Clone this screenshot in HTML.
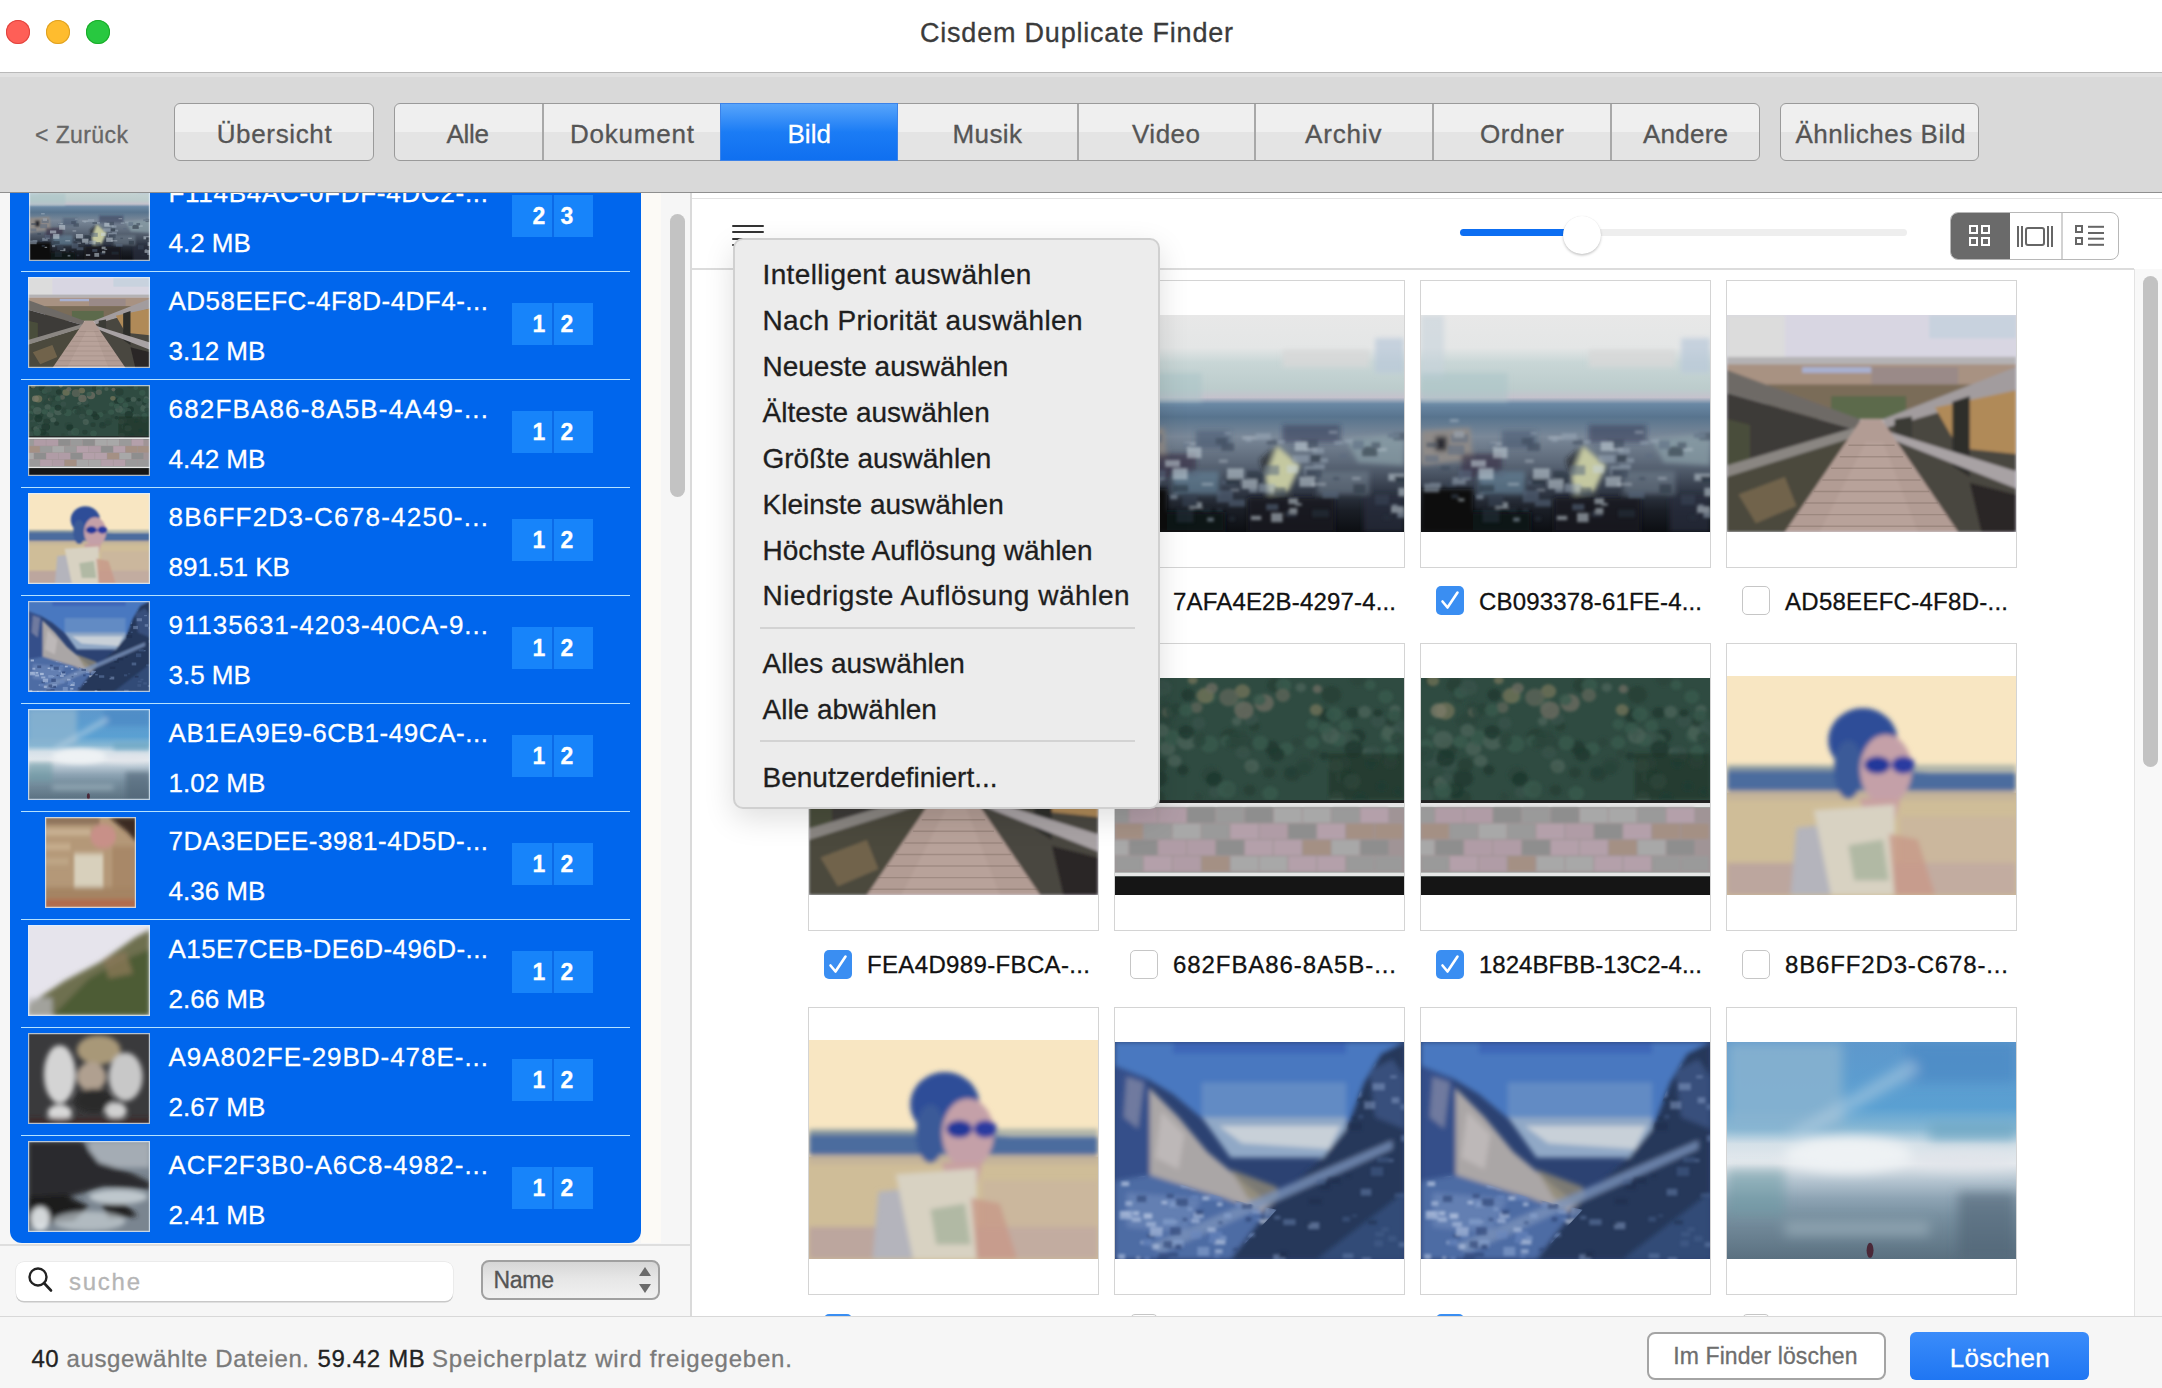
<!DOCTYPE html>
<html><head><meta charset="utf-8"><style>
html,body{margin:0;padding:0;width:2162px;height:1388px;overflow:hidden;background:#fff;position:relative}
body *{box-sizing:border-box}
.t{position:absolute;white-space:pre;line-height:1;font-family:"Liberation Sans",sans-serif}
.a{position:absolute}
</style></head><body>
<svg width="0" height="0" style="position:absolute"><defs>
<clipPath id="cMR"><polygon points="100,0 92,4 86,14 80,30 72,40 56,54 40,75 100,75"/></clipPath>
<clipPath id="cML"><polygon points="0,48 12,46 38,54 56,58 40,75 0,75"/></clipPath>
<filter id="b1" x="-20%" y="-20%" width="140%" height="140%"><feGaussianBlur stdDeviation="1"/></filter>
<filter id="b2" x="-20%" y="-20%" width="140%" height="140%"><feGaussianBlur stdDeviation="2"/></filter>
<filter id="b05" x="-20%" y="-20%" width="140%" height="140%"><feGaussianBlur stdDeviation="0.5"/></filter>
<linearGradient id="gCity" x1="0" y1="0" x2="0" y2="1">
 <stop offset="0" stop-color="#e8e8e8"/><stop offset="0.15" stop-color="#e4e6e6"/><stop offset="0.22" stop-color="#c8d6d6"/>
 <stop offset="0.34" stop-color="#bccccc"/><stop offset="0.38" stop-color="#c4c2cc"/><stop offset="0.41" stop-color="#6a88a4"/>
 <stop offset="0.47" stop-color="#58748e"/><stop offset="0.56" stop-color="#7a8898"/><stop offset="0.68" stop-color="#5c6878"/>
 <stop offset="0.8" stop-color="#343c4a"/><stop offset="0.9" stop-color="#1a1e26"/><stop offset="1" stop-color="#0c0e12"/></linearGradient>
<linearGradient id="gSky" x1="0" y1="0" x2="0" y2="1">
 <stop offset="0" stop-color="#5e98cc"/><stop offset="0.3" stop-color="#5aa0d2"/><stop offset="0.4" stop-color="#88b8d4"/>
 <stop offset="0.47" stop-color="#d4e0e8"/><stop offset="0.56" stop-color="#e6eaee"/><stop offset="0.64" stop-color="#b4c4d0"/>
 <stop offset="0.72" stop-color="#8ea4b4"/><stop offset="0.8" stop-color="#7890a0"/><stop offset="1" stop-color="#5a7080"/></linearGradient>
</defs></svg>
<div class="a" style="left:0;top:0;width:2162px;height:72px;background:#ffffff"></div>
<div class="a" style="left:6px;top:20px;width:24px;height:24px;border-radius:50%;background:#fe5f57;box-shadow:inset 0 0 0 1px #e0443e"></div>
<div class="a" style="left:46px;top:20px;width:24px;height:24px;border-radius:50%;background:#febc2e;box-shadow:inset 0 0 0 1px #dea123"></div>
<div class="a" style="left:86px;top:20px;width:24px;height:24px;border-radius:50%;background:#28c840;box-shadow:inset 0 0 0 1px #1aab29"></div>
<div class="t" style="left:920.0px;top:19.5px;font-size:27px;color:#3b3b3b;-webkit-text-stroke:0.3px #3b3b3b;letter-spacing:0.79px;font-weight:400;">Cisdem Duplicate Finder</div>
<div class="a" style="left:0;top:72px;width:2162px;height:1px;background:#b9b9b9"></div>
<div class="a" style="left:0;top:73px;width:2162px;height:119px;background:#d9d9d9"></div>
<div class="a" style="left:0;top:73px;width:2162px;height:4px;background:#e1e1e1"></div>
<div class="a" style="left:0;top:192px;width:2162px;height:1px;background:#8f8f8f"></div>
<div class="t" style="left:35.0px;top:123.8px;font-size:23px;color:#666666;-webkit-text-stroke:0.3px #666666;letter-spacing:0.41px;font-weight:400;">< Zurück</div>
<div class="a" style="border:1.5px solid #9a9a9a;border-radius:6px;background:linear-gradient(#efefef 0,#efefef 50%,#e4e4e4 50%,#e4e4e4 100%);left:174px;top:103px;width:200px;height:58px"></div>
<div class="t" style="left:216.7px;top:120.8px;font-size:26px;color:#555555;-webkit-text-stroke:0.3px #555555;letter-spacing:0.65px;font-weight:400;">Übersicht</div>
<div class="a" style="border:1.5px solid #9a9a9a;border-radius:6px;background:linear-gradient(#efefef 0,#efefef 50%,#e4e4e4 50%,#e4e4e4 100%);left:394px;top:103px;width:1366px;height:58px"></div>
<div class="a" style="left:542px;top:104px;width:1.5px;height:56px;background:#a8a8a8"></div>
<div class="a" style="left:1077px;top:104px;width:1.5px;height:56px;background:#a8a8a8"></div>
<div class="a" style="left:1254px;top:104px;width:1.5px;height:56px;background:#a8a8a8"></div>
<div class="a" style="left:1432px;top:104px;width:1.5px;height:56px;background:#a8a8a8"></div>
<div class="a" style="left:1610px;top:104px;width:1.5px;height:56px;background:#a8a8a8"></div>
<div class="a" style="left:720px;top:103px;width:178px;height:58px;background:linear-gradient(#5aa6fb,#1b7cf5 50%,#0f6ff0);box-shadow:inset 0 0 0 1px #3b82e8"></div>
<div class="t" style="left:446.6px;top:120.8px;font-size:26px;color:#555555;-webkit-text-stroke:0.3px #555555;letter-spacing:-0.32px;font-weight:400;">Alle</div>
<div class="t" style="left:570.0px;top:120.8px;font-size:26px;color:#555555;-webkit-text-stroke:0.3px #555555;letter-spacing:0.79px;font-weight:400;">Dokument</div>
<div class="t" style="left:787.4px;top:120.8px;font-size:26px;color:#ffffff;-webkit-text-stroke:0.3px #ffffff;letter-spacing:0.08px;font-weight:400;">Bild</div>
<div class="t" style="left:952.5px;top:120.8px;font-size:26px;color:#555555;-webkit-text-stroke:0.3px #555555;letter-spacing:0.40px;font-weight:400;">Musik</div>
<div class="t" style="left:1132.0px;top:120.8px;font-size:26px;color:#555555;-webkit-text-stroke:0.3px #555555;letter-spacing:0.49px;font-weight:400;">Video</div>
<div class="t" style="left:1305.0px;top:120.8px;font-size:26px;color:#555555;-webkit-text-stroke:0.3px #555555;letter-spacing:0.85px;font-weight:400;">Archiv</div>
<div class="t" style="left:1480.0px;top:120.8px;font-size:26px;color:#555555;-webkit-text-stroke:0.3px #555555;letter-spacing:0.62px;font-weight:400;">Ordner</div>
<div class="t" style="left:1643.0px;top:120.8px;font-size:26px;color:#555555;-webkit-text-stroke:0.3px #555555;letter-spacing:0.23px;font-weight:400;">Andere</div>
<div class="a" style="border:1.5px solid #9a9a9a;border-radius:6px;background:linear-gradient(#efefef 0,#efefef 50%,#e4e4e4 50%,#e4e4e4 100%);left:1780px;top:103px;width:199px;height:58px"></div>
<div class="t" style="left:1795.5px;top:120.8px;font-size:26px;color:#555555;-webkit-text-stroke:0.3px #555555;letter-spacing:0.51px;font-weight:400;">Ähnliches Bild</div>
<div class="a" style="left:0;top:193px;width:690px;height:1123px;background:#f6f6f6"></div>
<div class="a" style="left:641px;top:193px;width:20px;height:1050px;background:#fcfaf6"></div>
<div class="a" style="left:670px;top:214px;width:15px;height:283px;border-radius:8px;background:#c3c3c3"></div>
<div class="a" style="left:690px;top:193px;width:2px;height:1123px;background:#dadada"></div>
<div class="a" style="left:10px;top:193px;width:631px;height:1050px;overflow:hidden;border-radius:0 0 12px 12px;background:#0066ed">
<div class="a" style="left:19px;top:-24px;width:121px;height:92px;overflow:hidden"><svg width="100%" height="100%" viewBox="0 0 100 75" preserveAspectRatio="none" style="display:block"><rect width="100" height="75" fill="url(#gCity)"/>
<g filter="url(#b1)">
<rect x="0" y="0" width="8" height="22" fill="#c8d4dc" opacity="0.6"/>
<rect x="90" y="8" width="10" height="12" fill="#b8c8d8" opacity="0.7"/>
<rect x="58" y="12" width="30" height="6" fill="#d8d8d8" opacity="0.8"/>
<rect x="0" y="20" width="30" height="10" fill="#a8c4c8" opacity="0.5"/>
<polygon points="0,40 17,39 18,50 0,52" fill="#8e8a88"/>
<rect x="5" y="42" width="4" height="5" fill="#2a2a30"/>
<rect x="14" y="48" width="14" height="8" fill="#3a3448" opacity="0.7"/>
<polygon points="52,56 56,45 64,52 60,61 53,62" fill="#c4c8a0"/>
<polygon points="56,45 50,50 52,56" fill="#222" opacity="0.6"/>
<polygon points="80,43 100,41 100,52 84,51" fill="#8aa0a8" opacity="0.7"/>
<rect x="0" y="60" width="18" height="15" fill="#0c0c10"/>
<rect x="18" y="68" width="20" height="7" fill="#101418"/>
<rect x="28" y="40" width="12" height="6" fill="#3e5068" opacity="0.5"/>
<rect x="58" y="38" width="20" height="6" fill="#2a3050" opacity="0.5"/>
<rect x="46" y="63" width="30" height="12" fill="#16161c" opacity="0.85"/>
<rect x="20" y="54" width="16" height="8" fill="#6a8aa0" opacity="0.6"/>
<rect x="70" y="54" width="18" height="8" fill="#7a8a98" opacity="0.5"/>
<rect x="86" y="62" width="14" height="13" fill="#2a3040" opacity="0.7"/>
</g>
<g fill="#d8e0e8" opacity="0.35" filter="url(#b05)">
<rect x="10" y="36" width="3" height="1"/><rect x="24" y="44" width="4" height="1"/><rect x="36" y="50" width="3" height="1"/><rect x="44" y="42" width="5" height="1"/>
<rect x="66" y="46" width="4" height="1"/><rect x="74" y="40" width="3" height="1"/><rect x="90" y="46" width="4" height="1"/><rect x="30" y="58" width="4" height="1"/>
<rect x="68" y="58" width="5" height="1"/><rect x="82" y="56" width="3" height="1"/><rect x="40" y="60" width="3" height="1"/><rect x="14" y="56" width="3" height="1"/>
</g><g filter="url(#b05)" opacity="0.55">
<rect x="45.2" y="56.8" width="5.7" height="3.3" fill="#28303c"/>
<rect x="85.5" y="45.7" width="5.2" height="3.1" fill="#28303c"/>
<rect x="79.3" y="42.8" width="3.2" height="1.4" fill="#9aa8b8"/>
<rect x="59.5" y="51.9" width="3.8" height="2.7" fill="#c8d4dc"/>
<rect x="62.3" y="65.0" width="2.3" height="0.9" fill="#c8d4dc"/>
<rect x="60.0" y="63.3" width="3.3" height="2.1" fill="#c8d4dc"/>
<rect x="51.9" y="59.2" width="4.0" height="2.7" fill="#5a6a80"/>
<rect x="65.5" y="52.2" width="4.2" height="3.2" fill="#9aa8b8"/>
<rect x="70.8" y="49.5" width="2.9" height="1.5" fill="#9aa8b8"/>
<rect x="56.3" y="43.2" width="2.4" height="1.3" fill="#9aa8b8"/>
<rect x="95.8" y="65.4" width="2.0" height="1.0" fill="#9aa8b8"/>
<rect x="47.0" y="69.4" width="3.6" height="1.5" fill="#c8d4dc"/>
<rect x="77.9" y="48.1" width="2.3" height="1.3" fill="#5a6a80"/>
<rect x="75.8" y="43.5" width="3.0" height="1.3" fill="#9aa8b8"/>
<rect x="46.5" y="54.6" width="4.7" height="2.2" fill="#28303c"/>
<rect x="19.1" y="62.0" width="2.5" height="1.7" fill="#9aa8b8"/>
<rect x="39.5" y="69.7" width="2.0" height="1.5" fill="#28303c"/>
<rect x="30.4" y="66.5" width="2.8" height="1.6" fill="#28303c"/>
<rect x="64.2" y="43.0" width="6.0" height="2.9" fill="#3a4658"/>
<rect x="1.0" y="58.3" width="5.3" height="3.0" fill="#9aa8b8"/>
<rect x="9.0" y="57.5" width="3.0" height="1.9" fill="#3a4658"/>
<rect x="62.2" y="43.8" width="4.3" height="3.2" fill="#c8d4dc"/>
<rect x="86.7" y="45.5" width="2.6" height="2.0" fill="#28303c"/>
<rect x="24.9" y="45.7" width="5.0" height="3.8" fill="#c8d4dc"/>
<rect x="68.7" y="51.6" width="3.9" height="1.7" fill="#9aa8b8"/>
<rect x="10.4" y="41.2" width="5.9" height="2.9" fill="#5a6a80"/>
<rect x="25.7" y="64.7" width="4.4" height="2.3" fill="#c8d4dc"/>
<rect x="92.9" y="69.3" width="2.5" height="1.5" fill="#28303c"/>
<rect x="61.4" y="48.4" width="5.7" height="2.7" fill="#9aa8b8"/>
<rect x="6.9" y="52.3" width="3.0" height="1.3" fill="#3a4658"/>
<rect x="36.9" y="57.2" width="2.5" height="1.4" fill="#5a6a80"/>
<rect x="98.0" y="59.7" width="4.8" height="3.0" fill="#c8d4dc"/>
<rect x="59.0" y="67.7" width="3.9" height="2.1" fill="#3a4658"/>
<rect x="96.3" y="40.6" width="4.5" height="2.7" fill="#3a4658"/>
<rect x="31.9" y="70.0" width="2.3" height="1.4" fill="#9aa8b8"/>
<rect x="90.0" y="62.1" width="4.8" height="3.5" fill="#3a4658"/>
<rect x="35.2" y="60.6" width="5.6" height="4.2" fill="#5a6a80"/>
<rect x="94.4" y="40.9" width="4.0" height="1.6" fill="#5a6a80"/>
<rect x="37.9" y="40.4" width="2.3" height="1.0" fill="#9aa8b8"/>
<rect x="99.3" y="66.4" width="4.9" height="2.7" fill="#28303c"/>
<rect x="45.8" y="53.9" width="4.2" height="2.5" fill="#28303c"/>
<rect x="3.0" y="58.0" width="3.9" height="1.9" fill="#9aa8b8"/>
<rect x="49.7" y="58.4" width="5.7" height="2.9" fill="#9aa8b8"/>
<rect x="36.8" y="44.3" width="4.4" height="2.7" fill="#3a4658"/>
<rect x="66.0" y="53.3" width="5.6" height="3.0" fill="#3a4658"/>
<rect x="19.9" y="52.9" width="5.2" height="4.0" fill="#c8d4dc"/>
<rect x="38.4" y="57.5" width="3.3" height="1.5" fill="#5a6a80"/>
<rect x="35.1" y="66.9" width="2.2" height="0.9" fill="#3a4658"/>
<rect x="82.2" y="43.4" width="3.9" height="3.0" fill="#5a6a80"/>
<rect x="38.3" y="55.6" width="4.7" height="3.2" fill="#28303c"/>
<rect x="45.2" y="42.2" width="2.1" height="1.6" fill="#9aa8b8"/>
<rect x="67.8" y="48.4" width="3.4" height="2.3" fill="#28303c"/>
<rect x="1.9" y="44.1" width="3.8" height="1.6" fill="#3a4658"/>
<rect x="23.7" y="44.2" width="2.2" height="1.4" fill="#5a6a80"/>
<rect x="10.9" y="56.1" width="4.6" height="2.5" fill="#9aa8b8"/>
<rect x="68.4" y="46.0" width="3.9" height="1.8" fill="#9aa8b8"/>
<rect x="75.5" y="56.0" width="2.1" height="1.1" fill="#3a4658"/>
<rect x="54.0" y="68.4" width="4.0" height="3.2" fill="#c8d4dc"/>
<rect x="39.4" y="63.8" width="5.6" height="2.4" fill="#5a6a80"/>
<rect x="13.0" y="53.6" width="4.5" height="3.4" fill="#5a6a80"/>
<rect x="55.0" y="59.6" width="4.0" height="2.9" fill="#3a4658"/>
<rect x="46.4" y="59.5" width="2.8" height="1.9" fill="#9aa8b8"/>
<rect x="21.3" y="67.0" width="5.9" height="4.7" fill="#28303c"/>
<rect x="97.7" y="68.0" width="3.0" height="2.1" fill="#9aa8b8"/>
<rect x="34.9" y="42.5" width="3.8" height="2.3" fill="#3a4658"/>
<rect x="48.7" y="40.9" width="5.2" height="2.2" fill="#9aa8b8"/>
<rect x="17.3" y="50.1" width="5.2" height="2.4" fill="#c8d4dc"/>
<rect x="100.0" y="67.0" width="4.1" height="2.7" fill="#5a6a80"/>
<rect x="94.6" y="54.8" width="5.8" height="2.5" fill="#c8d4dc"/>
<rect x="43.9" y="56.8" width="5.3" height="3.3" fill="#c8d4dc"/>
<rect x="52.3" y="65.3" width="4.2" height="2.2" fill="#5a6a80"/>
<rect x="95.5" y="66.1" width="4.4" height="2.3" fill="#c8d4dc"/>
<rect x="96.8" y="55.7" width="4.3" height="2.1" fill="#28303c"/>
<rect x="11.4" y="40.1" width="3.5" height="2.2" fill="#9aa8b8"/>
<rect x="51.6" y="52.0" width="5.2" height="3.3" fill="#5a6a80"/>
<rect x="9.3" y="45.0" width="5.7" height="3.3" fill="#5a6a80"/>
<rect x="26.9" y="54.2" width="2.5" height="1.4" fill="#5a6a80"/>
<rect x="52.5" y="43.3" width="3.7" height="1.5" fill="#3a4658"/>
<rect x="12.9" y="63.4" width="2.1" height="1.0" fill="#c8d4dc"/>
<rect x="1.2" y="48.5" width="4.9" height="2.4" fill="#5a6a80"/>
<rect x="10.5" y="61.9" width="2.5" height="1.5" fill="#3a4658"/>
<rect x="71.8" y="61.0" width="5.5" height="2.3" fill="#5a6a80"/>
<rect x="82.5" y="58.5" width="4.2" height="3.1" fill="#28303c"/>
<rect x="63.8" y="55.9" width="5.4" height="3.5" fill="#c8d4dc"/>
<rect x="23.3" y="62.2" width="5.2" height="4.0" fill="#3a4658"/>
<rect x="60.3" y="66.7" width="2.8" height="2.0" fill="#c8d4dc"/>
<rect x="88.8" y="44.0" width="3.0" height="2.0" fill="#3a4658"/>
<rect x="38.8" y="53.0" width="5.8" height="3.6" fill="#c8d4dc"/>
<rect x="20.1" y="58.8" width="5.2" height="2.3" fill="#28303c"/>
<rect x="68.2" y="67.3" width="5.9" height="2.6" fill="#28303c"/>
</g></svg><div class="a" style="left:0;top:0;width:100%;height:100%;box-shadow:inset 0 0 0 1.2px rgba(225,240,255,0.75)"></div></div>
<div class="a" style="left:11px;top:77.75px;width:609px;height:1.3px;background:#b4e2ff"></div>
<div class="a" style="left:502px;top:2px;width:81px;height:42px;background:#1784fa"></div>
<div class="a" style="left:542px;top:2px;width:1.5px;height:42px;background:#0b6ae8"></div>
<div class="t" style="left:158.5px;top:-13.0px;font-size:26px;color:#ffffff;-webkit-text-stroke:0.3px #ffffff;letter-spacing:0.72px;font-weight:400;">F114B4AC-0FDF-4DC2-...</div>
<div class="t" style="left:158.5px;top:36.8px;font-size:26px;color:#ffffff;-webkit-text-stroke:0.3px #ffffff;letter-spacing:0.00px;font-weight:400;">4.2 MB</div>
<div class="t" style="left:522.5px;top:11.5px;font-size:23px;color:#ffffff;-webkit-text-stroke:0.3px #ffffff;letter-spacing:0.00px;font-weight:700;">2</div>
<div class="t" style="left:550.5px;top:11.5px;font-size:23px;color:#ffffff;-webkit-text-stroke:0.3px #ffffff;letter-spacing:0.00px;font-weight:700;">3</div>
<div class="a" style="left:18px;top:84px;width:122px;height:91px;overflow:hidden"><svg width="100%" height="100%" viewBox="0 0 100 75" preserveAspectRatio="none" style="display:block"><rect width="100" height="75" fill="#d8d6e2"/>
<g filter="url(#b05)">
<rect x="0" y="0" width="20" height="15" fill="#dcdcdc"/>
<rect x="70" y="0" width="30" height="8" fill="#c8d2de"/>
<rect x="0" y="14.5" width="100" height="2.5" fill="#b4b2b4"/>
<rect x="0" y="17" width="100" height="8" fill="#a89282"/>
<rect x="26" y="18" width="24" height="2" fill="#a8b0d0"/>
<rect x="50" y="18" width="30" height="6" fill="#9a8a88"/>
<rect x="14" y="24" width="72" height="12" fill="#7a6c58"/>
<rect x="36" y="28" width="26" height="8" fill="#5c6a4c"/>
<polygon points="0,19 46,36 46,40 0,27" fill="#6e6a66"/>
<polygon points="0,27 46,40 46,75 0,75" fill="#3c3a38"/>
<polygon points="0,36 8,38 8,75 0,75" fill="#4a4e3a"/>
<polygon points="0,52 44,39 45,42 0,56" fill="#8a8682"/>
<polygon points="0,56 45,42 38,75 0,75" fill="#4c4a3c"/>
<polygon points="4,62 20,56 24,66 10,72" fill="#7a6a50" opacity="0.8"/>
<polygon points="54,36 100,18 100,26 55,39" fill="#a29c9e"/>
<polygon points="55,39 100,26 100,75 62,75" fill="#4a4640"/>
<polygon points="72,32 100,26 100,48 80,46" fill="#b08a58"/>
<polygon points="58,36 64,35 64,46 58,44" fill="#3a3a36"/>
<polygon points="78,30 84,28 84,56 78,52" fill="#2e2e2c"/>
<polygon points="55,40 100,54 100,60 57,43" fill="#a8a2a4"/>
<polygon points="84,58 100,62 100,75 88,75" fill="#2a2826"/>
<polygon points="46.5,36 53.5,36 80,75 20,75" fill="#b29c94"/>
<polygon points="48,44 54,44 66,75 32,75" fill="#bca69e" opacity="0.6"/>
</g>
<g opacity="0.25" stroke="#5a4a40" stroke-width="0.5">
<line x1="20" y1="73" x2="80" y2="73"/><line x1="24" y1="69" x2="76" y2="69"/><line x1="27" y1="65" x2="73" y2="65"/><line x1="30" y1="61" x2="70" y2="61"/><line x1="33" y1="57" x2="67" y2="57"/><line x1="36" y1="53" x2="64" y2="53"/><line x1="39" y1="49" x2="61" y2="49"/><line x1="42" y1="45" x2="58" y2="45"/>
</g></svg><div class="a" style="left:0;top:0;width:100%;height:100%;box-shadow:inset 0 0 0 1.2px rgba(225,240,255,0.75)"></div></div>
<div class="a" style="left:11px;top:185.75px;width:609px;height:1.3px;background:#b4e2ff"></div>
<div class="a" style="left:502px;top:110px;width:81px;height:42px;background:#1784fa"></div>
<div class="a" style="left:542px;top:110px;width:1.5px;height:42px;background:#0b6ae8"></div>
<div class="t" style="left:158.5px;top:95.0px;font-size:26px;color:#ffffff;-webkit-text-stroke:0.3px #ffffff;letter-spacing:0.49px;font-weight:400;">AD58EEFC-4F8D-4DF4-...</div>
<div class="t" style="left:158.5px;top:144.8px;font-size:26px;color:#ffffff;-webkit-text-stroke:0.3px #ffffff;letter-spacing:0.00px;font-weight:400;">3.12 MB</div>
<div class="t" style="left:522.5px;top:119.5px;font-size:23px;color:#ffffff;-webkit-text-stroke:0.3px #ffffff;letter-spacing:0.00px;font-weight:700;">1</div>
<div class="t" style="left:550.5px;top:119.5px;font-size:23px;color:#ffffff;-webkit-text-stroke:0.3px #ffffff;letter-spacing:0.00px;font-weight:700;">2</div>
<div class="a" style="left:18px;top:192px;width:122px;height:91px;overflow:hidden"><svg width="100%" height="100%" viewBox="0 0 100 75" preserveAspectRatio="none" style="display:block"><rect width="100" height="75" fill="#2f4b41"/>
<g filter="url(#b05)">
<ellipse cx="32.4" cy="6.3" rx="2.8" ry="2.5" fill="#3a5a4e" opacity="0.8"/>
<ellipse cx="9.4" cy="24.5" rx="3.3" ry="3.0" fill="#243e36" opacity="0.8"/>
<ellipse cx="3.7" cy="18.2" rx="1.6" ry="1.5" fill="#3a5a4e" opacity="0.8"/>
<ellipse cx="55.1" cy="2.5" rx="2.6" ry="2.4" fill="#243e36" opacity="0.8"/>
<ellipse cx="58.3" cy="2.6" rx="2.7" ry="2.4" fill="#3a5a4e" opacity="0.8"/>
<ellipse cx="4.7" cy="36.1" rx="2.1" ry="1.9" fill="#243e36" opacity="0.8"/>
<ellipse cx="54.1" cy="24.0" rx="2.6" ry="2.4" fill="#1e382e" opacity="0.8"/>
<ellipse cx="18.1" cy="24.4" rx="2.8" ry="2.5" fill="#4a6258" opacity="0.8"/>
<ellipse cx="9.7" cy="29.9" rx="2.6" ry="2.4" fill="#38524a" opacity="0.8"/>
<ellipse cx="20.6" cy="28.6" rx="2.4" ry="2.1" fill="#4a6258" opacity="0.8"/>
<ellipse cx="46.6" cy="38.8" rx="2.2" ry="2.0" fill="#243e36" opacity="0.8"/>
<ellipse cx="79.4" cy="29.4" rx="2.0" ry="1.8" fill="#38524a" opacity="0.8"/>
<ellipse cx="30.0" cy="20.8" rx="2.2" ry="2.0" fill="#2a463c" opacity="0.8"/>
<ellipse cx="28.8" cy="41.2" rx="1.7" ry="1.6" fill="#2a463c" opacity="0.8"/>
<ellipse cx="16.5" cy="14.4" rx="3.4" ry="3.0" fill="#2a463c" opacity="0.8"/>
<ellipse cx="3.9" cy="28.1" rx="3.0" ry="2.7" fill="#38524a" opacity="0.8"/>
<ellipse cx="78.9" cy="34.4" rx="2.2" ry="2.0" fill="#4a6258" opacity="0.8"/>
<ellipse cx="59.4" cy="24.4" rx="2.4" ry="2.2" fill="#3a5a4e" opacity="0.8"/>
<ellipse cx="94.5" cy="19.9" rx="2.8" ry="2.5" fill="#3a5a4e" opacity="0.8"/>
<ellipse cx="73.1" cy="13.0" rx="2.7" ry="2.4" fill="#1e382e" opacity="0.8"/>
<ellipse cx="82.2" cy="12.0" rx="2.3" ry="2.0" fill="#1e382e" opacity="0.8"/>
<ellipse cx="34.7" cy="39.5" rx="2.2" ry="2.0" fill="#38524a" opacity="0.8"/>
<ellipse cx="11.7" cy="2.5" rx="3.0" ry="2.7" fill="#243e36" opacity="0.8"/>
<ellipse cx="39.8" cy="38.5" rx="2.5" ry="2.2" fill="#243e36" opacity="0.8"/>
<ellipse cx="44.9" cy="23.1" rx="3.3" ry="2.9" fill="#2a463c" opacity="0.8"/>
<ellipse cx="86.4" cy="11.7" rx="2.3" ry="2.1" fill="#4a6258" opacity="0.8"/>
<ellipse cx="68.3" cy="16.0" rx="2.0" ry="1.8" fill="#3a5a4e" opacity="0.8"/>
<ellipse cx="17.6" cy="9.7" rx="2.0" ry="1.8" fill="#2a463c" opacity="0.8"/>
<ellipse cx="18.2" cy="11.8" rx="1.8" ry="1.6" fill="#5c6458" opacity="0.8"/>
<ellipse cx="95.3" cy="29.0" rx="2.5" ry="2.3" fill="#38524a" opacity="0.8"/>
<ellipse cx="65.5" cy="31.1" rx="2.4" ry="2.2" fill="#1e382e" opacity="0.8"/>
<ellipse cx="79.8" cy="16.5" rx="2.3" ry="2.1" fill="#3a5a4e" opacity="0.8"/>
<ellipse cx="48.2" cy="16.8" rx="1.9" ry="1.7" fill="#243e36" opacity="0.8"/>
<ellipse cx="44.1" cy="4.6" rx="2.7" ry="2.4" fill="#707258" opacity="0.8"/>
<ellipse cx="53.7" cy="39.9" rx="2.7" ry="2.5" fill="#3a5a4e" opacity="0.8"/>
<ellipse cx="87.4" cy="25.8" rx="1.8" ry="1.6" fill="#4a6258" opacity="0.8"/>
<ellipse cx="95.5" cy="25.3" rx="2.4" ry="2.2" fill="#3a5a4e" opacity="0.8"/>
<ellipse cx="84.9" cy="41.7" rx="2.4" ry="2.2" fill="#2a463c" opacity="0.8"/>
<ellipse cx="31.2" cy="6.1" rx="3.0" ry="2.7" fill="#707258" opacity="0.8"/>
<ellipse cx="51.6" cy="8.6" rx="3.4" ry="3.1" fill="#6a6c60" opacity="0.8"/>
<ellipse cx="75.8" cy="12.5" rx="2.8" ry="2.5" fill="#3a5a4e" opacity="0.8"/>
<ellipse cx="69.6" cy="11.0" rx="2.2" ry="2.0" fill="#707258" opacity="0.8"/>
<ellipse cx="53.3" cy="32.7" rx="2.2" ry="1.9" fill="#243e36" opacity="0.8"/>
<ellipse cx="61.3" cy="33.1" rx="3.0" ry="2.7" fill="#243e36" opacity="0.8"/>
<ellipse cx="80.6" cy="34.4" rx="3.0" ry="2.7" fill="#243e36" opacity="0.8"/>
<ellipse cx="20.0" cy="20.7" rx="3.0" ry="2.7" fill="#3a5a4e" opacity="0.8"/>
<ellipse cx="79.0" cy="19.8" rx="1.9" ry="1.7" fill="#38524a" opacity="0.8"/>
<ellipse cx="95.7" cy="18.8" rx="3.4" ry="3.0" fill="#4a6258" opacity="0.8"/>
<ellipse cx="95.5" cy="15.3" rx="1.9" ry="1.7" fill="#243e36" opacity="0.8"/>
<ellipse cx="47.0" cy="14.2" rx="2.5" ry="2.2" fill="#38524a" opacity="0.8"/>
<ellipse cx="84.0" cy="20.1" rx="2.8" ry="2.5" fill="#1e382e" opacity="0.8"/>
<ellipse cx="8.5" cy="27.7" rx="3.3" ry="3.0" fill="#1e382e" opacity="0.8"/>
<ellipse cx="75.0" cy="20.1" rx="1.9" ry="1.7" fill="#1e382e" opacity="0.8"/>
<ellipse cx="33.3" cy="33.6" rx="3.4" ry="3.1" fill="#2a463c" opacity="0.8"/>
<ellipse cx="46.3" cy="31.2" rx="1.7" ry="1.5" fill="#243e36" opacity="0.8"/>
<ellipse cx="17.0" cy="5.3" rx="1.8" ry="1.6" fill="#2a463c" opacity="0.8"/>
<ellipse cx="14.6" cy="34.7" rx="3.5" ry="3.1" fill="#1e382e" opacity="0.8"/>
<ellipse cx="93.7" cy="6.5" rx="2.6" ry="2.3" fill="#3a5a4e" opacity="0.8"/>
<ellipse cx="1.4" cy="40.8" rx="2.8" ry="2.5" fill="#38524a" opacity="0.8"/>
<ellipse cx="74.9" cy="5.8" rx="3.5" ry="3.1" fill="#243e36" opacity="0.8"/>
<ellipse cx="21.1" cy="10.6" rx="2.1" ry="1.9" fill="#243e36" opacity="0.8"/>
<ellipse cx="32.6" cy="22.9" rx="3.2" ry="2.9" fill="#3a5a4e" opacity="0.8"/>
<ellipse cx="91.0" cy="14.9" rx="2.4" ry="2.2" fill="#38524a" opacity="0.8"/>
<ellipse cx="81.5" cy="21.7" rx="3.2" ry="2.8" fill="#38524a" opacity="0.8"/>
<ellipse cx="13.1" cy="6.4" rx="2.5" ry="2.3" fill="#2a463c" opacity="0.8"/>
<ellipse cx="60.9" cy="32.6" rx="1.8" ry="1.6" fill="#243e36" opacity="0.8"/>
<ellipse cx="47.3" cy="30.5" rx="2.6" ry="2.4" fill="#4a6258" opacity="0.8"/>
<ellipse cx="68.2" cy="22.3" rx="2.5" ry="2.2" fill="#3a5a4e" opacity="0.8"/>
<ellipse cx="88.3" cy="2.4" rx="1.9" ry="1.7" fill="#3a5a4e" opacity="0.8"/>
<ellipse cx="77.2" cy="21.3" rx="2.6" ry="2.4" fill="#3a5a4e" opacity="0.8"/>
<ellipse cx="44.3" cy="25.7" rx="2.5" ry="2.3" fill="#38524a" opacity="0.8"/>
<ellipse cx="19.9" cy="11.6" rx="2.5" ry="2.3" fill="#2a463c" opacity="0.8"/>
<ellipse cx="24.8" cy="22.0" rx="3.3" ry="2.9" fill="#4a6258" opacity="0.8"/>
<ellipse cx="92.3" cy="37.5" rx="1.9" ry="1.7" fill="#2a463c" opacity="0.8"/>
<ellipse cx="13.7" cy="5.1" rx="2.4" ry="2.1" fill="#3a5a4e" opacity="0.8"/>
<ellipse cx="42.8" cy="8.9" rx="2.1" ry="1.9" fill="#3a5a4e" opacity="0.8"/>
<ellipse cx="15.4" cy="30.1" rx="2.8" ry="2.5" fill="#243e36" opacity="0.8"/>
<ellipse cx="25.3" cy="5.8" rx="2.4" ry="2.2" fill="#1e382e" opacity="0.8"/>
<ellipse cx="39.8" cy="20.5" rx="3.5" ry="3.1" fill="#243e36" opacity="0.8"/>
<ellipse cx="16.1" cy="18.1" rx="2.5" ry="2.3" fill="#4a6258" opacity="0.8"/>
<ellipse cx="42.1" cy="15.0" rx="1.7" ry="1.5" fill="#4a6258" opacity="0.8"/>
<ellipse cx="1.9" cy="23.3" rx="2.4" ry="2.1" fill="#3a5a4e" opacity="0.8"/>
<ellipse cx="38.4" cy="21.7" rx="2.1" ry="1.9" fill="#3a5a4e" opacity="0.8"/>
<ellipse cx="11.3" cy="38.6" rx="2.0" ry="1.8" fill="#3a5a4e" opacity="0.8"/>
<ellipse cx="8.4" cy="11.4" rx="3.3" ry="3.0" fill="#707258" opacity="0.8"/>
<ellipse cx="82.0" cy="35.7" rx="2.9" ry="2.6" fill="#4a6258" opacity="0.8"/>
<ellipse cx="40.6" cy="22.5" rx="2.5" ry="2.3" fill="#2a463c" opacity="0.8"/>
<ellipse cx="70.0" cy="3.8" rx="1.6" ry="1.5" fill="#6a6c60" opacity="0.8"/>
<ellipse cx="26.9" cy="0.7" rx="1.7" ry="1.5" fill="#707258" opacity="0.8"/>
<ellipse cx="6.7" cy="36.2" rx="2.4" ry="2.2" fill="#4a6258" opacity="0.8"/>
<ellipse cx="99.4" cy="17.5" rx="3.3" ry="3.0" fill="#38524a" opacity="0.8"/>
<ellipse cx="12.9" cy="22.1" rx="2.0" ry="1.8" fill="#3a5a4e" opacity="0.8"/>
<ellipse cx="96.9" cy="11.0" rx="1.9" ry="1.7" fill="#4a6258" opacity="0.8"/>
<ellipse cx="62.9" cy="22.3" rx="1.9" ry="1.7" fill="#2a463c" opacity="0.8"/>
<ellipse cx="50.0" cy="7.5" rx="2.2" ry="2.0" fill="#3a5a4e" opacity="0.8"/>
<ellipse cx="3.7" cy="0.8" rx="2.5" ry="2.3" fill="#243e36" opacity="0.8"/>
<ellipse cx="24.6" cy="18.8" rx="2.8" ry="2.5" fill="#1e382e" opacity="0.8"/>
<ellipse cx="43.2" cy="20.8" rx="3.2" ry="2.9" fill="#2a463c" opacity="0.8"/>
<ellipse cx="97.0" cy="12.9" rx="1.9" ry="1.7" fill="#243e36" opacity="0.8"/>
<ellipse cx="34.3" cy="35.0" rx="2.9" ry="2.6" fill="#1e382e" opacity="0.8"/>
<ellipse cx="14.0" cy="41.6" rx="3.5" ry="3.1" fill="#243e36" opacity="0.8"/>
<ellipse cx="1.4" cy="26.3" rx="3.3" ry="2.9" fill="#2a463c" opacity="0.8"/>
<ellipse cx="16.3" cy="3.5" rx="3.2" ry="2.9" fill="#38524a" opacity="0.8"/>
<ellipse cx="28.2" cy="10.2" rx="2.1" ry="1.9" fill="#5c6458" opacity="0.8"/>
<ellipse cx="44.6" cy="11.1" rx="3.4" ry="3.1" fill="#6a6c60" opacity="0.8"/>
<ellipse cx="96.6" cy="13.0" rx="2.2" ry="2.0" fill="#3a5a4e" opacity="0.8"/>
<ellipse cx="33.5" cy="3.5" rx="2.1" ry="1.9" fill="#6a6c60" opacity="0.8"/>
<ellipse cx="9.1" cy="34.3" rx="1.8" ry="1.6" fill="#38524a" opacity="0.8"/>
<ellipse cx="4.2" cy="0.9" rx="2.1" ry="1.9" fill="#707258" opacity="0.8"/>
<ellipse cx="65.8" cy="30.1" rx="3.3" ry="2.9" fill="#2a463c" opacity="0.8"/>
<ellipse cx="76.4" cy="30.3" rx="2.5" ry="2.2" fill="#4a6258" opacity="0.8"/>
<ellipse cx="72.4" cy="27.0" rx="1.6" ry="1.4" fill="#1e382e" opacity="0.8"/>
<ellipse cx="89.2" cy="26.3" rx="3.0" ry="2.7" fill="#38524a" opacity="0.8"/>
<ellipse cx="13.9" cy="22.0" rx="2.5" ry="2.3" fill="#3a5a4e" opacity="0.8"/>
<ellipse cx="82.6" cy="24.5" rx="3.3" ry="3.0" fill="#1e382e" opacity="0.8"/>
<ellipse cx="95.6" cy="27.0" rx="1.7" ry="1.5" fill="#3a5a4e" opacity="0.8"/>
<ellipse cx="13.3" cy="15.1" rx="1.7" ry="1.5" fill="#2a463c" opacity="0.8"/>
<ellipse cx="55.9" cy="26.4" rx="2.8" ry="2.5" fill="#1e382e" opacity="0.8"/>
<ellipse cx="24.5" cy="11.1" rx="2.4" ry="2.2" fill="#3a5a4e" opacity="0.8"/>
<ellipse cx="50.3" cy="22.5" rx="2.8" ry="2.5" fill="#3a5a4e" opacity="0.8"/>
<ellipse cx="74.6" cy="19.9" rx="3.1" ry="2.8" fill="#4a6258" opacity="0.8"/>
<ellipse cx="23.5" cy="31.8" rx="2.0" ry="1.8" fill="#1e382e" opacity="0.8"/>
<ellipse cx="97.6" cy="20.7" rx="2.3" ry="2.0" fill="#2a463c" opacity="0.8"/>
<ellipse cx="91.0" cy="12.1" rx="1.6" ry="1.4" fill="#1e382e" opacity="0.8"/>
<ellipse cx="64.3" cy="3.3" rx="1.8" ry="1.6" fill="#4a6258" opacity="0.8"/>
<ellipse cx="69.3" cy="26.1" rx="1.8" ry="1.6" fill="#2a463c" opacity="0.8"/>
<ellipse cx="6.1" cy="11.3" rx="2.8" ry="2.6" fill="#7a7a68" opacity="0.8"/>
<ellipse cx="29.1" cy="21.7" rx="2.4" ry="2.2" fill="#2a463c" opacity="0.8"/>
<ellipse cx="76.7" cy="41.7" rx="2.6" ry="2.3" fill="#4a6258" opacity="0.8"/>
<ellipse cx="97.8" cy="39.3" rx="1.5" ry="1.4" fill="#2a463c" opacity="0.8"/>
<ellipse cx="7.6" cy="21.3" rx="3.5" ry="3.1" fill="#4a6258" opacity="0.8"/>
<ellipse cx="38.7" cy="38.5" rx="3.4" ry="3.0" fill="#3a5a4e" opacity="0.8"/>
<ellipse cx="58.1" cy="6.0" rx="2.5" ry="2.3" fill="#5c6458" opacity="0.8"/>
<ellipse cx="88.7" cy="29.5" rx="2.0" ry="1.8" fill="#2a463c" opacity="0.8"/>
<ellipse cx="39.4" cy="6.7" rx="3.4" ry="3.1" fill="#5c6458" opacity="0.8"/>
<ellipse cx="72.7" cy="17.5" rx="2.3" ry="2.0" fill="#3a5a4e" opacity="0.8"/>
<ellipse cx="84.0" cy="0.1" rx="3.0" ry="2.7" fill="#2a463c" opacity="0.8"/>
<ellipse cx="12.0" cy="38.9" rx="2.9" ry="2.6" fill="#1e382e" opacity="0.8"/>
<ellipse cx="29.0" cy="15.6" rx="2.3" ry="2.1" fill="#38524a" opacity="0.8"/>
<ellipse cx="7.6" cy="38.9" rx="3.0" ry="2.7" fill="#3a5a4e" opacity="0.8"/>
<rect x="74" y="26" width="26" height="16" fill="#1c3428" opacity="0.6"/>
</g>
<rect x="0" y="42.2" width="100" height="1" fill="#222"/>
<rect x="0" y="43.2" width="100" height="1.6" fill="#e6e6e6"/>
<rect x="0" y="44.8" width="100" height="22.4" fill="#a09496"/>
<g filter="url(#b05)">
<rect x="-5.0" y="44.8" width="9.6" height="5.2" fill="#9a9a9a"/>
<rect x="5.0" y="44.8" width="9.6" height="5.2" fill="#b09ca6"/>
<rect x="15.0" y="44.8" width="9.6" height="5.2" fill="#b09ca6"/>
<rect x="25.0" y="44.8" width="9.6" height="5.2" fill="#8e8e8e"/>
<rect x="35.0" y="44.8" width="9.6" height="5.2" fill="#9a9a9a"/>
<rect x="45.0" y="44.8" width="9.6" height="5.2" fill="#8e8e8e"/>
<rect x="55.0" y="44.8" width="9.6" height="5.2" fill="#a8a8a8"/>
<rect x="65.0" y="44.8" width="9.6" height="5.2" fill="#a8a8a8"/>
<rect x="75.0" y="44.8" width="9.6" height="5.2" fill="#9a9a9a"/>
<rect x="85.0" y="44.8" width="9.6" height="5.2" fill="#b4a0aa"/>
<rect x="0.0" y="50.4" width="9.6" height="5.2" fill="#a49084"/>
<rect x="10.0" y="50.4" width="9.6" height="5.2" fill="#9a9a9a"/>
<rect x="20.0" y="50.4" width="9.6" height="5.2" fill="#a8a8a8"/>
<rect x="30.0" y="50.4" width="9.6" height="5.2" fill="#9a9a9a"/>
<rect x="40.0" y="50.4" width="9.6" height="5.2" fill="#b4a0aa"/>
<rect x="50.0" y="50.4" width="9.6" height="5.2" fill="#b09ca6"/>
<rect x="60.0" y="50.4" width="9.6" height="5.2" fill="#8e8e8e"/>
<rect x="70.0" y="50.4" width="9.6" height="5.2" fill="#b4a0aa"/>
<rect x="80.0" y="50.4" width="9.6" height="5.2" fill="#a49084"/>
<rect x="90.0" y="50.4" width="9.6" height="5.2" fill="#a49084"/>
<rect x="-5.0" y="56.0" width="9.6" height="5.2" fill="#a8a8a8"/>
<rect x="5.0" y="56.0" width="9.6" height="5.2" fill="#8e8e8e"/>
<rect x="15.0" y="56.0" width="9.6" height="5.2" fill="#b09ca6"/>
<rect x="25.0" y="56.0" width="9.6" height="5.2" fill="#b09ca6"/>
<rect x="35.0" y="56.0" width="9.6" height="5.2" fill="#8e8e8e"/>
<rect x="45.0" y="56.0" width="9.6" height="5.2" fill="#b4a0aa"/>
<rect x="55.0" y="56.0" width="9.6" height="5.2" fill="#b4a0aa"/>
<rect x="65.0" y="56.0" width="9.6" height="5.2" fill="#a49084"/>
<rect x="75.0" y="56.0" width="9.6" height="5.2" fill="#a8a8a8"/>
<rect x="85.0" y="56.0" width="9.6" height="5.2" fill="#8e8e8e"/>
<rect x="0.0" y="61.6" width="9.6" height="5.2" fill="#9a9a9a"/>
<rect x="10.0" y="61.6" width="9.6" height="5.2" fill="#b4a0aa"/>
<rect x="20.0" y="61.6" width="9.6" height="5.2" fill="#b09ca6"/>
<rect x="30.0" y="61.6" width="9.6" height="5.2" fill="#a49084"/>
<rect x="40.0" y="61.6" width="9.6" height="5.2" fill="#a8a8a8"/>
<rect x="50.0" y="61.6" width="9.6" height="5.2" fill="#a8a8a8"/>
<rect x="60.0" y="61.6" width="9.6" height="5.2" fill="#b4a0aa"/>
<rect x="70.0" y="61.6" width="9.6" height="5.2" fill="#b4a0aa"/>
<rect x="80.0" y="61.6" width="9.6" height="5.2" fill="#9a9a9a"/>
<rect x="90.0" y="61.6" width="9.6" height="5.2" fill="#9a9a9a"/>
</g>
<rect x="0" y="67.2" width="100" height="1.4" fill="#e6e6e6"/>
<rect x="0" y="68.6" width="100" height="6.4" fill="#151515"/></svg><div class="a" style="left:0;top:0;width:100%;height:100%;box-shadow:inset 0 0 0 1.2px rgba(225,240,255,0.75)"></div></div>
<div class="a" style="left:11px;top:293.75px;width:609px;height:1.3px;background:#b4e2ff"></div>
<div class="a" style="left:502px;top:218px;width:81px;height:42px;background:#1784fa"></div>
<div class="a" style="left:542px;top:218px;width:1.5px;height:42px;background:#0b6ae8"></div>
<div class="t" style="left:158.5px;top:203.0px;font-size:26px;color:#ffffff;-webkit-text-stroke:0.3px #ffffff;letter-spacing:1.17px;font-weight:400;">682FBA86-8A5B-4A49-...</div>
<div class="t" style="left:158.5px;top:252.8px;font-size:26px;color:#ffffff;-webkit-text-stroke:0.3px #ffffff;letter-spacing:0.00px;font-weight:400;">4.42 MB</div>
<div class="t" style="left:522.5px;top:227.5px;font-size:23px;color:#ffffff;-webkit-text-stroke:0.3px #ffffff;letter-spacing:0.00px;font-weight:700;">1</div>
<div class="t" style="left:550.5px;top:227.5px;font-size:23px;color:#ffffff;-webkit-text-stroke:0.3px #ffffff;letter-spacing:0.00px;font-weight:700;">2</div>
<div class="a" style="left:18px;top:300px;width:122px;height:91px;overflow:hidden"><svg width="100%" height="100%" viewBox="0 0 100 75" preserveAspectRatio="none" style="display:block"><rect width="100" height="75" fill="#f8e6c2"/>
<rect x="0" y="40" width="100" height="35" fill="#cfbd98"/>
<g filter="url(#b1)">
<polygon points="0,31 30,31 70,33 100,33 100,39.5 0,39.5" fill="#4c6c9e"/>
<rect x="0" y="30.5" width="100" height="2" fill="#96a4a0" opacity="0.8"/>
<rect x="0" y="39.5" width="100" height="3" fill="#c4b49a"/>
<rect x="0" y="64" width="100" height="11" fill="#bca69e"/>
<rect x="60" y="48" width="40" height="27" fill="#c8b2a2" opacity="0.5"/>
<polygon points="24,52 42,50 42,75 22,75" fill="#b4b4bc"/>
<ellipse cx="47" cy="22" rx="12" ry="11" fill="#2e4e98"/>
<ellipse cx="42" cy="32" rx="5" ry="10" fill="#3a5a98"/>
<ellipse cx="55" cy="32" rx="9" ry="12" fill="#c4a0a8"/>
<ellipse cx="52" cy="30.5" rx="4.5" ry="3" fill="#24389a"/>
<ellipse cx="61" cy="30.5" rx="4" ry="3" fill="#2a3aa0"/>
<polygon points="46,42 60,42 58,50 48,50" fill="#c8a0a0"/>
<polygon points="30,46 58,44 58,75 36,75" fill="#d8d2c2"/>
<polygon points="56,54 66,56 72,75 58,75" fill="#c89888" opacity="0.8"/>
<polygon points="42,58 54,56 56,70 44,70" fill="#98a890" opacity="0.6"/>
</g></svg><div class="a" style="left:0;top:0;width:100%;height:100%;box-shadow:inset 0 0 0 1.2px rgba(225,240,255,0.75)"></div></div>
<div class="a" style="left:11px;top:401.75px;width:609px;height:1.3px;background:#b4e2ff"></div>
<div class="a" style="left:502px;top:326px;width:81px;height:42px;background:#1784fa"></div>
<div class="a" style="left:542px;top:326px;width:1.5px;height:42px;background:#0b6ae8"></div>
<div class="t" style="left:158.5px;top:311.0px;font-size:26px;color:#ffffff;-webkit-text-stroke:0.3px #ffffff;letter-spacing:1.24px;font-weight:400;">8B6FF2D3-C678-4250-...</div>
<div class="t" style="left:158.5px;top:360.8px;font-size:26px;color:#ffffff;-webkit-text-stroke:0.3px #ffffff;letter-spacing:0.00px;font-weight:400;">891.51 KB</div>
<div class="t" style="left:522.5px;top:335.5px;font-size:23px;color:#ffffff;-webkit-text-stroke:0.3px #ffffff;letter-spacing:0.00px;font-weight:700;">1</div>
<div class="t" style="left:550.5px;top:335.5px;font-size:23px;color:#ffffff;-webkit-text-stroke:0.3px #ffffff;letter-spacing:0.00px;font-weight:700;">2</div>
<div class="a" style="left:18px;top:408px;width:122px;height:91px;overflow:hidden"><svg width="100%" height="100%" viewBox="0 0 100 75" preserveAspectRatio="none" style="display:block"><rect width="100" height="75" fill="#2c4272"/>
<g filter="url(#b1)">
<polygon points="0,0 100,0 100,2 90,10 82,26 75,34 45,34 32,28 20,18 10,12 0,10" fill="#4a78c0"/>
<rect x="20" y="0" width="60" height="4" fill="#3e66b8"/>
<rect x="30" y="14" width="50" height="12" fill="#6890c4" opacity="0.8"/>
<polygon points="30,26 80,26 80,34 74,40 40,40" fill="#90a8c6"/>
<polygon points="36,29 78,29 74,37 44,35" fill="#c8d0d8"/>
<polygon points="0,8 10,12 14,20 12,50 0,60" fill="#34508a"/>
<polygon points="4,12 10,14 8,30 3,26" fill="#8a8ca8" opacity="0.7"/>
<polygon points="12,16 22,26 32,38 44,48 54,56 50,60 38,54 24,50 12,46" fill="#aaa6a6"/>
<polygon points="16,24 24,32 22,44 14,40" fill="#c4c0c0" opacity="0.7"/>
<polygon points="40,44 56,50 58,58 46,54" fill="#8e8874" opacity="0.8"/>
<polygon points="0,48 12,46 38,54 54,60 40,75 0,75" fill="#4e6ca4"/>
<polygon points="4,52 30,54 24,66 4,64" fill="#6c88b8" opacity="0.7"/>
<polygon points="100,0 92,4 86,14 80,30 72,40 56,54 40,75 100,75" fill="#25375a"/>
<polygon points="88,10 96,6 100,12 100,30 90,26" fill="#3e5684" opacity="0.8"/>
<polygon points="70,75 100,52 100,75" fill="#34507e" opacity="0.8"/>
<polygon points="12,70 96,34 96,37 16,73" fill="#7a92ba" opacity="0.8"/>
</g><g clip-path="url(#cML)"><g filter="url(#b05)" opacity="0.6">
<rect x="34.3" y="67.0" width="3.9" height="3.0" fill="#d0dcf0"/>
<rect x="1.6" y="58.4" width="4.3" height="2.9" fill="#b8c8e4"/>
<rect x="6.2" y="58.5" width="2.2" height="1.4" fill="#d0dcf0"/>
<rect x="13.7" y="66.7" width="2.7" height="1.3" fill="#6a88c0"/>
<rect x="8.8" y="68.7" width="1.9" height="1.2" fill="#b8c8e4"/>
<rect x="7.3" y="74.1" width="1.5" height="1.1" fill="#b8c8e4"/>
<rect x="48.0" y="53.0" width="4.4" height="2.7" fill="#b8c8e4"/>
<rect x="10.0" y="74.0" width="2.1" height="1.6" fill="#6a88c0"/>
<rect x="16.4" y="55.2" width="2.0" height="0.9" fill="#8aa4d0"/>
<rect x="18.3" y="69.3" width="3.3" height="2.1" fill="#2a4070"/>
<rect x="3.6" y="55.0" width="2.4" height="1.6" fill="#b8c8e4"/>
<rect x="26.5" y="65.8" width="1.7" height="1.3" fill="#8aa4d0"/>
<rect x="52.2" y="55.1" width="2.7" height="1.7" fill="#6a88c0"/>
<rect x="20.1" y="61.9" width="1.5" height="0.6" fill="#b8c8e4"/>
<rect x="34.3" y="73.6" width="1.9" height="0.9" fill="#6a88c0"/>
<rect x="18.9" y="55.0" width="3.1" height="2.2" fill="#8aa4d0"/>
<rect x="32.4" y="68.2" width="2.6" height="1.3" fill="#6a88c0"/>
<rect x="52.0" y="46.8" width="2.5" height="1.6" fill="#b8c8e4"/>
<rect x="18.7" y="72.7" width="3.1" height="1.6" fill="#2a4070"/>
<rect x="16.8" y="68.8" width="3.4" height="2.3" fill="#2a4070"/>
<rect x="54.8" y="49.0" width="1.6" height="1.3" fill="#d0dcf0"/>
<rect x="50.8" y="45.0" width="3.7" height="2.0" fill="#2a4070"/>
<rect x="25.1" y="57.1" width="1.7" height="1.3" fill="#8aa4d0"/>
<rect x="44.1" y="54.4" width="2.1" height="1.7" fill="#d0dcf0"/>
<rect x="52.2" y="63.5" width="3.9" height="1.7" fill="#6a88c0"/>
<rect x="20.5" y="45.8" width="2.8" height="1.3" fill="#d0dcf0"/>
<rect x="46.9" y="74.3" width="2.9" height="1.7" fill="#2a4070"/>
<rect x="26.3" y="53.0" width="2.7" height="1.2" fill="#6a88c0"/>
<rect x="45.2" y="60.5" width="2.0" height="1.6" fill="#2a4070"/>
<rect x="9.9" y="59.2" width="3.0" height="1.9" fill="#d0dcf0"/>
<rect x="19.9" y="68.4" width="3.8" height="2.6" fill="#8aa4d0"/>
<rect x="41.8" y="55.3" width="3.6" height="1.9" fill="#6a88c0"/>
<rect x="14.6" y="74.4" width="3.6" height="2.9" fill="#2a4070"/>
<rect x="35.7" y="62.0" width="1.5" height="0.9" fill="#2a4070"/>
<rect x="17.9" y="52.5" width="2.4" height="1.4" fill="#2a4070"/>
<rect x="19.1" y="64.0" width="3.7" height="2.7" fill="#2a4070"/>
<rect x="50.7" y="49.3" width="4.1" height="2.4" fill="#2a4070"/>
<rect x="52.6" y="60.1" width="3.1" height="1.4" fill="#2a4070"/>
<rect x="51.6" y="58.8" width="3.6" height="2.5" fill="#6a88c0"/>
<rect x="9.5" y="68.2" width="3.2" height="2.2" fill="#6a88c0"/>
<rect x="16.6" y="61.1" width="4.1" height="2.1" fill="#8aa4d0"/>
<rect x="10.8" y="62.2" width="3.4" height="1.6" fill="#b8c8e4"/>
<rect x="34.7" y="45.3" width="2.9" height="1.4" fill="#8aa4d0"/>
<rect x="49.0" y="47.4" width="4.4" height="2.6" fill="#d0dcf0"/>
<rect x="2.0" y="58.4" width="2.6" height="1.7" fill="#d0dcf0"/>
<rect x="11.2" y="66.3" width="2.6" height="1.4" fill="#2a4070"/>
<rect x="47.1" y="70.9" width="3.6" height="2.2" fill="#8aa4d0"/>
<rect x="30.2" y="53.3" width="2.4" height="1.4" fill="#d0dcf0"/>
<rect x="16.1" y="54.9" width="1.9" height="1.1" fill="#d0dcf0"/>
<rect x="35.3" y="55.5" width="1.9" height="1.2" fill="#d0dcf0"/>
<rect x="26.2" y="50.2" width="1.9" height="0.8" fill="#8aa4d0"/>
<rect x="21.0" y="54.1" width="4.2" height="2.6" fill="#2a4070"/>
<rect x="34.6" y="71.6" width="2.6" height="1.5" fill="#b8c8e4"/>
<rect x="27.1" y="58.9" width="3.6" height="2.0" fill="#b8c8e4"/>
<rect x="32.8" y="52.1" width="4.4" height="2.7" fill="#6a88c0"/>
<rect x="1.1" y="73.3" width="2.4" height="1.9" fill="#b8c8e4"/>
<rect x="26.2" y="47.8" width="3.4" height="1.9" fill="#2a4070"/>
<rect x="2.2" y="48.2" width="2.7" height="1.6" fill="#d0dcf0"/>
<rect x="15.1" y="73.0" width="3.8" height="1.9" fill="#2a4070"/>
<rect x="46.4" y="66.4" width="2.4" height="1.4" fill="#6a88c0"/>
<rect x="28.5" y="70.8" width="4.1" height="3.1" fill="#8aa4d0"/>
<rect x="41.8" y="53.3" width="3.1" height="1.7" fill="#2a4070"/>
<rect x="40.2" y="44.8" width="2.5" height="1.7" fill="#d0dcf0"/>
<rect x="7.3" y="44.1" width="3.2" height="2.1" fill="#8aa4d0"/>
<rect x="48.8" y="60.9" width="1.5" height="1.1" fill="#6a88c0"/>
<rect x="32.7" y="65.4" width="4.4" height="2.9" fill="#6a88c0"/>
<rect x="26.2" y="65.2" width="3.7" height="2.8" fill="#6a88c0"/>
<rect x="45.7" y="46.0" width="4.0" height="2.7" fill="#6a88c0"/>
<rect x="32.0" y="64.1" width="2.9" height="1.5" fill="#b8c8e4"/>
<rect x="26.3" y="61.0" width="3.0" height="1.6" fill="#b8c8e4"/>
<rect x="23.4" y="60.8" width="1.6" height="1.1" fill="#2a4070"/>
<rect x="45.1" y="68.5" width="3.5" height="1.4" fill="#6a88c0"/>
<rect x="53.8" y="74.9" width="3.6" height="1.5" fill="#8aa4d0"/>
<rect x="12.1" y="64.0" width="4.4" height="3.0" fill="#b8c8e4"/>
<rect x="54.7" y="65.9" width="2.8" height="1.3" fill="#b8c8e4"/>
<rect x="22.8" y="49.0" width="3.4" height="1.4" fill="#8aa4d0"/>
<rect x="36.3" y="67.1" width="2.3" height="1.5" fill="#8aa4d0"/>
<rect x="40.8" y="71.2" width="1.9" height="1.1" fill="#2a4070"/>
<rect x="37.7" y="59.2" width="2.6" height="1.7" fill="#8aa4d0"/>
<rect x="7.6" y="53.1" width="3.2" height="2.2" fill="#2a4070"/>
<rect x="50.1" y="61.2" width="3.4" height="1.7" fill="#d0dcf0"/>
<rect x="13.0" y="69.8" width="2.4" height="1.9" fill="#b8c8e4"/>
<rect x="47.5" y="58.1" width="2.7" height="1.2" fill="#8aa4d0"/>
<rect x="36.0" y="46.6" width="3.5" height="1.5" fill="#8aa4d0"/>
<rect x="27.9" y="58.1" width="2.7" height="1.6" fill="#2a4070"/>
<rect x="5.9" y="60.5" width="3.1" height="1.7" fill="#b8c8e4"/>
<rect x="52.0" y="57.3" width="3.9" height="2.7" fill="#8aa4d0"/>
<rect x="53.5" y="64.6" width="4.0" height="1.8" fill="#d0dcf0"/>
<rect x="20.7" y="69.9" width="2.4" height="1.8" fill="#2a4070"/>
<rect x="43.8" y="55.7" width="3.7" height="2.0" fill="#2a4070"/>
</g></g><g clip-path="url(#cMR)"><g filter="url(#b05)" opacity="0.5">
<rect x="87.6" y="61.6" width="3.0" height="1.5" fill="#1c2c48"/>
<rect x="48.7" y="44.0" width="4.4" height="3.1" fill="#6a84b0"/>
<rect x="86.2" y="20.5" width="3.9" height="2.7" fill="#8aa0c8"/>
<rect x="94.6" y="40.4" width="1.8" height="1.1" fill="#6a84b0"/>
<rect x="79.8" y="45.8" width="1.8" height="1.0" fill="#1c2c48"/>
<rect x="61.7" y="30.7" width="2.3" height="1.5" fill="#4a6490"/>
<rect x="82.0" y="59.7" width="1.8" height="0.7" fill="#4a6490"/>
<rect x="89.7" y="68.5" width="3.0" height="2.2" fill="#4a6490"/>
<rect x="70.9" y="48.3" width="3.6" height="2.6" fill="#1c2c48"/>
<rect x="78.0" y="18.4" width="2.8" height="1.5" fill="#1c2c48"/>
<rect x="45.4" y="66.0" width="3.1" height="1.4" fill="#6a84b0"/>
<rect x="58.7" y="14.7" width="3.0" height="1.3" fill="#4a6490"/>
<rect x="90.0" y="65.7" width="3.1" height="1.5" fill="#4a6490"/>
<rect x="41.0" y="25.0" width="4.2" height="2.7" fill="#6a84b0"/>
<rect x="62.5" y="39.6" width="2.4" height="1.6" fill="#8aa0c8"/>
<rect x="43.2" y="31.7" width="3.7" height="2.1" fill="#8aa0c8"/>
<rect x="54.7" y="73.4" width="4.2" height="2.8" fill="#8aa0c8"/>
<rect x="66.8" y="62.3" width="3.9" height="2.4" fill="#8aa0c8"/>
<rect x="58.2" y="61.2" width="4.3" height="2.1" fill="#6a84b0"/>
<rect x="67.1" y="54.2" width="4.4" height="1.8" fill="#1c2c48"/>
<rect x="55.1" y="60.1" width="2.1" height="1.2" fill="#6a84b0"/>
<rect x="95.7" y="19.1" width="2.7" height="2.1" fill="#8aa0c8"/>
<rect x="56.1" y="35.6" width="2.9" height="1.3" fill="#8aa0c8"/>
<rect x="69.8" y="47.6" width="2.9" height="1.6" fill="#4a6490"/>
<rect x="98.2" y="69.2" width="2.6" height="1.7" fill="#6a84b0"/>
<rect x="78.8" y="73.1" width="3.7" height="1.7" fill="#6a84b0"/>
<rect x="73.6" y="46.8" width="4.4" height="2.1" fill="#1c2c48"/>
<rect x="80.9" y="27.8" width="4.4" height="2.7" fill="#1c2c48"/>
<rect x="95.2" y="11.6" width="2.3" height="0.9" fill="#8aa0c8"/>
<rect x="44.5" y="17.4" width="2.6" height="2.1" fill="#4a6490"/>
<rect x="76.4" y="10.8" width="3.4" height="1.5" fill="#1c2c48"/>
<rect x="42.7" y="35.8" width="3.7" height="1.6" fill="#1c2c48"/>
<rect x="82.1" y="9.5" width="4.0" height="1.7" fill="#6a84b0"/>
<rect x="94.5" y="67.0" width="2.9" height="1.9" fill="#4a6490"/>
<rect x="89.1" y="14.2" width="4.3" height="2.5" fill="#8aa0c8"/>
<rect x="66.8" y="20.7" width="3.6" height="1.5" fill="#6a84b0"/>
<rect x="98.7" y="21.5" width="4.3" height="1.9" fill="#6a84b0"/>
<rect x="56.8" y="72.5" width="2.8" height="2.1" fill="#1c2c48"/>
<rect x="82.8" y="18.7" width="3.3" height="1.6" fill="#1c2c48"/>
<rect x="84.3" y="25.2" width="1.6" height="1.2" fill="#4a6490"/>
<rect x="82.0" y="25.8" width="1.7" height="1.2" fill="#1c2c48"/>
<rect x="64.0" y="10.2" width="3.7" height="2.4" fill="#4a6490"/>
<rect x="44.4" y="39.0" width="1.6" height="1.0" fill="#4a6490"/>
<rect x="51.0" y="55.4" width="3.0" height="2.2" fill="#4a6490"/>
<rect x="96.7" y="52.2" width="3.6" height="1.6" fill="#4a6490"/>
<rect x="85.4" y="74.5" width="3.2" height="1.3" fill="#8aa0c8"/>
<rect x="51.3" y="24.4" width="2.6" height="1.5" fill="#8aa0c8"/>
<rect x="90.7" y="39.8" width="4.1" height="1.8" fill="#4a6490"/>
<rect x="78.7" y="60.4" width="2.6" height="1.7" fill="#4a6490"/>
<rect x="49.8" y="46.9" width="2.7" height="1.1" fill="#1c2c48"/>
<rect x="68.3" y="4.4" width="3.5" height="2.1" fill="#6a84b0"/>
<rect x="75.7" y="4.5" width="2.2" height="1.2" fill="#6a84b0"/>
<rect x="45.6" y="5.8" width="3.2" height="1.4" fill="#8aa0c8"/>
<rect x="47.2" y="8.4" width="4.4" height="1.9" fill="#1c2c48"/>
<rect x="85.0" y="50.7" width="3.7" height="2.4" fill="#6a84b0"/>
<rect x="55.3" y="17.4" width="3.9" height="2.6" fill="#4a6490"/>
<rect x="56.7" y="1.0" width="3.1" height="2.1" fill="#6a84b0"/>
<rect x="86.6" y="7.0" width="3.3" height="1.4" fill="#6a84b0"/>
<rect x="81.5" y="17.0" width="3.8" height="2.1" fill="#6a84b0"/>
<rect x="66.1" y="62.4" width="1.7" height="0.8" fill="#1c2c48"/>
<rect x="60.2" y="36.4" width="2.9" height="1.5" fill="#6a84b0"/>
<rect x="53.8" y="9.4" width="3.1" height="1.6" fill="#8aa0c8"/>
<rect x="98.9" y="32.2" width="3.1" height="2.2" fill="#6a84b0"/>
<rect x="55.2" y="22.4" width="1.6" height="1.1" fill="#1c2c48"/>
<rect x="88.5" y="43.2" width="4.3" height="3.1" fill="#4a6490"/>
<rect x="47.2" y="44.5" width="2.9" height="2.2" fill="#8aa0c8"/>
<rect x="52.9" y="48.3" width="2.7" height="1.9" fill="#8aa0c8"/>
<rect x="92.2" y="64.1" width="2.5" height="1.3" fill="#4a6490"/>
<rect x="57.1" y="44.1" width="3.5" height="1.7" fill="#6a84b0"/>
<rect x="50.6" y="30.6" width="3.4" height="1.7" fill="#1c2c48"/>
</g></g></svg><div class="a" style="left:0;top:0;width:100%;height:100%;box-shadow:inset 0 0 0 1.2px rgba(225,240,255,0.75)"></div></div>
<div class="a" style="left:11px;top:509.75px;width:609px;height:1.3px;background:#b4e2ff"></div>
<div class="a" style="left:502px;top:434px;width:81px;height:42px;background:#1784fa"></div>
<div class="a" style="left:542px;top:434px;width:1.5px;height:42px;background:#0b6ae8"></div>
<div class="t" style="left:158.5px;top:419.0px;font-size:26px;color:#ffffff;-webkit-text-stroke:0.3px #ffffff;letter-spacing:0.94px;font-weight:400;">91135631-4203-40CA-9...</div>
<div class="t" style="left:158.5px;top:468.8px;font-size:26px;color:#ffffff;-webkit-text-stroke:0.3px #ffffff;letter-spacing:0.00px;font-weight:400;">3.5 MB</div>
<div class="t" style="left:522.5px;top:443.5px;font-size:23px;color:#ffffff;-webkit-text-stroke:0.3px #ffffff;letter-spacing:0.00px;font-weight:700;">1</div>
<div class="t" style="left:550.5px;top:443.5px;font-size:23px;color:#ffffff;-webkit-text-stroke:0.3px #ffffff;letter-spacing:0.00px;font-weight:700;">2</div>
<div class="a" style="left:18px;top:516px;width:122px;height:91px;overflow:hidden"><svg width="100%" height="100%" viewBox="0 0 100 75" preserveAspectRatio="none" style="display:block"><rect width="100" height="75" fill="url(#gSky)"/>
<g filter="url(#b2)">
<rect x="0" y="0" width="40" height="30" fill="#8cb4d0" opacity="0.8"/>
<rect x="62" y="0" width="38" height="14" fill="#4a88c4" opacity="0.7"/>
<polygon points="20,32 64,6 67,10 24,35" fill="#b8d2e4" opacity="0.5"/>
<ellipse cx="42" cy="39" rx="22" ry="6" fill="#eef2f4"/>
<rect x="70" y="28" width="30" height="6" fill="#6aa4c0" opacity="0.7"/>
<ellipse cx="82" cy="41" rx="18" ry="3" fill="#e0e4ea" opacity="0.8"/>
<rect x="0" y="44" width="20" height="16" fill="#6a9aa2" opacity="0.5"/>
<rect x="80" y="52" width="20" height="23" fill="#506474" opacity="0.6"/>
<rect x="20" y="62" width="50" height="5" fill="#a0b4c0" opacity="0.6"/>
</g>
<ellipse cx="49.5" cy="72" rx="1.2" ry="2.6" fill="#4a2838"/></svg><div class="a" style="left:0;top:0;width:100%;height:100%;box-shadow:inset 0 0 0 1.2px rgba(225,240,255,0.75)"></div></div>
<div class="a" style="left:11px;top:617.75px;width:609px;height:1.3px;background:#b4e2ff"></div>
<div class="a" style="left:502px;top:542px;width:81px;height:42px;background:#1784fa"></div>
<div class="a" style="left:542px;top:542px;width:1.5px;height:42px;background:#0b6ae8"></div>
<div class="t" style="left:158.5px;top:527.0px;font-size:26px;color:#ffffff;-webkit-text-stroke:0.3px #ffffff;letter-spacing:0.56px;font-weight:400;">AB1EA9E9-6CB1-49CA-...</div>
<div class="t" style="left:158.5px;top:576.8px;font-size:26px;color:#ffffff;-webkit-text-stroke:0.3px #ffffff;letter-spacing:0.00px;font-weight:400;">1.02 MB</div>
<div class="t" style="left:522.5px;top:551.5px;font-size:23px;color:#ffffff;-webkit-text-stroke:0.3px #ffffff;letter-spacing:0.00px;font-weight:700;">1</div>
<div class="t" style="left:550.5px;top:551.5px;font-size:23px;color:#ffffff;-webkit-text-stroke:0.3px #ffffff;letter-spacing:0.00px;font-weight:700;">2</div>
<div class="a" style="left:35px;top:624px;width:91px;height:91px;overflow:hidden"><svg width="100%" height="100%" viewBox="0 0 100 75" preserveAspectRatio="none" style="display:block"><rect width="100" height="75" fill="#b49878"/>
<g filter="url(#b2)">
<rect x="0" y="0" width="60" height="6" fill="#8a7058"/>
<polygon points="70,0 100,0 100,20 90,12" fill="#3a2a20"/>
<rect x="0" y="10" width="50" height="5" fill="#cab496"/>
<rect x="0" y="22" width="28" height="5" fill="#c8b090"/>
<rect x="0" y="34" width="26" height="5" fill="#c0a888"/>
<rect x="74" y="24" width="26" height="36" fill="#a88868"/>
<ellipse cx="64" cy="16" rx="14" ry="10" fill="#c89088"/>
<rect x="32" y="30" width="32" height="28" fill="#d8d0bc"/>
<rect x="0" y="58" width="100" height="10" fill="#a48464"/>
<rect x="0" y="68" width="100" height="7" fill="#b06848"/>
</g></svg><div class="a" style="left:0;top:0;width:100%;height:100%;box-shadow:inset 0 0 0 1.2px rgba(225,240,255,0.75)"></div></div>
<div class="a" style="left:11px;top:725.75px;width:609px;height:1.3px;background:#b4e2ff"></div>
<div class="a" style="left:502px;top:650px;width:81px;height:42px;background:#1784fa"></div>
<div class="a" style="left:542px;top:650px;width:1.5px;height:42px;background:#0b6ae8"></div>
<div class="t" style="left:158.5px;top:635.0px;font-size:26px;color:#ffffff;-webkit-text-stroke:0.3px #ffffff;letter-spacing:0.56px;font-weight:400;">7DA3EDEE-3981-4D5D-...</div>
<div class="t" style="left:158.5px;top:684.8px;font-size:26px;color:#ffffff;-webkit-text-stroke:0.3px #ffffff;letter-spacing:0.00px;font-weight:400;">4.36 MB</div>
<div class="t" style="left:522.5px;top:659.5px;font-size:23px;color:#ffffff;-webkit-text-stroke:0.3px #ffffff;letter-spacing:0.00px;font-weight:700;">1</div>
<div class="t" style="left:550.5px;top:659.5px;font-size:23px;color:#ffffff;-webkit-text-stroke:0.3px #ffffff;letter-spacing:0.00px;font-weight:700;">2</div>
<div class="a" style="left:18px;top:732px;width:122px;height:91px;overflow:hidden"><svg width="100%" height="100%" viewBox="0 0 100 75" preserveAspectRatio="none" style="display:block"><rect width="100" height="75" fill="#e6e4ec"/>
<g filter="url(#b2)">
<polygon points="100,4 100,75 0,75 0,66 30,46 60,30 88,10" fill="#6e7050"/>
<polygon points="100,20 100,75 20,75 50,44 75,30" fill="#4e5c36"/>
<polygon points="62,28 80,22 86,40 66,44" fill="#8a7858" opacity="0.8"/>
<rect x="0" y="60" width="20" height="15" fill="#b8b8bc" opacity="0.7"/>
</g></svg><div class="a" style="left:0;top:0;width:100%;height:100%;box-shadow:inset 0 0 0 1.2px rgba(225,240,255,0.75)"></div></div>
<div class="a" style="left:11px;top:833.75px;width:609px;height:1.3px;background:#b4e2ff"></div>
<div class="a" style="left:502px;top:758px;width:81px;height:42px;background:#1784fa"></div>
<div class="a" style="left:542px;top:758px;width:1.5px;height:42px;background:#0b6ae8"></div>
<div class="t" style="left:158.5px;top:743.0px;font-size:26px;color:#ffffff;-webkit-text-stroke:0.3px #ffffff;letter-spacing:0.42px;font-weight:400;">A15E7CEB-DE6D-496D-...</div>
<div class="t" style="left:158.5px;top:792.8px;font-size:26px;color:#ffffff;-webkit-text-stroke:0.3px #ffffff;letter-spacing:0.00px;font-weight:400;">2.66 MB</div>
<div class="t" style="left:522.5px;top:767.5px;font-size:23px;color:#ffffff;-webkit-text-stroke:0.3px #ffffff;letter-spacing:0.00px;font-weight:700;">1</div>
<div class="t" style="left:550.5px;top:767.5px;font-size:23px;color:#ffffff;-webkit-text-stroke:0.3px #ffffff;letter-spacing:0.00px;font-weight:700;">2</div>
<div class="a" style="left:18px;top:840px;width:122px;height:91px;overflow:hidden"><svg width="100%" height="100%" viewBox="0 0 100 75" preserveAspectRatio="none" style="display:block"><rect width="100" height="75" fill="#3a3a3c"/>
<g filter="url(#b2)">
<ellipse cx="58" cy="14" rx="18" ry="12" fill="#a89878"/>
<ellipse cx="26" cy="34" rx="13" ry="24" fill="#d4d4d4"/>
<ellipse cx="80" cy="36" rx="14" ry="20" fill="#c8c8c8"/>
<ellipse cx="52" cy="36" rx="12" ry="12" fill="#b0a090"/>
<ellipse cx="54" cy="56" rx="16" ry="10" fill="#2a2a2c"/>
<ellipse cx="26" cy="66" rx="10" ry="7" fill="#d8d8d8"/>
<ellipse cx="72" cy="64" rx="9" ry="7" fill="#d0d0d0"/>
<rect x="0" y="70" width="100" height="5" fill="#402020" opacity="0.6"/>
</g></svg><div class="a" style="left:0;top:0;width:100%;height:100%;box-shadow:inset 0 0 0 1.2px rgba(225,240,255,0.75)"></div></div>
<div class="a" style="left:11px;top:941.75px;width:609px;height:1.3px;background:#b4e2ff"></div>
<div class="a" style="left:502px;top:866px;width:81px;height:42px;background:#1784fa"></div>
<div class="a" style="left:542px;top:866px;width:1.5px;height:42px;background:#0b6ae8"></div>
<div class="t" style="left:158.5px;top:851.0px;font-size:26px;color:#ffffff;-webkit-text-stroke:0.3px #ffffff;letter-spacing:0.97px;font-weight:400;">A9A802FE-29BD-478E-...</div>
<div class="t" style="left:158.5px;top:900.8px;font-size:26px;color:#ffffff;-webkit-text-stroke:0.3px #ffffff;letter-spacing:0.00px;font-weight:400;">2.67 MB</div>
<div class="t" style="left:522.5px;top:875.5px;font-size:23px;color:#ffffff;-webkit-text-stroke:0.3px #ffffff;letter-spacing:0.00px;font-weight:700;">1</div>
<div class="t" style="left:550.5px;top:875.5px;font-size:23px;color:#ffffff;-webkit-text-stroke:0.3px #ffffff;letter-spacing:0.00px;font-weight:700;">2</div>
<div class="a" style="left:18px;top:948px;width:122px;height:91px;overflow:hidden"><svg width="100%" height="100%" viewBox="0 0 100 75" preserveAspectRatio="none" style="display:block"><rect width="100" height="75" fill="#7a8590"/>
<g filter="url(#b2)">
<rect x="50" y="0" width="50" height="22" fill="#a4acb4"/>
<polygon points="0,0 44,0 58,18 84,26 100,34 100,40 62,38 34,46 0,56" fill="#2c2c2e"/>
<polygon points="0,46 30,44 50,54 38,66 0,70" fill="#1a1a1c"/>
<polygon points="60,52 80,52 90,62 66,64" fill="#202022"/>
<ellipse cx="74" cy="46" rx="24" ry="6" fill="#d0d8dc" opacity="0.8"/>
<ellipse cx="50" cy="66" rx="30" ry="8" fill="#c8d0d4" opacity="0.7"/>
<ellipse cx="10" cy="64" rx="8" ry="10" fill="#e8ecee" opacity="0.9"/>
</g></svg><div class="a" style="left:0;top:0;width:100%;height:100%;box-shadow:inset 0 0 0 1.2px rgba(225,240,255,0.75)"></div></div>
<div class="a" style="left:502px;top:974px;width:81px;height:42px;background:#1784fa"></div>
<div class="a" style="left:542px;top:974px;width:1.5px;height:42px;background:#0b6ae8"></div>
<div class="t" style="left:158.5px;top:959.0px;font-size:26px;color:#ffffff;-webkit-text-stroke:0.3px #ffffff;letter-spacing:0.97px;font-weight:400;">ACF2F3B0-A6C8-4982-...</div>
<div class="t" style="left:158.5px;top:1008.8px;font-size:26px;color:#ffffff;-webkit-text-stroke:0.3px #ffffff;letter-spacing:0.00px;font-weight:400;">2.41 MB</div>
<div class="t" style="left:522.5px;top:983.5px;font-size:23px;color:#ffffff;-webkit-text-stroke:0.3px #ffffff;letter-spacing:0.00px;font-weight:700;">1</div>
<div class="t" style="left:550.5px;top:983.5px;font-size:23px;color:#ffffff;-webkit-text-stroke:0.3px #ffffff;letter-spacing:0.00px;font-weight:700;">2</div>
</div>
<div class="a" style="left:0;top:1244px;width:690px;height:1.5px;background:#dedede"></div>
<div class="a" style="left:16px;top:1262px;width:437px;height:39px;background:#fff;border-radius:8px;box-shadow:0 1.5px 0 #c8c8c8, 0 0 0 0.5px #e0e0e0"></div>
<svg class="a" style="left:26px;top:1265px" width="30" height="30" viewBox="0 0 30 30"><circle cx="12" cy="12" r="8.5" fill="none" stroke="#222" stroke-width="2.4"/><line x1="18" y1="18" x2="25" y2="25.5" stroke="#222" stroke-width="2.6" stroke-linecap="round"/></svg>
<div class="t" style="left:69.0px;top:1269.7px;font-size:24px;color:#b5b5b5;-webkit-text-stroke:0.3px #b5b5b5;letter-spacing:1.74px;font-weight:400;">suche</div>
<div class="a" style="left:481px;top:1260px;width:179px;height:40px;border:2px solid #a0a0a0;border-radius:8px;background:linear-gradient(#d6d6d6,#e6e6e6 45%,#f0f0f0)"></div>
<div class="t" style="left:493.5px;top:1269.2px;font-size:23px;color:#555555;-webkit-text-stroke:0.3px #555555;letter-spacing:-0.29px;font-weight:400;">Name</div>
<svg class="a" style="left:636px;top:1264px" width="18" height="32" viewBox="0 0 18 32"><path d="M9 3 L15 12 L3 12 Z" fill="#6a6a6a"/><path d="M9 29 L15 20 L3 20 Z" fill="#6a6a6a"/></svg>
<div class="a" style="left:692px;top:193px;width:1470px;height:1123px;background:#ffffff"></div>
<div class="a" style="left:692px;top:268px;width:1442px;height:1.5px;background:#dcdcdc"></div>
<div class="a" style="left:692px;top:197.5px;width:1470px;height:1.2px;background:#e2e2e2"></div>
<div class="a" style="left:732px;top:224.6px;width:32px;height:2.2px;border-radius:1px;background:#333"></div>
<div class="a" style="left:732px;top:231.1px;width:32px;height:2.2px;border-radius:1px;background:#333"></div>
<div class="a" style="left:732px;top:237.6px;width:32px;height:2.2px;border-radius:1px;background:#333"></div>
<div class="a" style="left:732px;top:244.1px;width:32px;height:2.2px;border-radius:1px;background:#333"></div>
<div class="a" style="left:1460px;top:229px;width:447px;height:7px;border-radius:3.5px;background:#eeeeee"></div>
<div class="a" style="left:1460px;top:229px;width:110px;height:7px;border-radius:3.5px;background:#0d6ef2"></div>
<div class="a" style="left:1563px;top:216px;width:38px;height:38px;border-radius:50%;background:#fff;box-shadow:0 1.5px 2.5px rgba(0,0,0,0.22),0 0 0.5px rgba(0,0,0,0.1)"></div>
<div class="a" style="left:1950px;top:212px;width:169px;height:48px;border:1.5px solid #b8b8b8;border-radius:8px;background:#fff;overflow:hidden"><div class="a" style="left:0;top:0;width:59px;height:48px;background:#6a6a6a"></div><div class="a" style="left:110px;top:0;width:1.5px;height:48px;background:#d2d2d2"></div></div>
<svg class="a" style="left:1966px;top:222px" width="28" height="28" viewBox="0 0 28 28"><g fill="none" stroke="#fff" stroke-width="2"><rect x="4" y="4" width="7" height="7"/><rect x="16" y="4" width="7" height="7"/><rect x="4" y="16" width="7" height="7"/><rect x="16" y="16" width="7" height="7"/></g></svg>
<svg class="a" style="left:2015px;top:220px" width="42" height="32" viewBox="0 0 42 32"><g fill="none" stroke="#666" stroke-width="2"><line x1="3" y1="6" x2="3" y2="27"/><line x1="7" y1="6" x2="7" y2="27"/><rect x="11" y="8" width="18" height="17" rx="2"/><line x1="33" y1="6" x2="33" y2="27"/><line x1="37" y1="6" x2="37" y2="27"/></g></svg>
<svg class="a" style="left:2072px;top:222px" width="34" height="28" viewBox="0 0 34 28"><g fill="none" stroke="#666" stroke-width="2"><rect x="4" y="4" width="6" height="6"/><rect x="4" y="16" width="6" height="6"/></g><g stroke="#666" stroke-width="2"><line x1="16" y1="4.8" x2="32" y2="4.8"/><line x1="16" y1="11" x2="32" y2="11"/><line x1="16" y1="16.7" x2="32" y2="16.7"/><line x1="16" y1="22.8" x2="32" y2="22.8"/></g></svg>
<div class="a" style="left:2134px;top:269px;width:28px;height:1047px;background:#f8f8f8;border-left:1.5px solid #e3e3e3"></div>
<div class="a" style="left:2143px;top:276px;width:15px;height:491px;border-radius:8px;background:#c2c2c2"></div>
<div class="a" style="left:808px;top:279.5px;width:291px;height:288px;border:1.5px solid #d4d4d4;background:#fff"></div>
<div class="a" style="left:809px;top:314.5px;width:289px;height:217px;overflow:hidden"><svg width="100%" height="100%" viewBox="0 0 100 75" preserveAspectRatio="none" style="display:block"><rect width="100" height="75" fill="url(#gCity)"/>
<g filter="url(#b1)">
<rect x="0" y="0" width="8" height="22" fill="#c8d4dc" opacity="0.6"/>
<rect x="90" y="8" width="10" height="12" fill="#b8c8d8" opacity="0.7"/>
<rect x="58" y="12" width="30" height="6" fill="#d8d8d8" opacity="0.8"/>
<rect x="0" y="20" width="30" height="10" fill="#a8c4c8" opacity="0.5"/>
<polygon points="0,40 17,39 18,50 0,52" fill="#8e8a88"/>
<rect x="5" y="42" width="4" height="5" fill="#2a2a30"/>
<rect x="14" y="48" width="14" height="8" fill="#3a3448" opacity="0.7"/>
<polygon points="52,56 56,45 64,52 60,61 53,62" fill="#c4c8a0"/>
<polygon points="56,45 50,50 52,56" fill="#222" opacity="0.6"/>
<polygon points="80,43 100,41 100,52 84,51" fill="#8aa0a8" opacity="0.7"/>
<rect x="0" y="60" width="18" height="15" fill="#0c0c10"/>
<rect x="18" y="68" width="20" height="7" fill="#101418"/>
<rect x="28" y="40" width="12" height="6" fill="#3e5068" opacity="0.5"/>
<rect x="58" y="38" width="20" height="6" fill="#2a3050" opacity="0.5"/>
<rect x="46" y="63" width="30" height="12" fill="#16161c" opacity="0.85"/>
<rect x="20" y="54" width="16" height="8" fill="#6a8aa0" opacity="0.6"/>
<rect x="70" y="54" width="18" height="8" fill="#7a8a98" opacity="0.5"/>
<rect x="86" y="62" width="14" height="13" fill="#2a3040" opacity="0.7"/>
</g>
<g fill="#d8e0e8" opacity="0.35" filter="url(#b05)">
<rect x="10" y="36" width="3" height="1"/><rect x="24" y="44" width="4" height="1"/><rect x="36" y="50" width="3" height="1"/><rect x="44" y="42" width="5" height="1"/>
<rect x="66" y="46" width="4" height="1"/><rect x="74" y="40" width="3" height="1"/><rect x="90" y="46" width="4" height="1"/><rect x="30" y="58" width="4" height="1"/>
<rect x="68" y="58" width="5" height="1"/><rect x="82" y="56" width="3" height="1"/><rect x="40" y="60" width="3" height="1"/><rect x="14" y="56" width="3" height="1"/>
</g><g filter="url(#b05)" opacity="0.55">
<rect x="45.2" y="56.8" width="5.7" height="3.3" fill="#28303c"/>
<rect x="85.5" y="45.7" width="5.2" height="3.1" fill="#28303c"/>
<rect x="79.3" y="42.8" width="3.2" height="1.4" fill="#9aa8b8"/>
<rect x="59.5" y="51.9" width="3.8" height="2.7" fill="#c8d4dc"/>
<rect x="62.3" y="65.0" width="2.3" height="0.9" fill="#c8d4dc"/>
<rect x="60.0" y="63.3" width="3.3" height="2.1" fill="#c8d4dc"/>
<rect x="51.9" y="59.2" width="4.0" height="2.7" fill="#5a6a80"/>
<rect x="65.5" y="52.2" width="4.2" height="3.2" fill="#9aa8b8"/>
<rect x="70.8" y="49.5" width="2.9" height="1.5" fill="#9aa8b8"/>
<rect x="56.3" y="43.2" width="2.4" height="1.3" fill="#9aa8b8"/>
<rect x="95.8" y="65.4" width="2.0" height="1.0" fill="#9aa8b8"/>
<rect x="47.0" y="69.4" width="3.6" height="1.5" fill="#c8d4dc"/>
<rect x="77.9" y="48.1" width="2.3" height="1.3" fill="#5a6a80"/>
<rect x="75.8" y="43.5" width="3.0" height="1.3" fill="#9aa8b8"/>
<rect x="46.5" y="54.6" width="4.7" height="2.2" fill="#28303c"/>
<rect x="19.1" y="62.0" width="2.5" height="1.7" fill="#9aa8b8"/>
<rect x="39.5" y="69.7" width="2.0" height="1.5" fill="#28303c"/>
<rect x="30.4" y="66.5" width="2.8" height="1.6" fill="#28303c"/>
<rect x="64.2" y="43.0" width="6.0" height="2.9" fill="#3a4658"/>
<rect x="1.0" y="58.3" width="5.3" height="3.0" fill="#9aa8b8"/>
<rect x="9.0" y="57.5" width="3.0" height="1.9" fill="#3a4658"/>
<rect x="62.2" y="43.8" width="4.3" height="3.2" fill="#c8d4dc"/>
<rect x="86.7" y="45.5" width="2.6" height="2.0" fill="#28303c"/>
<rect x="24.9" y="45.7" width="5.0" height="3.8" fill="#c8d4dc"/>
<rect x="68.7" y="51.6" width="3.9" height="1.7" fill="#9aa8b8"/>
<rect x="10.4" y="41.2" width="5.9" height="2.9" fill="#5a6a80"/>
<rect x="25.7" y="64.7" width="4.4" height="2.3" fill="#c8d4dc"/>
<rect x="92.9" y="69.3" width="2.5" height="1.5" fill="#28303c"/>
<rect x="61.4" y="48.4" width="5.7" height="2.7" fill="#9aa8b8"/>
<rect x="6.9" y="52.3" width="3.0" height="1.3" fill="#3a4658"/>
<rect x="36.9" y="57.2" width="2.5" height="1.4" fill="#5a6a80"/>
<rect x="98.0" y="59.7" width="4.8" height="3.0" fill="#c8d4dc"/>
<rect x="59.0" y="67.7" width="3.9" height="2.1" fill="#3a4658"/>
<rect x="96.3" y="40.6" width="4.5" height="2.7" fill="#3a4658"/>
<rect x="31.9" y="70.0" width="2.3" height="1.4" fill="#9aa8b8"/>
<rect x="90.0" y="62.1" width="4.8" height="3.5" fill="#3a4658"/>
<rect x="35.2" y="60.6" width="5.6" height="4.2" fill="#5a6a80"/>
<rect x="94.4" y="40.9" width="4.0" height="1.6" fill="#5a6a80"/>
<rect x="37.9" y="40.4" width="2.3" height="1.0" fill="#9aa8b8"/>
<rect x="99.3" y="66.4" width="4.9" height="2.7" fill="#28303c"/>
<rect x="45.8" y="53.9" width="4.2" height="2.5" fill="#28303c"/>
<rect x="3.0" y="58.0" width="3.9" height="1.9" fill="#9aa8b8"/>
<rect x="49.7" y="58.4" width="5.7" height="2.9" fill="#9aa8b8"/>
<rect x="36.8" y="44.3" width="4.4" height="2.7" fill="#3a4658"/>
<rect x="66.0" y="53.3" width="5.6" height="3.0" fill="#3a4658"/>
<rect x="19.9" y="52.9" width="5.2" height="4.0" fill="#c8d4dc"/>
<rect x="38.4" y="57.5" width="3.3" height="1.5" fill="#5a6a80"/>
<rect x="35.1" y="66.9" width="2.2" height="0.9" fill="#3a4658"/>
<rect x="82.2" y="43.4" width="3.9" height="3.0" fill="#5a6a80"/>
<rect x="38.3" y="55.6" width="4.7" height="3.2" fill="#28303c"/>
<rect x="45.2" y="42.2" width="2.1" height="1.6" fill="#9aa8b8"/>
<rect x="67.8" y="48.4" width="3.4" height="2.3" fill="#28303c"/>
<rect x="1.9" y="44.1" width="3.8" height="1.6" fill="#3a4658"/>
<rect x="23.7" y="44.2" width="2.2" height="1.4" fill="#5a6a80"/>
<rect x="10.9" y="56.1" width="4.6" height="2.5" fill="#9aa8b8"/>
<rect x="68.4" y="46.0" width="3.9" height="1.8" fill="#9aa8b8"/>
<rect x="75.5" y="56.0" width="2.1" height="1.1" fill="#3a4658"/>
<rect x="54.0" y="68.4" width="4.0" height="3.2" fill="#c8d4dc"/>
<rect x="39.4" y="63.8" width="5.6" height="2.4" fill="#5a6a80"/>
<rect x="13.0" y="53.6" width="4.5" height="3.4" fill="#5a6a80"/>
<rect x="55.0" y="59.6" width="4.0" height="2.9" fill="#3a4658"/>
<rect x="46.4" y="59.5" width="2.8" height="1.9" fill="#9aa8b8"/>
<rect x="21.3" y="67.0" width="5.9" height="4.7" fill="#28303c"/>
<rect x="97.7" y="68.0" width="3.0" height="2.1" fill="#9aa8b8"/>
<rect x="34.9" y="42.5" width="3.8" height="2.3" fill="#3a4658"/>
<rect x="48.7" y="40.9" width="5.2" height="2.2" fill="#9aa8b8"/>
<rect x="17.3" y="50.1" width="5.2" height="2.4" fill="#c8d4dc"/>
<rect x="100.0" y="67.0" width="4.1" height="2.7" fill="#5a6a80"/>
<rect x="94.6" y="54.8" width="5.8" height="2.5" fill="#c8d4dc"/>
<rect x="43.9" y="56.8" width="5.3" height="3.3" fill="#c8d4dc"/>
<rect x="52.3" y="65.3" width="4.2" height="2.2" fill="#5a6a80"/>
<rect x="95.5" y="66.1" width="4.4" height="2.3" fill="#c8d4dc"/>
<rect x="96.8" y="55.7" width="4.3" height="2.1" fill="#28303c"/>
<rect x="11.4" y="40.1" width="3.5" height="2.2" fill="#9aa8b8"/>
<rect x="51.6" y="52.0" width="5.2" height="3.3" fill="#5a6a80"/>
<rect x="9.3" y="45.0" width="5.7" height="3.3" fill="#5a6a80"/>
<rect x="26.9" y="54.2" width="2.5" height="1.4" fill="#5a6a80"/>
<rect x="52.5" y="43.3" width="3.7" height="1.5" fill="#3a4658"/>
<rect x="12.9" y="63.4" width="2.1" height="1.0" fill="#c8d4dc"/>
<rect x="1.2" y="48.5" width="4.9" height="2.4" fill="#5a6a80"/>
<rect x="10.5" y="61.9" width="2.5" height="1.5" fill="#3a4658"/>
<rect x="71.8" y="61.0" width="5.5" height="2.3" fill="#5a6a80"/>
<rect x="82.5" y="58.5" width="4.2" height="3.1" fill="#28303c"/>
<rect x="63.8" y="55.9" width="5.4" height="3.5" fill="#c8d4dc"/>
<rect x="23.3" y="62.2" width="5.2" height="4.0" fill="#3a4658"/>
<rect x="60.3" y="66.7" width="2.8" height="2.0" fill="#c8d4dc"/>
<rect x="88.8" y="44.0" width="3.0" height="2.0" fill="#3a4658"/>
<rect x="38.8" y="53.0" width="5.8" height="3.6" fill="#c8d4dc"/>
<rect x="20.1" y="58.8" width="5.2" height="2.3" fill="#28303c"/>
<rect x="68.2" y="67.3" width="5.9" height="2.6" fill="#28303c"/>
</g></svg></div>
<div class="a" style="left:824px;top:586.0px;width:28px;height:29px;border-radius:5px;background:#3a8ef2"></div>
<svg class="a" style="left:824px;top:586.0px" width="28" height="29" viewBox="0 0 28 29"><path d="M6.5 15.5 L11.5 21.5 L21.5 6.5" fill="none" stroke="#fff" stroke-width="2.6" stroke-linecap="round" stroke-linejoin="round"/></svg>
<div class="t" style="left:867.0px;top:589.7px;font-size:24px;color:#111111;-webkit-text-stroke:0.3px #111111;letter-spacing:-0.11px;font-weight:400;">F114B4AC-0FDF-4...</div>
<div class="a" style="left:1114px;top:279.5px;width:291px;height:288px;border:1.5px solid #d4d4d4;background:#fff"></div>
<div class="a" style="left:1115px;top:314.5px;width:289px;height:217px;overflow:hidden"><svg width="100%" height="100%" viewBox="0 0 100 75" preserveAspectRatio="none" style="display:block"><rect width="100" height="75" fill="url(#gCity)"/>
<g filter="url(#b1)">
<rect x="0" y="0" width="8" height="22" fill="#c8d4dc" opacity="0.6"/>
<rect x="90" y="8" width="10" height="12" fill="#b8c8d8" opacity="0.7"/>
<rect x="58" y="12" width="30" height="6" fill="#d8d8d8" opacity="0.8"/>
<rect x="0" y="20" width="30" height="10" fill="#a8c4c8" opacity="0.5"/>
<polygon points="0,40 17,39 18,50 0,52" fill="#8e8a88"/>
<rect x="5" y="42" width="4" height="5" fill="#2a2a30"/>
<rect x="14" y="48" width="14" height="8" fill="#3a3448" opacity="0.7"/>
<polygon points="52,56 56,45 64,52 60,61 53,62" fill="#c4c8a0"/>
<polygon points="56,45 50,50 52,56" fill="#222" opacity="0.6"/>
<polygon points="80,43 100,41 100,52 84,51" fill="#8aa0a8" opacity="0.7"/>
<rect x="0" y="60" width="18" height="15" fill="#0c0c10"/>
<rect x="18" y="68" width="20" height="7" fill="#101418"/>
<rect x="28" y="40" width="12" height="6" fill="#3e5068" opacity="0.5"/>
<rect x="58" y="38" width="20" height="6" fill="#2a3050" opacity="0.5"/>
<rect x="46" y="63" width="30" height="12" fill="#16161c" opacity="0.85"/>
<rect x="20" y="54" width="16" height="8" fill="#6a8aa0" opacity="0.6"/>
<rect x="70" y="54" width="18" height="8" fill="#7a8a98" opacity="0.5"/>
<rect x="86" y="62" width="14" height="13" fill="#2a3040" opacity="0.7"/>
</g>
<g fill="#d8e0e8" opacity="0.35" filter="url(#b05)">
<rect x="10" y="36" width="3" height="1"/><rect x="24" y="44" width="4" height="1"/><rect x="36" y="50" width="3" height="1"/><rect x="44" y="42" width="5" height="1"/>
<rect x="66" y="46" width="4" height="1"/><rect x="74" y="40" width="3" height="1"/><rect x="90" y="46" width="4" height="1"/><rect x="30" y="58" width="4" height="1"/>
<rect x="68" y="58" width="5" height="1"/><rect x="82" y="56" width="3" height="1"/><rect x="40" y="60" width="3" height="1"/><rect x="14" y="56" width="3" height="1"/>
</g><g filter="url(#b05)" opacity="0.55">
<rect x="45.2" y="56.8" width="5.7" height="3.3" fill="#28303c"/>
<rect x="85.5" y="45.7" width="5.2" height="3.1" fill="#28303c"/>
<rect x="79.3" y="42.8" width="3.2" height="1.4" fill="#9aa8b8"/>
<rect x="59.5" y="51.9" width="3.8" height="2.7" fill="#c8d4dc"/>
<rect x="62.3" y="65.0" width="2.3" height="0.9" fill="#c8d4dc"/>
<rect x="60.0" y="63.3" width="3.3" height="2.1" fill="#c8d4dc"/>
<rect x="51.9" y="59.2" width="4.0" height="2.7" fill="#5a6a80"/>
<rect x="65.5" y="52.2" width="4.2" height="3.2" fill="#9aa8b8"/>
<rect x="70.8" y="49.5" width="2.9" height="1.5" fill="#9aa8b8"/>
<rect x="56.3" y="43.2" width="2.4" height="1.3" fill="#9aa8b8"/>
<rect x="95.8" y="65.4" width="2.0" height="1.0" fill="#9aa8b8"/>
<rect x="47.0" y="69.4" width="3.6" height="1.5" fill="#c8d4dc"/>
<rect x="77.9" y="48.1" width="2.3" height="1.3" fill="#5a6a80"/>
<rect x="75.8" y="43.5" width="3.0" height="1.3" fill="#9aa8b8"/>
<rect x="46.5" y="54.6" width="4.7" height="2.2" fill="#28303c"/>
<rect x="19.1" y="62.0" width="2.5" height="1.7" fill="#9aa8b8"/>
<rect x="39.5" y="69.7" width="2.0" height="1.5" fill="#28303c"/>
<rect x="30.4" y="66.5" width="2.8" height="1.6" fill="#28303c"/>
<rect x="64.2" y="43.0" width="6.0" height="2.9" fill="#3a4658"/>
<rect x="1.0" y="58.3" width="5.3" height="3.0" fill="#9aa8b8"/>
<rect x="9.0" y="57.5" width="3.0" height="1.9" fill="#3a4658"/>
<rect x="62.2" y="43.8" width="4.3" height="3.2" fill="#c8d4dc"/>
<rect x="86.7" y="45.5" width="2.6" height="2.0" fill="#28303c"/>
<rect x="24.9" y="45.7" width="5.0" height="3.8" fill="#c8d4dc"/>
<rect x="68.7" y="51.6" width="3.9" height="1.7" fill="#9aa8b8"/>
<rect x="10.4" y="41.2" width="5.9" height="2.9" fill="#5a6a80"/>
<rect x="25.7" y="64.7" width="4.4" height="2.3" fill="#c8d4dc"/>
<rect x="92.9" y="69.3" width="2.5" height="1.5" fill="#28303c"/>
<rect x="61.4" y="48.4" width="5.7" height="2.7" fill="#9aa8b8"/>
<rect x="6.9" y="52.3" width="3.0" height="1.3" fill="#3a4658"/>
<rect x="36.9" y="57.2" width="2.5" height="1.4" fill="#5a6a80"/>
<rect x="98.0" y="59.7" width="4.8" height="3.0" fill="#c8d4dc"/>
<rect x="59.0" y="67.7" width="3.9" height="2.1" fill="#3a4658"/>
<rect x="96.3" y="40.6" width="4.5" height="2.7" fill="#3a4658"/>
<rect x="31.9" y="70.0" width="2.3" height="1.4" fill="#9aa8b8"/>
<rect x="90.0" y="62.1" width="4.8" height="3.5" fill="#3a4658"/>
<rect x="35.2" y="60.6" width="5.6" height="4.2" fill="#5a6a80"/>
<rect x="94.4" y="40.9" width="4.0" height="1.6" fill="#5a6a80"/>
<rect x="37.9" y="40.4" width="2.3" height="1.0" fill="#9aa8b8"/>
<rect x="99.3" y="66.4" width="4.9" height="2.7" fill="#28303c"/>
<rect x="45.8" y="53.9" width="4.2" height="2.5" fill="#28303c"/>
<rect x="3.0" y="58.0" width="3.9" height="1.9" fill="#9aa8b8"/>
<rect x="49.7" y="58.4" width="5.7" height="2.9" fill="#9aa8b8"/>
<rect x="36.8" y="44.3" width="4.4" height="2.7" fill="#3a4658"/>
<rect x="66.0" y="53.3" width="5.6" height="3.0" fill="#3a4658"/>
<rect x="19.9" y="52.9" width="5.2" height="4.0" fill="#c8d4dc"/>
<rect x="38.4" y="57.5" width="3.3" height="1.5" fill="#5a6a80"/>
<rect x="35.1" y="66.9" width="2.2" height="0.9" fill="#3a4658"/>
<rect x="82.2" y="43.4" width="3.9" height="3.0" fill="#5a6a80"/>
<rect x="38.3" y="55.6" width="4.7" height="3.2" fill="#28303c"/>
<rect x="45.2" y="42.2" width="2.1" height="1.6" fill="#9aa8b8"/>
<rect x="67.8" y="48.4" width="3.4" height="2.3" fill="#28303c"/>
<rect x="1.9" y="44.1" width="3.8" height="1.6" fill="#3a4658"/>
<rect x="23.7" y="44.2" width="2.2" height="1.4" fill="#5a6a80"/>
<rect x="10.9" y="56.1" width="4.6" height="2.5" fill="#9aa8b8"/>
<rect x="68.4" y="46.0" width="3.9" height="1.8" fill="#9aa8b8"/>
<rect x="75.5" y="56.0" width="2.1" height="1.1" fill="#3a4658"/>
<rect x="54.0" y="68.4" width="4.0" height="3.2" fill="#c8d4dc"/>
<rect x="39.4" y="63.8" width="5.6" height="2.4" fill="#5a6a80"/>
<rect x="13.0" y="53.6" width="4.5" height="3.4" fill="#5a6a80"/>
<rect x="55.0" y="59.6" width="4.0" height="2.9" fill="#3a4658"/>
<rect x="46.4" y="59.5" width="2.8" height="1.9" fill="#9aa8b8"/>
<rect x="21.3" y="67.0" width="5.9" height="4.7" fill="#28303c"/>
<rect x="97.7" y="68.0" width="3.0" height="2.1" fill="#9aa8b8"/>
<rect x="34.9" y="42.5" width="3.8" height="2.3" fill="#3a4658"/>
<rect x="48.7" y="40.9" width="5.2" height="2.2" fill="#9aa8b8"/>
<rect x="17.3" y="50.1" width="5.2" height="2.4" fill="#c8d4dc"/>
<rect x="100.0" y="67.0" width="4.1" height="2.7" fill="#5a6a80"/>
<rect x="94.6" y="54.8" width="5.8" height="2.5" fill="#c8d4dc"/>
<rect x="43.9" y="56.8" width="5.3" height="3.3" fill="#c8d4dc"/>
<rect x="52.3" y="65.3" width="4.2" height="2.2" fill="#5a6a80"/>
<rect x="95.5" y="66.1" width="4.4" height="2.3" fill="#c8d4dc"/>
<rect x="96.8" y="55.7" width="4.3" height="2.1" fill="#28303c"/>
<rect x="11.4" y="40.1" width="3.5" height="2.2" fill="#9aa8b8"/>
<rect x="51.6" y="52.0" width="5.2" height="3.3" fill="#5a6a80"/>
<rect x="9.3" y="45.0" width="5.7" height="3.3" fill="#5a6a80"/>
<rect x="26.9" y="54.2" width="2.5" height="1.4" fill="#5a6a80"/>
<rect x="52.5" y="43.3" width="3.7" height="1.5" fill="#3a4658"/>
<rect x="12.9" y="63.4" width="2.1" height="1.0" fill="#c8d4dc"/>
<rect x="1.2" y="48.5" width="4.9" height="2.4" fill="#5a6a80"/>
<rect x="10.5" y="61.9" width="2.5" height="1.5" fill="#3a4658"/>
<rect x="71.8" y="61.0" width="5.5" height="2.3" fill="#5a6a80"/>
<rect x="82.5" y="58.5" width="4.2" height="3.1" fill="#28303c"/>
<rect x="63.8" y="55.9" width="5.4" height="3.5" fill="#c8d4dc"/>
<rect x="23.3" y="62.2" width="5.2" height="4.0" fill="#3a4658"/>
<rect x="60.3" y="66.7" width="2.8" height="2.0" fill="#c8d4dc"/>
<rect x="88.8" y="44.0" width="3.0" height="2.0" fill="#3a4658"/>
<rect x="38.8" y="53.0" width="5.8" height="3.6" fill="#c8d4dc"/>
<rect x="20.1" y="58.8" width="5.2" height="2.3" fill="#28303c"/>
<rect x="68.2" y="67.3" width="5.9" height="2.6" fill="#28303c"/>
</g></svg></div>
<div class="a" style="left:1130px;top:586.0px;width:28px;height:29px;border-radius:5px;background:#fff;border:1.5px solid #c6c6c6"></div>
<div class="t" style="left:1173.0px;top:589.7px;font-size:24px;color:#111111;-webkit-text-stroke:0.3px #111111;letter-spacing:0.17px;font-weight:400;">7AFA4E2B-4297-4...</div>
<div class="a" style="left:1420px;top:279.5px;width:291px;height:288px;border:1.5px solid #d4d4d4;background:#fff"></div>
<div class="a" style="left:1421px;top:314.5px;width:289px;height:217px;overflow:hidden"><svg width="100%" height="100%" viewBox="0 0 100 75" preserveAspectRatio="none" style="display:block"><rect width="100" height="75" fill="url(#gCity)"/>
<g filter="url(#b1)">
<rect x="0" y="0" width="8" height="22" fill="#c8d4dc" opacity="0.6"/>
<rect x="90" y="8" width="10" height="12" fill="#b8c8d8" opacity="0.7"/>
<rect x="58" y="12" width="30" height="6" fill="#d8d8d8" opacity="0.8"/>
<rect x="0" y="20" width="30" height="10" fill="#a8c4c8" opacity="0.5"/>
<polygon points="0,40 17,39 18,50 0,52" fill="#8e8a88"/>
<rect x="5" y="42" width="4" height="5" fill="#2a2a30"/>
<rect x="14" y="48" width="14" height="8" fill="#3a3448" opacity="0.7"/>
<polygon points="52,56 56,45 64,52 60,61 53,62" fill="#c4c8a0"/>
<polygon points="56,45 50,50 52,56" fill="#222" opacity="0.6"/>
<polygon points="80,43 100,41 100,52 84,51" fill="#8aa0a8" opacity="0.7"/>
<rect x="0" y="60" width="18" height="15" fill="#0c0c10"/>
<rect x="18" y="68" width="20" height="7" fill="#101418"/>
<rect x="28" y="40" width="12" height="6" fill="#3e5068" opacity="0.5"/>
<rect x="58" y="38" width="20" height="6" fill="#2a3050" opacity="0.5"/>
<rect x="46" y="63" width="30" height="12" fill="#16161c" opacity="0.85"/>
<rect x="20" y="54" width="16" height="8" fill="#6a8aa0" opacity="0.6"/>
<rect x="70" y="54" width="18" height="8" fill="#7a8a98" opacity="0.5"/>
<rect x="86" y="62" width="14" height="13" fill="#2a3040" opacity="0.7"/>
</g>
<g fill="#d8e0e8" opacity="0.35" filter="url(#b05)">
<rect x="10" y="36" width="3" height="1"/><rect x="24" y="44" width="4" height="1"/><rect x="36" y="50" width="3" height="1"/><rect x="44" y="42" width="5" height="1"/>
<rect x="66" y="46" width="4" height="1"/><rect x="74" y="40" width="3" height="1"/><rect x="90" y="46" width="4" height="1"/><rect x="30" y="58" width="4" height="1"/>
<rect x="68" y="58" width="5" height="1"/><rect x="82" y="56" width="3" height="1"/><rect x="40" y="60" width="3" height="1"/><rect x="14" y="56" width="3" height="1"/>
</g><g filter="url(#b05)" opacity="0.55">
<rect x="45.2" y="56.8" width="5.7" height="3.3" fill="#28303c"/>
<rect x="85.5" y="45.7" width="5.2" height="3.1" fill="#28303c"/>
<rect x="79.3" y="42.8" width="3.2" height="1.4" fill="#9aa8b8"/>
<rect x="59.5" y="51.9" width="3.8" height="2.7" fill="#c8d4dc"/>
<rect x="62.3" y="65.0" width="2.3" height="0.9" fill="#c8d4dc"/>
<rect x="60.0" y="63.3" width="3.3" height="2.1" fill="#c8d4dc"/>
<rect x="51.9" y="59.2" width="4.0" height="2.7" fill="#5a6a80"/>
<rect x="65.5" y="52.2" width="4.2" height="3.2" fill="#9aa8b8"/>
<rect x="70.8" y="49.5" width="2.9" height="1.5" fill="#9aa8b8"/>
<rect x="56.3" y="43.2" width="2.4" height="1.3" fill="#9aa8b8"/>
<rect x="95.8" y="65.4" width="2.0" height="1.0" fill="#9aa8b8"/>
<rect x="47.0" y="69.4" width="3.6" height="1.5" fill="#c8d4dc"/>
<rect x="77.9" y="48.1" width="2.3" height="1.3" fill="#5a6a80"/>
<rect x="75.8" y="43.5" width="3.0" height="1.3" fill="#9aa8b8"/>
<rect x="46.5" y="54.6" width="4.7" height="2.2" fill="#28303c"/>
<rect x="19.1" y="62.0" width="2.5" height="1.7" fill="#9aa8b8"/>
<rect x="39.5" y="69.7" width="2.0" height="1.5" fill="#28303c"/>
<rect x="30.4" y="66.5" width="2.8" height="1.6" fill="#28303c"/>
<rect x="64.2" y="43.0" width="6.0" height="2.9" fill="#3a4658"/>
<rect x="1.0" y="58.3" width="5.3" height="3.0" fill="#9aa8b8"/>
<rect x="9.0" y="57.5" width="3.0" height="1.9" fill="#3a4658"/>
<rect x="62.2" y="43.8" width="4.3" height="3.2" fill="#c8d4dc"/>
<rect x="86.7" y="45.5" width="2.6" height="2.0" fill="#28303c"/>
<rect x="24.9" y="45.7" width="5.0" height="3.8" fill="#c8d4dc"/>
<rect x="68.7" y="51.6" width="3.9" height="1.7" fill="#9aa8b8"/>
<rect x="10.4" y="41.2" width="5.9" height="2.9" fill="#5a6a80"/>
<rect x="25.7" y="64.7" width="4.4" height="2.3" fill="#c8d4dc"/>
<rect x="92.9" y="69.3" width="2.5" height="1.5" fill="#28303c"/>
<rect x="61.4" y="48.4" width="5.7" height="2.7" fill="#9aa8b8"/>
<rect x="6.9" y="52.3" width="3.0" height="1.3" fill="#3a4658"/>
<rect x="36.9" y="57.2" width="2.5" height="1.4" fill="#5a6a80"/>
<rect x="98.0" y="59.7" width="4.8" height="3.0" fill="#c8d4dc"/>
<rect x="59.0" y="67.7" width="3.9" height="2.1" fill="#3a4658"/>
<rect x="96.3" y="40.6" width="4.5" height="2.7" fill="#3a4658"/>
<rect x="31.9" y="70.0" width="2.3" height="1.4" fill="#9aa8b8"/>
<rect x="90.0" y="62.1" width="4.8" height="3.5" fill="#3a4658"/>
<rect x="35.2" y="60.6" width="5.6" height="4.2" fill="#5a6a80"/>
<rect x="94.4" y="40.9" width="4.0" height="1.6" fill="#5a6a80"/>
<rect x="37.9" y="40.4" width="2.3" height="1.0" fill="#9aa8b8"/>
<rect x="99.3" y="66.4" width="4.9" height="2.7" fill="#28303c"/>
<rect x="45.8" y="53.9" width="4.2" height="2.5" fill="#28303c"/>
<rect x="3.0" y="58.0" width="3.9" height="1.9" fill="#9aa8b8"/>
<rect x="49.7" y="58.4" width="5.7" height="2.9" fill="#9aa8b8"/>
<rect x="36.8" y="44.3" width="4.4" height="2.7" fill="#3a4658"/>
<rect x="66.0" y="53.3" width="5.6" height="3.0" fill="#3a4658"/>
<rect x="19.9" y="52.9" width="5.2" height="4.0" fill="#c8d4dc"/>
<rect x="38.4" y="57.5" width="3.3" height="1.5" fill="#5a6a80"/>
<rect x="35.1" y="66.9" width="2.2" height="0.9" fill="#3a4658"/>
<rect x="82.2" y="43.4" width="3.9" height="3.0" fill="#5a6a80"/>
<rect x="38.3" y="55.6" width="4.7" height="3.2" fill="#28303c"/>
<rect x="45.2" y="42.2" width="2.1" height="1.6" fill="#9aa8b8"/>
<rect x="67.8" y="48.4" width="3.4" height="2.3" fill="#28303c"/>
<rect x="1.9" y="44.1" width="3.8" height="1.6" fill="#3a4658"/>
<rect x="23.7" y="44.2" width="2.2" height="1.4" fill="#5a6a80"/>
<rect x="10.9" y="56.1" width="4.6" height="2.5" fill="#9aa8b8"/>
<rect x="68.4" y="46.0" width="3.9" height="1.8" fill="#9aa8b8"/>
<rect x="75.5" y="56.0" width="2.1" height="1.1" fill="#3a4658"/>
<rect x="54.0" y="68.4" width="4.0" height="3.2" fill="#c8d4dc"/>
<rect x="39.4" y="63.8" width="5.6" height="2.4" fill="#5a6a80"/>
<rect x="13.0" y="53.6" width="4.5" height="3.4" fill="#5a6a80"/>
<rect x="55.0" y="59.6" width="4.0" height="2.9" fill="#3a4658"/>
<rect x="46.4" y="59.5" width="2.8" height="1.9" fill="#9aa8b8"/>
<rect x="21.3" y="67.0" width="5.9" height="4.7" fill="#28303c"/>
<rect x="97.7" y="68.0" width="3.0" height="2.1" fill="#9aa8b8"/>
<rect x="34.9" y="42.5" width="3.8" height="2.3" fill="#3a4658"/>
<rect x="48.7" y="40.9" width="5.2" height="2.2" fill="#9aa8b8"/>
<rect x="17.3" y="50.1" width="5.2" height="2.4" fill="#c8d4dc"/>
<rect x="100.0" y="67.0" width="4.1" height="2.7" fill="#5a6a80"/>
<rect x="94.6" y="54.8" width="5.8" height="2.5" fill="#c8d4dc"/>
<rect x="43.9" y="56.8" width="5.3" height="3.3" fill="#c8d4dc"/>
<rect x="52.3" y="65.3" width="4.2" height="2.2" fill="#5a6a80"/>
<rect x="95.5" y="66.1" width="4.4" height="2.3" fill="#c8d4dc"/>
<rect x="96.8" y="55.7" width="4.3" height="2.1" fill="#28303c"/>
<rect x="11.4" y="40.1" width="3.5" height="2.2" fill="#9aa8b8"/>
<rect x="51.6" y="52.0" width="5.2" height="3.3" fill="#5a6a80"/>
<rect x="9.3" y="45.0" width="5.7" height="3.3" fill="#5a6a80"/>
<rect x="26.9" y="54.2" width="2.5" height="1.4" fill="#5a6a80"/>
<rect x="52.5" y="43.3" width="3.7" height="1.5" fill="#3a4658"/>
<rect x="12.9" y="63.4" width="2.1" height="1.0" fill="#c8d4dc"/>
<rect x="1.2" y="48.5" width="4.9" height="2.4" fill="#5a6a80"/>
<rect x="10.5" y="61.9" width="2.5" height="1.5" fill="#3a4658"/>
<rect x="71.8" y="61.0" width="5.5" height="2.3" fill="#5a6a80"/>
<rect x="82.5" y="58.5" width="4.2" height="3.1" fill="#28303c"/>
<rect x="63.8" y="55.9" width="5.4" height="3.5" fill="#c8d4dc"/>
<rect x="23.3" y="62.2" width="5.2" height="4.0" fill="#3a4658"/>
<rect x="60.3" y="66.7" width="2.8" height="2.0" fill="#c8d4dc"/>
<rect x="88.8" y="44.0" width="3.0" height="2.0" fill="#3a4658"/>
<rect x="38.8" y="53.0" width="5.8" height="3.6" fill="#c8d4dc"/>
<rect x="20.1" y="58.8" width="5.2" height="2.3" fill="#28303c"/>
<rect x="68.2" y="67.3" width="5.9" height="2.6" fill="#28303c"/>
</g></svg></div>
<div class="a" style="left:1436px;top:586.0px;width:28px;height:29px;border-radius:5px;background:#3a8ef2"></div>
<svg class="a" style="left:1436px;top:586.0px" width="28" height="29" viewBox="0 0 28 29"><path d="M6.5 15.5 L11.5 21.5 L21.5 6.5" fill="none" stroke="#fff" stroke-width="2.6" stroke-linecap="round" stroke-linejoin="round"/></svg>
<div class="t" style="left:1479.0px;top:589.7px;font-size:24px;color:#111111;-webkit-text-stroke:0.3px #111111;letter-spacing:0.17px;font-weight:400;">CB093378-61FE-4...</div>
<div class="a" style="left:1726px;top:279.5px;width:291px;height:288px;border:1.5px solid #d4d4d4;background:#fff"></div>
<div class="a" style="left:1727px;top:314.5px;width:289px;height:217px;overflow:hidden"><svg width="100%" height="100%" viewBox="0 0 100 75" preserveAspectRatio="none" style="display:block"><rect width="100" height="75" fill="#d8d6e2"/>
<g filter="url(#b05)">
<rect x="0" y="0" width="20" height="15" fill="#dcdcdc"/>
<rect x="70" y="0" width="30" height="8" fill="#c8d2de"/>
<rect x="0" y="14.5" width="100" height="2.5" fill="#b4b2b4"/>
<rect x="0" y="17" width="100" height="8" fill="#a89282"/>
<rect x="26" y="18" width="24" height="2" fill="#a8b0d0"/>
<rect x="50" y="18" width="30" height="6" fill="#9a8a88"/>
<rect x="14" y="24" width="72" height="12" fill="#7a6c58"/>
<rect x="36" y="28" width="26" height="8" fill="#5c6a4c"/>
<polygon points="0,19 46,36 46,40 0,27" fill="#6e6a66"/>
<polygon points="0,27 46,40 46,75 0,75" fill="#3c3a38"/>
<polygon points="0,36 8,38 8,75 0,75" fill="#4a4e3a"/>
<polygon points="0,52 44,39 45,42 0,56" fill="#8a8682"/>
<polygon points="0,56 45,42 38,75 0,75" fill="#4c4a3c"/>
<polygon points="4,62 20,56 24,66 10,72" fill="#7a6a50" opacity="0.8"/>
<polygon points="54,36 100,18 100,26 55,39" fill="#a29c9e"/>
<polygon points="55,39 100,26 100,75 62,75" fill="#4a4640"/>
<polygon points="72,32 100,26 100,48 80,46" fill="#b08a58"/>
<polygon points="58,36 64,35 64,46 58,44" fill="#3a3a36"/>
<polygon points="78,30 84,28 84,56 78,52" fill="#2e2e2c"/>
<polygon points="55,40 100,54 100,60 57,43" fill="#a8a2a4"/>
<polygon points="84,58 100,62 100,75 88,75" fill="#2a2826"/>
<polygon points="46.5,36 53.5,36 80,75 20,75" fill="#b29c94"/>
<polygon points="48,44 54,44 66,75 32,75" fill="#bca69e" opacity="0.6"/>
</g>
<g opacity="0.25" stroke="#5a4a40" stroke-width="0.5">
<line x1="20" y1="73" x2="80" y2="73"/><line x1="24" y1="69" x2="76" y2="69"/><line x1="27" y1="65" x2="73" y2="65"/><line x1="30" y1="61" x2="70" y2="61"/><line x1="33" y1="57" x2="67" y2="57"/><line x1="36" y1="53" x2="64" y2="53"/><line x1="39" y1="49" x2="61" y2="49"/><line x1="42" y1="45" x2="58" y2="45"/>
</g></svg></div>
<div class="a" style="left:1742px;top:586.0px;width:28px;height:29px;border-radius:5px;background:#fff;border:1.5px solid #c6c6c6"></div>
<div class="t" style="left:1785.0px;top:589.7px;font-size:24px;color:#111111;-webkit-text-stroke:0.3px #111111;letter-spacing:0.27px;font-weight:400;">AD58EEFC-4F8D-...</div>
<div class="a" style="left:808px;top:643px;width:291px;height:288px;border:1.5px solid #d4d4d4;background:#fff"></div>
<div class="a" style="left:809px;top:678px;width:289px;height:217px;overflow:hidden"><svg width="100%" height="100%" viewBox="0 0 100 75" preserveAspectRatio="none" style="display:block"><rect width="100" height="75" fill="#d8d6e2"/>
<g filter="url(#b05)">
<rect x="0" y="0" width="20" height="15" fill="#dcdcdc"/>
<rect x="70" y="0" width="30" height="8" fill="#c8d2de"/>
<rect x="0" y="14.5" width="100" height="2.5" fill="#b4b2b4"/>
<rect x="0" y="17" width="100" height="8" fill="#a89282"/>
<rect x="26" y="18" width="24" height="2" fill="#a8b0d0"/>
<rect x="50" y="18" width="30" height="6" fill="#9a8a88"/>
<rect x="14" y="24" width="72" height="12" fill="#7a6c58"/>
<rect x="36" y="28" width="26" height="8" fill="#5c6a4c"/>
<polygon points="0,19 46,36 46,40 0,27" fill="#6e6a66"/>
<polygon points="0,27 46,40 46,75 0,75" fill="#3c3a38"/>
<polygon points="0,36 8,38 8,75 0,75" fill="#4a4e3a"/>
<polygon points="0,52 44,39 45,42 0,56" fill="#8a8682"/>
<polygon points="0,56 45,42 38,75 0,75" fill="#4c4a3c"/>
<polygon points="4,62 20,56 24,66 10,72" fill="#7a6a50" opacity="0.8"/>
<polygon points="54,36 100,18 100,26 55,39" fill="#a29c9e"/>
<polygon points="55,39 100,26 100,75 62,75" fill="#4a4640"/>
<polygon points="72,32 100,26 100,48 80,46" fill="#b08a58"/>
<polygon points="58,36 64,35 64,46 58,44" fill="#3a3a36"/>
<polygon points="78,30 84,28 84,56 78,52" fill="#2e2e2c"/>
<polygon points="55,40 100,54 100,60 57,43" fill="#a8a2a4"/>
<polygon points="84,58 100,62 100,75 88,75" fill="#2a2826"/>
<polygon points="46.5,36 53.5,36 80,75 20,75" fill="#b29c94"/>
<polygon points="48,44 54,44 66,75 32,75" fill="#bca69e" opacity="0.6"/>
</g>
<g opacity="0.25" stroke="#5a4a40" stroke-width="0.5">
<line x1="20" y1="73" x2="80" y2="73"/><line x1="24" y1="69" x2="76" y2="69"/><line x1="27" y1="65" x2="73" y2="65"/><line x1="30" y1="61" x2="70" y2="61"/><line x1="33" y1="57" x2="67" y2="57"/><line x1="36" y1="53" x2="64" y2="53"/><line x1="39" y1="49" x2="61" y2="49"/><line x1="42" y1="45" x2="58" y2="45"/>
</g></svg></div>
<div class="a" style="left:824px;top:949.5px;width:28px;height:29px;border-radius:5px;background:#3a8ef2"></div>
<svg class="a" style="left:824px;top:949.5px" width="28" height="29" viewBox="0 0 28 29"><path d="M6.5 15.5 L11.5 21.5 L21.5 6.5" fill="none" stroke="#fff" stroke-width="2.6" stroke-linecap="round" stroke-linejoin="round"/></svg>
<div class="t" style="left:867.0px;top:953.2px;font-size:24px;color:#111111;-webkit-text-stroke:0.3px #111111;letter-spacing:0.35px;font-weight:400;">FEA4D989-FBCA-...</div>
<div class="a" style="left:1114px;top:643px;width:291px;height:288px;border:1.5px solid #d4d4d4;background:#fff"></div>
<div class="a" style="left:1115px;top:678px;width:289px;height:217px;overflow:hidden"><svg width="100%" height="100%" viewBox="0 0 100 75" preserveAspectRatio="none" style="display:block"><rect width="100" height="75" fill="#2f4b41"/>
<g filter="url(#b05)">
<ellipse cx="32.4" cy="6.3" rx="2.8" ry="2.5" fill="#3a5a4e" opacity="0.8"/>
<ellipse cx="9.4" cy="24.5" rx="3.3" ry="3.0" fill="#243e36" opacity="0.8"/>
<ellipse cx="3.7" cy="18.2" rx="1.6" ry="1.5" fill="#3a5a4e" opacity="0.8"/>
<ellipse cx="55.1" cy="2.5" rx="2.6" ry="2.4" fill="#243e36" opacity="0.8"/>
<ellipse cx="58.3" cy="2.6" rx="2.7" ry="2.4" fill="#3a5a4e" opacity="0.8"/>
<ellipse cx="4.7" cy="36.1" rx="2.1" ry="1.9" fill="#243e36" opacity="0.8"/>
<ellipse cx="54.1" cy="24.0" rx="2.6" ry="2.4" fill="#1e382e" opacity="0.8"/>
<ellipse cx="18.1" cy="24.4" rx="2.8" ry="2.5" fill="#4a6258" opacity="0.8"/>
<ellipse cx="9.7" cy="29.9" rx="2.6" ry="2.4" fill="#38524a" opacity="0.8"/>
<ellipse cx="20.6" cy="28.6" rx="2.4" ry="2.1" fill="#4a6258" opacity="0.8"/>
<ellipse cx="46.6" cy="38.8" rx="2.2" ry="2.0" fill="#243e36" opacity="0.8"/>
<ellipse cx="79.4" cy="29.4" rx="2.0" ry="1.8" fill="#38524a" opacity="0.8"/>
<ellipse cx="30.0" cy="20.8" rx="2.2" ry="2.0" fill="#2a463c" opacity="0.8"/>
<ellipse cx="28.8" cy="41.2" rx="1.7" ry="1.6" fill="#2a463c" opacity="0.8"/>
<ellipse cx="16.5" cy="14.4" rx="3.4" ry="3.0" fill="#2a463c" opacity="0.8"/>
<ellipse cx="3.9" cy="28.1" rx="3.0" ry="2.7" fill="#38524a" opacity="0.8"/>
<ellipse cx="78.9" cy="34.4" rx="2.2" ry="2.0" fill="#4a6258" opacity="0.8"/>
<ellipse cx="59.4" cy="24.4" rx="2.4" ry="2.2" fill="#3a5a4e" opacity="0.8"/>
<ellipse cx="94.5" cy="19.9" rx="2.8" ry="2.5" fill="#3a5a4e" opacity="0.8"/>
<ellipse cx="73.1" cy="13.0" rx="2.7" ry="2.4" fill="#1e382e" opacity="0.8"/>
<ellipse cx="82.2" cy="12.0" rx="2.3" ry="2.0" fill="#1e382e" opacity="0.8"/>
<ellipse cx="34.7" cy="39.5" rx="2.2" ry="2.0" fill="#38524a" opacity="0.8"/>
<ellipse cx="11.7" cy="2.5" rx="3.0" ry="2.7" fill="#243e36" opacity="0.8"/>
<ellipse cx="39.8" cy="38.5" rx="2.5" ry="2.2" fill="#243e36" opacity="0.8"/>
<ellipse cx="44.9" cy="23.1" rx="3.3" ry="2.9" fill="#2a463c" opacity="0.8"/>
<ellipse cx="86.4" cy="11.7" rx="2.3" ry="2.1" fill="#4a6258" opacity="0.8"/>
<ellipse cx="68.3" cy="16.0" rx="2.0" ry="1.8" fill="#3a5a4e" opacity="0.8"/>
<ellipse cx="17.6" cy="9.7" rx="2.0" ry="1.8" fill="#2a463c" opacity="0.8"/>
<ellipse cx="18.2" cy="11.8" rx="1.8" ry="1.6" fill="#5c6458" opacity="0.8"/>
<ellipse cx="95.3" cy="29.0" rx="2.5" ry="2.3" fill="#38524a" opacity="0.8"/>
<ellipse cx="65.5" cy="31.1" rx="2.4" ry="2.2" fill="#1e382e" opacity="0.8"/>
<ellipse cx="79.8" cy="16.5" rx="2.3" ry="2.1" fill="#3a5a4e" opacity="0.8"/>
<ellipse cx="48.2" cy="16.8" rx="1.9" ry="1.7" fill="#243e36" opacity="0.8"/>
<ellipse cx="44.1" cy="4.6" rx="2.7" ry="2.4" fill="#707258" opacity="0.8"/>
<ellipse cx="53.7" cy="39.9" rx="2.7" ry="2.5" fill="#3a5a4e" opacity="0.8"/>
<ellipse cx="87.4" cy="25.8" rx="1.8" ry="1.6" fill="#4a6258" opacity="0.8"/>
<ellipse cx="95.5" cy="25.3" rx="2.4" ry="2.2" fill="#3a5a4e" opacity="0.8"/>
<ellipse cx="84.9" cy="41.7" rx="2.4" ry="2.2" fill="#2a463c" opacity="0.8"/>
<ellipse cx="31.2" cy="6.1" rx="3.0" ry="2.7" fill="#707258" opacity="0.8"/>
<ellipse cx="51.6" cy="8.6" rx="3.4" ry="3.1" fill="#6a6c60" opacity="0.8"/>
<ellipse cx="75.8" cy="12.5" rx="2.8" ry="2.5" fill="#3a5a4e" opacity="0.8"/>
<ellipse cx="69.6" cy="11.0" rx="2.2" ry="2.0" fill="#707258" opacity="0.8"/>
<ellipse cx="53.3" cy="32.7" rx="2.2" ry="1.9" fill="#243e36" opacity="0.8"/>
<ellipse cx="61.3" cy="33.1" rx="3.0" ry="2.7" fill="#243e36" opacity="0.8"/>
<ellipse cx="80.6" cy="34.4" rx="3.0" ry="2.7" fill="#243e36" opacity="0.8"/>
<ellipse cx="20.0" cy="20.7" rx="3.0" ry="2.7" fill="#3a5a4e" opacity="0.8"/>
<ellipse cx="79.0" cy="19.8" rx="1.9" ry="1.7" fill="#38524a" opacity="0.8"/>
<ellipse cx="95.7" cy="18.8" rx="3.4" ry="3.0" fill="#4a6258" opacity="0.8"/>
<ellipse cx="95.5" cy="15.3" rx="1.9" ry="1.7" fill="#243e36" opacity="0.8"/>
<ellipse cx="47.0" cy="14.2" rx="2.5" ry="2.2" fill="#38524a" opacity="0.8"/>
<ellipse cx="84.0" cy="20.1" rx="2.8" ry="2.5" fill="#1e382e" opacity="0.8"/>
<ellipse cx="8.5" cy="27.7" rx="3.3" ry="3.0" fill="#1e382e" opacity="0.8"/>
<ellipse cx="75.0" cy="20.1" rx="1.9" ry="1.7" fill="#1e382e" opacity="0.8"/>
<ellipse cx="33.3" cy="33.6" rx="3.4" ry="3.1" fill="#2a463c" opacity="0.8"/>
<ellipse cx="46.3" cy="31.2" rx="1.7" ry="1.5" fill="#243e36" opacity="0.8"/>
<ellipse cx="17.0" cy="5.3" rx="1.8" ry="1.6" fill="#2a463c" opacity="0.8"/>
<ellipse cx="14.6" cy="34.7" rx="3.5" ry="3.1" fill="#1e382e" opacity="0.8"/>
<ellipse cx="93.7" cy="6.5" rx="2.6" ry="2.3" fill="#3a5a4e" opacity="0.8"/>
<ellipse cx="1.4" cy="40.8" rx="2.8" ry="2.5" fill="#38524a" opacity="0.8"/>
<ellipse cx="74.9" cy="5.8" rx="3.5" ry="3.1" fill="#243e36" opacity="0.8"/>
<ellipse cx="21.1" cy="10.6" rx="2.1" ry="1.9" fill="#243e36" opacity="0.8"/>
<ellipse cx="32.6" cy="22.9" rx="3.2" ry="2.9" fill="#3a5a4e" opacity="0.8"/>
<ellipse cx="91.0" cy="14.9" rx="2.4" ry="2.2" fill="#38524a" opacity="0.8"/>
<ellipse cx="81.5" cy="21.7" rx="3.2" ry="2.8" fill="#38524a" opacity="0.8"/>
<ellipse cx="13.1" cy="6.4" rx="2.5" ry="2.3" fill="#2a463c" opacity="0.8"/>
<ellipse cx="60.9" cy="32.6" rx="1.8" ry="1.6" fill="#243e36" opacity="0.8"/>
<ellipse cx="47.3" cy="30.5" rx="2.6" ry="2.4" fill="#4a6258" opacity="0.8"/>
<ellipse cx="68.2" cy="22.3" rx="2.5" ry="2.2" fill="#3a5a4e" opacity="0.8"/>
<ellipse cx="88.3" cy="2.4" rx="1.9" ry="1.7" fill="#3a5a4e" opacity="0.8"/>
<ellipse cx="77.2" cy="21.3" rx="2.6" ry="2.4" fill="#3a5a4e" opacity="0.8"/>
<ellipse cx="44.3" cy="25.7" rx="2.5" ry="2.3" fill="#38524a" opacity="0.8"/>
<ellipse cx="19.9" cy="11.6" rx="2.5" ry="2.3" fill="#2a463c" opacity="0.8"/>
<ellipse cx="24.8" cy="22.0" rx="3.3" ry="2.9" fill="#4a6258" opacity="0.8"/>
<ellipse cx="92.3" cy="37.5" rx="1.9" ry="1.7" fill="#2a463c" opacity="0.8"/>
<ellipse cx="13.7" cy="5.1" rx="2.4" ry="2.1" fill="#3a5a4e" opacity="0.8"/>
<ellipse cx="42.8" cy="8.9" rx="2.1" ry="1.9" fill="#3a5a4e" opacity="0.8"/>
<ellipse cx="15.4" cy="30.1" rx="2.8" ry="2.5" fill="#243e36" opacity="0.8"/>
<ellipse cx="25.3" cy="5.8" rx="2.4" ry="2.2" fill="#1e382e" opacity="0.8"/>
<ellipse cx="39.8" cy="20.5" rx="3.5" ry="3.1" fill="#243e36" opacity="0.8"/>
<ellipse cx="16.1" cy="18.1" rx="2.5" ry="2.3" fill="#4a6258" opacity="0.8"/>
<ellipse cx="42.1" cy="15.0" rx="1.7" ry="1.5" fill="#4a6258" opacity="0.8"/>
<ellipse cx="1.9" cy="23.3" rx="2.4" ry="2.1" fill="#3a5a4e" opacity="0.8"/>
<ellipse cx="38.4" cy="21.7" rx="2.1" ry="1.9" fill="#3a5a4e" opacity="0.8"/>
<ellipse cx="11.3" cy="38.6" rx="2.0" ry="1.8" fill="#3a5a4e" opacity="0.8"/>
<ellipse cx="8.4" cy="11.4" rx="3.3" ry="3.0" fill="#707258" opacity="0.8"/>
<ellipse cx="82.0" cy="35.7" rx="2.9" ry="2.6" fill="#4a6258" opacity="0.8"/>
<ellipse cx="40.6" cy="22.5" rx="2.5" ry="2.3" fill="#2a463c" opacity="0.8"/>
<ellipse cx="70.0" cy="3.8" rx="1.6" ry="1.5" fill="#6a6c60" opacity="0.8"/>
<ellipse cx="26.9" cy="0.7" rx="1.7" ry="1.5" fill="#707258" opacity="0.8"/>
<ellipse cx="6.7" cy="36.2" rx="2.4" ry="2.2" fill="#4a6258" opacity="0.8"/>
<ellipse cx="99.4" cy="17.5" rx="3.3" ry="3.0" fill="#38524a" opacity="0.8"/>
<ellipse cx="12.9" cy="22.1" rx="2.0" ry="1.8" fill="#3a5a4e" opacity="0.8"/>
<ellipse cx="96.9" cy="11.0" rx="1.9" ry="1.7" fill="#4a6258" opacity="0.8"/>
<ellipse cx="62.9" cy="22.3" rx="1.9" ry="1.7" fill="#2a463c" opacity="0.8"/>
<ellipse cx="50.0" cy="7.5" rx="2.2" ry="2.0" fill="#3a5a4e" opacity="0.8"/>
<ellipse cx="3.7" cy="0.8" rx="2.5" ry="2.3" fill="#243e36" opacity="0.8"/>
<ellipse cx="24.6" cy="18.8" rx="2.8" ry="2.5" fill="#1e382e" opacity="0.8"/>
<ellipse cx="43.2" cy="20.8" rx="3.2" ry="2.9" fill="#2a463c" opacity="0.8"/>
<ellipse cx="97.0" cy="12.9" rx="1.9" ry="1.7" fill="#243e36" opacity="0.8"/>
<ellipse cx="34.3" cy="35.0" rx="2.9" ry="2.6" fill="#1e382e" opacity="0.8"/>
<ellipse cx="14.0" cy="41.6" rx="3.5" ry="3.1" fill="#243e36" opacity="0.8"/>
<ellipse cx="1.4" cy="26.3" rx="3.3" ry="2.9" fill="#2a463c" opacity="0.8"/>
<ellipse cx="16.3" cy="3.5" rx="3.2" ry="2.9" fill="#38524a" opacity="0.8"/>
<ellipse cx="28.2" cy="10.2" rx="2.1" ry="1.9" fill="#5c6458" opacity="0.8"/>
<ellipse cx="44.6" cy="11.1" rx="3.4" ry="3.1" fill="#6a6c60" opacity="0.8"/>
<ellipse cx="96.6" cy="13.0" rx="2.2" ry="2.0" fill="#3a5a4e" opacity="0.8"/>
<ellipse cx="33.5" cy="3.5" rx="2.1" ry="1.9" fill="#6a6c60" opacity="0.8"/>
<ellipse cx="9.1" cy="34.3" rx="1.8" ry="1.6" fill="#38524a" opacity="0.8"/>
<ellipse cx="4.2" cy="0.9" rx="2.1" ry="1.9" fill="#707258" opacity="0.8"/>
<ellipse cx="65.8" cy="30.1" rx="3.3" ry="2.9" fill="#2a463c" opacity="0.8"/>
<ellipse cx="76.4" cy="30.3" rx="2.5" ry="2.2" fill="#4a6258" opacity="0.8"/>
<ellipse cx="72.4" cy="27.0" rx="1.6" ry="1.4" fill="#1e382e" opacity="0.8"/>
<ellipse cx="89.2" cy="26.3" rx="3.0" ry="2.7" fill="#38524a" opacity="0.8"/>
<ellipse cx="13.9" cy="22.0" rx="2.5" ry="2.3" fill="#3a5a4e" opacity="0.8"/>
<ellipse cx="82.6" cy="24.5" rx="3.3" ry="3.0" fill="#1e382e" opacity="0.8"/>
<ellipse cx="95.6" cy="27.0" rx="1.7" ry="1.5" fill="#3a5a4e" opacity="0.8"/>
<ellipse cx="13.3" cy="15.1" rx="1.7" ry="1.5" fill="#2a463c" opacity="0.8"/>
<ellipse cx="55.9" cy="26.4" rx="2.8" ry="2.5" fill="#1e382e" opacity="0.8"/>
<ellipse cx="24.5" cy="11.1" rx="2.4" ry="2.2" fill="#3a5a4e" opacity="0.8"/>
<ellipse cx="50.3" cy="22.5" rx="2.8" ry="2.5" fill="#3a5a4e" opacity="0.8"/>
<ellipse cx="74.6" cy="19.9" rx="3.1" ry="2.8" fill="#4a6258" opacity="0.8"/>
<ellipse cx="23.5" cy="31.8" rx="2.0" ry="1.8" fill="#1e382e" opacity="0.8"/>
<ellipse cx="97.6" cy="20.7" rx="2.3" ry="2.0" fill="#2a463c" opacity="0.8"/>
<ellipse cx="91.0" cy="12.1" rx="1.6" ry="1.4" fill="#1e382e" opacity="0.8"/>
<ellipse cx="64.3" cy="3.3" rx="1.8" ry="1.6" fill="#4a6258" opacity="0.8"/>
<ellipse cx="69.3" cy="26.1" rx="1.8" ry="1.6" fill="#2a463c" opacity="0.8"/>
<ellipse cx="6.1" cy="11.3" rx="2.8" ry="2.6" fill="#7a7a68" opacity="0.8"/>
<ellipse cx="29.1" cy="21.7" rx="2.4" ry="2.2" fill="#2a463c" opacity="0.8"/>
<ellipse cx="76.7" cy="41.7" rx="2.6" ry="2.3" fill="#4a6258" opacity="0.8"/>
<ellipse cx="97.8" cy="39.3" rx="1.5" ry="1.4" fill="#2a463c" opacity="0.8"/>
<ellipse cx="7.6" cy="21.3" rx="3.5" ry="3.1" fill="#4a6258" opacity="0.8"/>
<ellipse cx="38.7" cy="38.5" rx="3.4" ry="3.0" fill="#3a5a4e" opacity="0.8"/>
<ellipse cx="58.1" cy="6.0" rx="2.5" ry="2.3" fill="#5c6458" opacity="0.8"/>
<ellipse cx="88.7" cy="29.5" rx="2.0" ry="1.8" fill="#2a463c" opacity="0.8"/>
<ellipse cx="39.4" cy="6.7" rx="3.4" ry="3.1" fill="#5c6458" opacity="0.8"/>
<ellipse cx="72.7" cy="17.5" rx="2.3" ry="2.0" fill="#3a5a4e" opacity="0.8"/>
<ellipse cx="84.0" cy="0.1" rx="3.0" ry="2.7" fill="#2a463c" opacity="0.8"/>
<ellipse cx="12.0" cy="38.9" rx="2.9" ry="2.6" fill="#1e382e" opacity="0.8"/>
<ellipse cx="29.0" cy="15.6" rx="2.3" ry="2.1" fill="#38524a" opacity="0.8"/>
<ellipse cx="7.6" cy="38.9" rx="3.0" ry="2.7" fill="#3a5a4e" opacity="0.8"/>
<rect x="74" y="26" width="26" height="16" fill="#1c3428" opacity="0.6"/>
</g>
<rect x="0" y="42.2" width="100" height="1" fill="#222"/>
<rect x="0" y="43.2" width="100" height="1.6" fill="#e6e6e6"/>
<rect x="0" y="44.8" width="100" height="22.4" fill="#a09496"/>
<g filter="url(#b05)">
<rect x="-5.0" y="44.8" width="9.6" height="5.2" fill="#9a9a9a"/>
<rect x="5.0" y="44.8" width="9.6" height="5.2" fill="#b09ca6"/>
<rect x="15.0" y="44.8" width="9.6" height="5.2" fill="#b09ca6"/>
<rect x="25.0" y="44.8" width="9.6" height="5.2" fill="#8e8e8e"/>
<rect x="35.0" y="44.8" width="9.6" height="5.2" fill="#9a9a9a"/>
<rect x="45.0" y="44.8" width="9.6" height="5.2" fill="#8e8e8e"/>
<rect x="55.0" y="44.8" width="9.6" height="5.2" fill="#a8a8a8"/>
<rect x="65.0" y="44.8" width="9.6" height="5.2" fill="#a8a8a8"/>
<rect x="75.0" y="44.8" width="9.6" height="5.2" fill="#9a9a9a"/>
<rect x="85.0" y="44.8" width="9.6" height="5.2" fill="#b4a0aa"/>
<rect x="0.0" y="50.4" width="9.6" height="5.2" fill="#a49084"/>
<rect x="10.0" y="50.4" width="9.6" height="5.2" fill="#9a9a9a"/>
<rect x="20.0" y="50.4" width="9.6" height="5.2" fill="#a8a8a8"/>
<rect x="30.0" y="50.4" width="9.6" height="5.2" fill="#9a9a9a"/>
<rect x="40.0" y="50.4" width="9.6" height="5.2" fill="#b4a0aa"/>
<rect x="50.0" y="50.4" width="9.6" height="5.2" fill="#b09ca6"/>
<rect x="60.0" y="50.4" width="9.6" height="5.2" fill="#8e8e8e"/>
<rect x="70.0" y="50.4" width="9.6" height="5.2" fill="#b4a0aa"/>
<rect x="80.0" y="50.4" width="9.6" height="5.2" fill="#a49084"/>
<rect x="90.0" y="50.4" width="9.6" height="5.2" fill="#a49084"/>
<rect x="-5.0" y="56.0" width="9.6" height="5.2" fill="#a8a8a8"/>
<rect x="5.0" y="56.0" width="9.6" height="5.2" fill="#8e8e8e"/>
<rect x="15.0" y="56.0" width="9.6" height="5.2" fill="#b09ca6"/>
<rect x="25.0" y="56.0" width="9.6" height="5.2" fill="#b09ca6"/>
<rect x="35.0" y="56.0" width="9.6" height="5.2" fill="#8e8e8e"/>
<rect x="45.0" y="56.0" width="9.6" height="5.2" fill="#b4a0aa"/>
<rect x="55.0" y="56.0" width="9.6" height="5.2" fill="#b4a0aa"/>
<rect x="65.0" y="56.0" width="9.6" height="5.2" fill="#a49084"/>
<rect x="75.0" y="56.0" width="9.6" height="5.2" fill="#a8a8a8"/>
<rect x="85.0" y="56.0" width="9.6" height="5.2" fill="#8e8e8e"/>
<rect x="0.0" y="61.6" width="9.6" height="5.2" fill="#9a9a9a"/>
<rect x="10.0" y="61.6" width="9.6" height="5.2" fill="#b4a0aa"/>
<rect x="20.0" y="61.6" width="9.6" height="5.2" fill="#b09ca6"/>
<rect x="30.0" y="61.6" width="9.6" height="5.2" fill="#a49084"/>
<rect x="40.0" y="61.6" width="9.6" height="5.2" fill="#a8a8a8"/>
<rect x="50.0" y="61.6" width="9.6" height="5.2" fill="#a8a8a8"/>
<rect x="60.0" y="61.6" width="9.6" height="5.2" fill="#b4a0aa"/>
<rect x="70.0" y="61.6" width="9.6" height="5.2" fill="#b4a0aa"/>
<rect x="80.0" y="61.6" width="9.6" height="5.2" fill="#9a9a9a"/>
<rect x="90.0" y="61.6" width="9.6" height="5.2" fill="#9a9a9a"/>
</g>
<rect x="0" y="67.2" width="100" height="1.4" fill="#e6e6e6"/>
<rect x="0" y="68.6" width="100" height="6.4" fill="#151515"/></svg></div>
<div class="a" style="left:1130px;top:949.5px;width:28px;height:29px;border-radius:5px;background:#fff;border:1.5px solid #c6c6c6"></div>
<div class="t" style="left:1173.0px;top:953.2px;font-size:24px;color:#111111;-webkit-text-stroke:0.3px #111111;letter-spacing:0.93px;font-weight:400;">682FBA86-8A5B-...</div>
<div class="a" style="left:1420px;top:643px;width:291px;height:288px;border:1.5px solid #d4d4d4;background:#fff"></div>
<div class="a" style="left:1421px;top:678px;width:289px;height:217px;overflow:hidden"><svg width="100%" height="100%" viewBox="0 0 100 75" preserveAspectRatio="none" style="display:block"><rect width="100" height="75" fill="#2f4b41"/>
<g filter="url(#b05)">
<ellipse cx="32.4" cy="6.3" rx="2.8" ry="2.5" fill="#3a5a4e" opacity="0.8"/>
<ellipse cx="9.4" cy="24.5" rx="3.3" ry="3.0" fill="#243e36" opacity="0.8"/>
<ellipse cx="3.7" cy="18.2" rx="1.6" ry="1.5" fill="#3a5a4e" opacity="0.8"/>
<ellipse cx="55.1" cy="2.5" rx="2.6" ry="2.4" fill="#243e36" opacity="0.8"/>
<ellipse cx="58.3" cy="2.6" rx="2.7" ry="2.4" fill="#3a5a4e" opacity="0.8"/>
<ellipse cx="4.7" cy="36.1" rx="2.1" ry="1.9" fill="#243e36" opacity="0.8"/>
<ellipse cx="54.1" cy="24.0" rx="2.6" ry="2.4" fill="#1e382e" opacity="0.8"/>
<ellipse cx="18.1" cy="24.4" rx="2.8" ry="2.5" fill="#4a6258" opacity="0.8"/>
<ellipse cx="9.7" cy="29.9" rx="2.6" ry="2.4" fill="#38524a" opacity="0.8"/>
<ellipse cx="20.6" cy="28.6" rx="2.4" ry="2.1" fill="#4a6258" opacity="0.8"/>
<ellipse cx="46.6" cy="38.8" rx="2.2" ry="2.0" fill="#243e36" opacity="0.8"/>
<ellipse cx="79.4" cy="29.4" rx="2.0" ry="1.8" fill="#38524a" opacity="0.8"/>
<ellipse cx="30.0" cy="20.8" rx="2.2" ry="2.0" fill="#2a463c" opacity="0.8"/>
<ellipse cx="28.8" cy="41.2" rx="1.7" ry="1.6" fill="#2a463c" opacity="0.8"/>
<ellipse cx="16.5" cy="14.4" rx="3.4" ry="3.0" fill="#2a463c" opacity="0.8"/>
<ellipse cx="3.9" cy="28.1" rx="3.0" ry="2.7" fill="#38524a" opacity="0.8"/>
<ellipse cx="78.9" cy="34.4" rx="2.2" ry="2.0" fill="#4a6258" opacity="0.8"/>
<ellipse cx="59.4" cy="24.4" rx="2.4" ry="2.2" fill="#3a5a4e" opacity="0.8"/>
<ellipse cx="94.5" cy="19.9" rx="2.8" ry="2.5" fill="#3a5a4e" opacity="0.8"/>
<ellipse cx="73.1" cy="13.0" rx="2.7" ry="2.4" fill="#1e382e" opacity="0.8"/>
<ellipse cx="82.2" cy="12.0" rx="2.3" ry="2.0" fill="#1e382e" opacity="0.8"/>
<ellipse cx="34.7" cy="39.5" rx="2.2" ry="2.0" fill="#38524a" opacity="0.8"/>
<ellipse cx="11.7" cy="2.5" rx="3.0" ry="2.7" fill="#243e36" opacity="0.8"/>
<ellipse cx="39.8" cy="38.5" rx="2.5" ry="2.2" fill="#243e36" opacity="0.8"/>
<ellipse cx="44.9" cy="23.1" rx="3.3" ry="2.9" fill="#2a463c" opacity="0.8"/>
<ellipse cx="86.4" cy="11.7" rx="2.3" ry="2.1" fill="#4a6258" opacity="0.8"/>
<ellipse cx="68.3" cy="16.0" rx="2.0" ry="1.8" fill="#3a5a4e" opacity="0.8"/>
<ellipse cx="17.6" cy="9.7" rx="2.0" ry="1.8" fill="#2a463c" opacity="0.8"/>
<ellipse cx="18.2" cy="11.8" rx="1.8" ry="1.6" fill="#5c6458" opacity="0.8"/>
<ellipse cx="95.3" cy="29.0" rx="2.5" ry="2.3" fill="#38524a" opacity="0.8"/>
<ellipse cx="65.5" cy="31.1" rx="2.4" ry="2.2" fill="#1e382e" opacity="0.8"/>
<ellipse cx="79.8" cy="16.5" rx="2.3" ry="2.1" fill="#3a5a4e" opacity="0.8"/>
<ellipse cx="48.2" cy="16.8" rx="1.9" ry="1.7" fill="#243e36" opacity="0.8"/>
<ellipse cx="44.1" cy="4.6" rx="2.7" ry="2.4" fill="#707258" opacity="0.8"/>
<ellipse cx="53.7" cy="39.9" rx="2.7" ry="2.5" fill="#3a5a4e" opacity="0.8"/>
<ellipse cx="87.4" cy="25.8" rx="1.8" ry="1.6" fill="#4a6258" opacity="0.8"/>
<ellipse cx="95.5" cy="25.3" rx="2.4" ry="2.2" fill="#3a5a4e" opacity="0.8"/>
<ellipse cx="84.9" cy="41.7" rx="2.4" ry="2.2" fill="#2a463c" opacity="0.8"/>
<ellipse cx="31.2" cy="6.1" rx="3.0" ry="2.7" fill="#707258" opacity="0.8"/>
<ellipse cx="51.6" cy="8.6" rx="3.4" ry="3.1" fill="#6a6c60" opacity="0.8"/>
<ellipse cx="75.8" cy="12.5" rx="2.8" ry="2.5" fill="#3a5a4e" opacity="0.8"/>
<ellipse cx="69.6" cy="11.0" rx="2.2" ry="2.0" fill="#707258" opacity="0.8"/>
<ellipse cx="53.3" cy="32.7" rx="2.2" ry="1.9" fill="#243e36" opacity="0.8"/>
<ellipse cx="61.3" cy="33.1" rx="3.0" ry="2.7" fill="#243e36" opacity="0.8"/>
<ellipse cx="80.6" cy="34.4" rx="3.0" ry="2.7" fill="#243e36" opacity="0.8"/>
<ellipse cx="20.0" cy="20.7" rx="3.0" ry="2.7" fill="#3a5a4e" opacity="0.8"/>
<ellipse cx="79.0" cy="19.8" rx="1.9" ry="1.7" fill="#38524a" opacity="0.8"/>
<ellipse cx="95.7" cy="18.8" rx="3.4" ry="3.0" fill="#4a6258" opacity="0.8"/>
<ellipse cx="95.5" cy="15.3" rx="1.9" ry="1.7" fill="#243e36" opacity="0.8"/>
<ellipse cx="47.0" cy="14.2" rx="2.5" ry="2.2" fill="#38524a" opacity="0.8"/>
<ellipse cx="84.0" cy="20.1" rx="2.8" ry="2.5" fill="#1e382e" opacity="0.8"/>
<ellipse cx="8.5" cy="27.7" rx="3.3" ry="3.0" fill="#1e382e" opacity="0.8"/>
<ellipse cx="75.0" cy="20.1" rx="1.9" ry="1.7" fill="#1e382e" opacity="0.8"/>
<ellipse cx="33.3" cy="33.6" rx="3.4" ry="3.1" fill="#2a463c" opacity="0.8"/>
<ellipse cx="46.3" cy="31.2" rx="1.7" ry="1.5" fill="#243e36" opacity="0.8"/>
<ellipse cx="17.0" cy="5.3" rx="1.8" ry="1.6" fill="#2a463c" opacity="0.8"/>
<ellipse cx="14.6" cy="34.7" rx="3.5" ry="3.1" fill="#1e382e" opacity="0.8"/>
<ellipse cx="93.7" cy="6.5" rx="2.6" ry="2.3" fill="#3a5a4e" opacity="0.8"/>
<ellipse cx="1.4" cy="40.8" rx="2.8" ry="2.5" fill="#38524a" opacity="0.8"/>
<ellipse cx="74.9" cy="5.8" rx="3.5" ry="3.1" fill="#243e36" opacity="0.8"/>
<ellipse cx="21.1" cy="10.6" rx="2.1" ry="1.9" fill="#243e36" opacity="0.8"/>
<ellipse cx="32.6" cy="22.9" rx="3.2" ry="2.9" fill="#3a5a4e" opacity="0.8"/>
<ellipse cx="91.0" cy="14.9" rx="2.4" ry="2.2" fill="#38524a" opacity="0.8"/>
<ellipse cx="81.5" cy="21.7" rx="3.2" ry="2.8" fill="#38524a" opacity="0.8"/>
<ellipse cx="13.1" cy="6.4" rx="2.5" ry="2.3" fill="#2a463c" opacity="0.8"/>
<ellipse cx="60.9" cy="32.6" rx="1.8" ry="1.6" fill="#243e36" opacity="0.8"/>
<ellipse cx="47.3" cy="30.5" rx="2.6" ry="2.4" fill="#4a6258" opacity="0.8"/>
<ellipse cx="68.2" cy="22.3" rx="2.5" ry="2.2" fill="#3a5a4e" opacity="0.8"/>
<ellipse cx="88.3" cy="2.4" rx="1.9" ry="1.7" fill="#3a5a4e" opacity="0.8"/>
<ellipse cx="77.2" cy="21.3" rx="2.6" ry="2.4" fill="#3a5a4e" opacity="0.8"/>
<ellipse cx="44.3" cy="25.7" rx="2.5" ry="2.3" fill="#38524a" opacity="0.8"/>
<ellipse cx="19.9" cy="11.6" rx="2.5" ry="2.3" fill="#2a463c" opacity="0.8"/>
<ellipse cx="24.8" cy="22.0" rx="3.3" ry="2.9" fill="#4a6258" opacity="0.8"/>
<ellipse cx="92.3" cy="37.5" rx="1.9" ry="1.7" fill="#2a463c" opacity="0.8"/>
<ellipse cx="13.7" cy="5.1" rx="2.4" ry="2.1" fill="#3a5a4e" opacity="0.8"/>
<ellipse cx="42.8" cy="8.9" rx="2.1" ry="1.9" fill="#3a5a4e" opacity="0.8"/>
<ellipse cx="15.4" cy="30.1" rx="2.8" ry="2.5" fill="#243e36" opacity="0.8"/>
<ellipse cx="25.3" cy="5.8" rx="2.4" ry="2.2" fill="#1e382e" opacity="0.8"/>
<ellipse cx="39.8" cy="20.5" rx="3.5" ry="3.1" fill="#243e36" opacity="0.8"/>
<ellipse cx="16.1" cy="18.1" rx="2.5" ry="2.3" fill="#4a6258" opacity="0.8"/>
<ellipse cx="42.1" cy="15.0" rx="1.7" ry="1.5" fill="#4a6258" opacity="0.8"/>
<ellipse cx="1.9" cy="23.3" rx="2.4" ry="2.1" fill="#3a5a4e" opacity="0.8"/>
<ellipse cx="38.4" cy="21.7" rx="2.1" ry="1.9" fill="#3a5a4e" opacity="0.8"/>
<ellipse cx="11.3" cy="38.6" rx="2.0" ry="1.8" fill="#3a5a4e" opacity="0.8"/>
<ellipse cx="8.4" cy="11.4" rx="3.3" ry="3.0" fill="#707258" opacity="0.8"/>
<ellipse cx="82.0" cy="35.7" rx="2.9" ry="2.6" fill="#4a6258" opacity="0.8"/>
<ellipse cx="40.6" cy="22.5" rx="2.5" ry="2.3" fill="#2a463c" opacity="0.8"/>
<ellipse cx="70.0" cy="3.8" rx="1.6" ry="1.5" fill="#6a6c60" opacity="0.8"/>
<ellipse cx="26.9" cy="0.7" rx="1.7" ry="1.5" fill="#707258" opacity="0.8"/>
<ellipse cx="6.7" cy="36.2" rx="2.4" ry="2.2" fill="#4a6258" opacity="0.8"/>
<ellipse cx="99.4" cy="17.5" rx="3.3" ry="3.0" fill="#38524a" opacity="0.8"/>
<ellipse cx="12.9" cy="22.1" rx="2.0" ry="1.8" fill="#3a5a4e" opacity="0.8"/>
<ellipse cx="96.9" cy="11.0" rx="1.9" ry="1.7" fill="#4a6258" opacity="0.8"/>
<ellipse cx="62.9" cy="22.3" rx="1.9" ry="1.7" fill="#2a463c" opacity="0.8"/>
<ellipse cx="50.0" cy="7.5" rx="2.2" ry="2.0" fill="#3a5a4e" opacity="0.8"/>
<ellipse cx="3.7" cy="0.8" rx="2.5" ry="2.3" fill="#243e36" opacity="0.8"/>
<ellipse cx="24.6" cy="18.8" rx="2.8" ry="2.5" fill="#1e382e" opacity="0.8"/>
<ellipse cx="43.2" cy="20.8" rx="3.2" ry="2.9" fill="#2a463c" opacity="0.8"/>
<ellipse cx="97.0" cy="12.9" rx="1.9" ry="1.7" fill="#243e36" opacity="0.8"/>
<ellipse cx="34.3" cy="35.0" rx="2.9" ry="2.6" fill="#1e382e" opacity="0.8"/>
<ellipse cx="14.0" cy="41.6" rx="3.5" ry="3.1" fill="#243e36" opacity="0.8"/>
<ellipse cx="1.4" cy="26.3" rx="3.3" ry="2.9" fill="#2a463c" opacity="0.8"/>
<ellipse cx="16.3" cy="3.5" rx="3.2" ry="2.9" fill="#38524a" opacity="0.8"/>
<ellipse cx="28.2" cy="10.2" rx="2.1" ry="1.9" fill="#5c6458" opacity="0.8"/>
<ellipse cx="44.6" cy="11.1" rx="3.4" ry="3.1" fill="#6a6c60" opacity="0.8"/>
<ellipse cx="96.6" cy="13.0" rx="2.2" ry="2.0" fill="#3a5a4e" opacity="0.8"/>
<ellipse cx="33.5" cy="3.5" rx="2.1" ry="1.9" fill="#6a6c60" opacity="0.8"/>
<ellipse cx="9.1" cy="34.3" rx="1.8" ry="1.6" fill="#38524a" opacity="0.8"/>
<ellipse cx="4.2" cy="0.9" rx="2.1" ry="1.9" fill="#707258" opacity="0.8"/>
<ellipse cx="65.8" cy="30.1" rx="3.3" ry="2.9" fill="#2a463c" opacity="0.8"/>
<ellipse cx="76.4" cy="30.3" rx="2.5" ry="2.2" fill="#4a6258" opacity="0.8"/>
<ellipse cx="72.4" cy="27.0" rx="1.6" ry="1.4" fill="#1e382e" opacity="0.8"/>
<ellipse cx="89.2" cy="26.3" rx="3.0" ry="2.7" fill="#38524a" opacity="0.8"/>
<ellipse cx="13.9" cy="22.0" rx="2.5" ry="2.3" fill="#3a5a4e" opacity="0.8"/>
<ellipse cx="82.6" cy="24.5" rx="3.3" ry="3.0" fill="#1e382e" opacity="0.8"/>
<ellipse cx="95.6" cy="27.0" rx="1.7" ry="1.5" fill="#3a5a4e" opacity="0.8"/>
<ellipse cx="13.3" cy="15.1" rx="1.7" ry="1.5" fill="#2a463c" opacity="0.8"/>
<ellipse cx="55.9" cy="26.4" rx="2.8" ry="2.5" fill="#1e382e" opacity="0.8"/>
<ellipse cx="24.5" cy="11.1" rx="2.4" ry="2.2" fill="#3a5a4e" opacity="0.8"/>
<ellipse cx="50.3" cy="22.5" rx="2.8" ry="2.5" fill="#3a5a4e" opacity="0.8"/>
<ellipse cx="74.6" cy="19.9" rx="3.1" ry="2.8" fill="#4a6258" opacity="0.8"/>
<ellipse cx="23.5" cy="31.8" rx="2.0" ry="1.8" fill="#1e382e" opacity="0.8"/>
<ellipse cx="97.6" cy="20.7" rx="2.3" ry="2.0" fill="#2a463c" opacity="0.8"/>
<ellipse cx="91.0" cy="12.1" rx="1.6" ry="1.4" fill="#1e382e" opacity="0.8"/>
<ellipse cx="64.3" cy="3.3" rx="1.8" ry="1.6" fill="#4a6258" opacity="0.8"/>
<ellipse cx="69.3" cy="26.1" rx="1.8" ry="1.6" fill="#2a463c" opacity="0.8"/>
<ellipse cx="6.1" cy="11.3" rx="2.8" ry="2.6" fill="#7a7a68" opacity="0.8"/>
<ellipse cx="29.1" cy="21.7" rx="2.4" ry="2.2" fill="#2a463c" opacity="0.8"/>
<ellipse cx="76.7" cy="41.7" rx="2.6" ry="2.3" fill="#4a6258" opacity="0.8"/>
<ellipse cx="97.8" cy="39.3" rx="1.5" ry="1.4" fill="#2a463c" opacity="0.8"/>
<ellipse cx="7.6" cy="21.3" rx="3.5" ry="3.1" fill="#4a6258" opacity="0.8"/>
<ellipse cx="38.7" cy="38.5" rx="3.4" ry="3.0" fill="#3a5a4e" opacity="0.8"/>
<ellipse cx="58.1" cy="6.0" rx="2.5" ry="2.3" fill="#5c6458" opacity="0.8"/>
<ellipse cx="88.7" cy="29.5" rx="2.0" ry="1.8" fill="#2a463c" opacity="0.8"/>
<ellipse cx="39.4" cy="6.7" rx="3.4" ry="3.1" fill="#5c6458" opacity="0.8"/>
<ellipse cx="72.7" cy="17.5" rx="2.3" ry="2.0" fill="#3a5a4e" opacity="0.8"/>
<ellipse cx="84.0" cy="0.1" rx="3.0" ry="2.7" fill="#2a463c" opacity="0.8"/>
<ellipse cx="12.0" cy="38.9" rx="2.9" ry="2.6" fill="#1e382e" opacity="0.8"/>
<ellipse cx="29.0" cy="15.6" rx="2.3" ry="2.1" fill="#38524a" opacity="0.8"/>
<ellipse cx="7.6" cy="38.9" rx="3.0" ry="2.7" fill="#3a5a4e" opacity="0.8"/>
<rect x="74" y="26" width="26" height="16" fill="#1c3428" opacity="0.6"/>
</g>
<rect x="0" y="42.2" width="100" height="1" fill="#222"/>
<rect x="0" y="43.2" width="100" height="1.6" fill="#e6e6e6"/>
<rect x="0" y="44.8" width="100" height="22.4" fill="#a09496"/>
<g filter="url(#b05)">
<rect x="-5.0" y="44.8" width="9.6" height="5.2" fill="#9a9a9a"/>
<rect x="5.0" y="44.8" width="9.6" height="5.2" fill="#b09ca6"/>
<rect x="15.0" y="44.8" width="9.6" height="5.2" fill="#b09ca6"/>
<rect x="25.0" y="44.8" width="9.6" height="5.2" fill="#8e8e8e"/>
<rect x="35.0" y="44.8" width="9.6" height="5.2" fill="#9a9a9a"/>
<rect x="45.0" y="44.8" width="9.6" height="5.2" fill="#8e8e8e"/>
<rect x="55.0" y="44.8" width="9.6" height="5.2" fill="#a8a8a8"/>
<rect x="65.0" y="44.8" width="9.6" height="5.2" fill="#a8a8a8"/>
<rect x="75.0" y="44.8" width="9.6" height="5.2" fill="#9a9a9a"/>
<rect x="85.0" y="44.8" width="9.6" height="5.2" fill="#b4a0aa"/>
<rect x="0.0" y="50.4" width="9.6" height="5.2" fill="#a49084"/>
<rect x="10.0" y="50.4" width="9.6" height="5.2" fill="#9a9a9a"/>
<rect x="20.0" y="50.4" width="9.6" height="5.2" fill="#a8a8a8"/>
<rect x="30.0" y="50.4" width="9.6" height="5.2" fill="#9a9a9a"/>
<rect x="40.0" y="50.4" width="9.6" height="5.2" fill="#b4a0aa"/>
<rect x="50.0" y="50.4" width="9.6" height="5.2" fill="#b09ca6"/>
<rect x="60.0" y="50.4" width="9.6" height="5.2" fill="#8e8e8e"/>
<rect x="70.0" y="50.4" width="9.6" height="5.2" fill="#b4a0aa"/>
<rect x="80.0" y="50.4" width="9.6" height="5.2" fill="#a49084"/>
<rect x="90.0" y="50.4" width="9.6" height="5.2" fill="#a49084"/>
<rect x="-5.0" y="56.0" width="9.6" height="5.2" fill="#a8a8a8"/>
<rect x="5.0" y="56.0" width="9.6" height="5.2" fill="#8e8e8e"/>
<rect x="15.0" y="56.0" width="9.6" height="5.2" fill="#b09ca6"/>
<rect x="25.0" y="56.0" width="9.6" height="5.2" fill="#b09ca6"/>
<rect x="35.0" y="56.0" width="9.6" height="5.2" fill="#8e8e8e"/>
<rect x="45.0" y="56.0" width="9.6" height="5.2" fill="#b4a0aa"/>
<rect x="55.0" y="56.0" width="9.6" height="5.2" fill="#b4a0aa"/>
<rect x="65.0" y="56.0" width="9.6" height="5.2" fill="#a49084"/>
<rect x="75.0" y="56.0" width="9.6" height="5.2" fill="#a8a8a8"/>
<rect x="85.0" y="56.0" width="9.6" height="5.2" fill="#8e8e8e"/>
<rect x="0.0" y="61.6" width="9.6" height="5.2" fill="#9a9a9a"/>
<rect x="10.0" y="61.6" width="9.6" height="5.2" fill="#b4a0aa"/>
<rect x="20.0" y="61.6" width="9.6" height="5.2" fill="#b09ca6"/>
<rect x="30.0" y="61.6" width="9.6" height="5.2" fill="#a49084"/>
<rect x="40.0" y="61.6" width="9.6" height="5.2" fill="#a8a8a8"/>
<rect x="50.0" y="61.6" width="9.6" height="5.2" fill="#a8a8a8"/>
<rect x="60.0" y="61.6" width="9.6" height="5.2" fill="#b4a0aa"/>
<rect x="70.0" y="61.6" width="9.6" height="5.2" fill="#b4a0aa"/>
<rect x="80.0" y="61.6" width="9.6" height="5.2" fill="#9a9a9a"/>
<rect x="90.0" y="61.6" width="9.6" height="5.2" fill="#9a9a9a"/>
</g>
<rect x="0" y="67.2" width="100" height="1.4" fill="#e6e6e6"/>
<rect x="0" y="68.6" width="100" height="6.4" fill="#151515"/></svg></div>
<div class="a" style="left:1436px;top:949.5px;width:28px;height:29px;border-radius:5px;background:#3a8ef2"></div>
<svg class="a" style="left:1436px;top:949.5px" width="28" height="29" viewBox="0 0 28 29"><path d="M6.5 15.5 L11.5 21.5 L21.5 6.5" fill="none" stroke="#fff" stroke-width="2.6" stroke-linecap="round" stroke-linejoin="round"/></svg>
<div class="t" style="left:1479.0px;top:953.2px;font-size:24px;color:#111111;-webkit-text-stroke:0.3px #111111;letter-spacing:0.01px;font-weight:400;">1824BFBB-13C2-4...</div>
<div class="a" style="left:1726px;top:643px;width:291px;height:288px;border:1.5px solid #d4d4d4;background:#fff"></div>
<div class="a" style="left:1727px;top:676px;width:289px;height:219px;overflow:hidden"><svg width="100%" height="100%" viewBox="0 0 100 75" preserveAspectRatio="none" style="display:block"><rect width="100" height="75" fill="#f8e6c2"/>
<rect x="0" y="40" width="100" height="35" fill="#cfbd98"/>
<g filter="url(#b1)">
<polygon points="0,31 30,31 70,33 100,33 100,39.5 0,39.5" fill="#4c6c9e"/>
<rect x="0" y="30.5" width="100" height="2" fill="#96a4a0" opacity="0.8"/>
<rect x="0" y="39.5" width="100" height="3" fill="#c4b49a"/>
<rect x="0" y="64" width="100" height="11" fill="#bca69e"/>
<rect x="60" y="48" width="40" height="27" fill="#c8b2a2" opacity="0.5"/>
<polygon points="24,52 42,50 42,75 22,75" fill="#b4b4bc"/>
<ellipse cx="47" cy="22" rx="12" ry="11" fill="#2e4e98"/>
<ellipse cx="42" cy="32" rx="5" ry="10" fill="#3a5a98"/>
<ellipse cx="55" cy="32" rx="9" ry="12" fill="#c4a0a8"/>
<ellipse cx="52" cy="30.5" rx="4.5" ry="3" fill="#24389a"/>
<ellipse cx="61" cy="30.5" rx="4" ry="3" fill="#2a3aa0"/>
<polygon points="46,42 60,42 58,50 48,50" fill="#c8a0a0"/>
<polygon points="30,46 58,44 58,75 36,75" fill="#d8d2c2"/>
<polygon points="56,54 66,56 72,75 58,75" fill="#c89888" opacity="0.8"/>
<polygon points="42,58 54,56 56,70 44,70" fill="#98a890" opacity="0.6"/>
</g></svg></div>
<div class="a" style="left:1742px;top:949.5px;width:28px;height:29px;border-radius:5px;background:#fff;border:1.5px solid #c6c6c6"></div>
<div class="t" style="left:1785.0px;top:953.2px;font-size:24px;color:#111111;-webkit-text-stroke:0.3px #111111;letter-spacing:0.85px;font-weight:400;">8B6FF2D3-C678-...</div>
<div class="a" style="left:808px;top:1007px;width:291px;height:288px;border:1.5px solid #d4d4d4;background:#fff"></div>
<div class="a" style="left:809px;top:1040px;width:289px;height:219px;overflow:hidden"><svg width="100%" height="100%" viewBox="0 0 100 75" preserveAspectRatio="none" style="display:block"><rect width="100" height="75" fill="#f8e6c2"/>
<rect x="0" y="40" width="100" height="35" fill="#cfbd98"/>
<g filter="url(#b1)">
<polygon points="0,31 30,31 70,33 100,33 100,39.5 0,39.5" fill="#4c6c9e"/>
<rect x="0" y="30.5" width="100" height="2" fill="#96a4a0" opacity="0.8"/>
<rect x="0" y="39.5" width="100" height="3" fill="#c4b49a"/>
<rect x="0" y="64" width="100" height="11" fill="#bca69e"/>
<rect x="60" y="48" width="40" height="27" fill="#c8b2a2" opacity="0.5"/>
<polygon points="24,52 42,50 42,75 22,75" fill="#b4b4bc"/>
<ellipse cx="47" cy="22" rx="12" ry="11" fill="#2e4e98"/>
<ellipse cx="42" cy="32" rx="5" ry="10" fill="#3a5a98"/>
<ellipse cx="55" cy="32" rx="9" ry="12" fill="#c4a0a8"/>
<ellipse cx="52" cy="30.5" rx="4.5" ry="3" fill="#24389a"/>
<ellipse cx="61" cy="30.5" rx="4" ry="3" fill="#2a3aa0"/>
<polygon points="46,42 60,42 58,50 48,50" fill="#c8a0a0"/>
<polygon points="30,46 58,44 58,75 36,75" fill="#d8d2c2"/>
<polygon points="56,54 66,56 72,75 58,75" fill="#c89888" opacity="0.8"/>
<polygon points="42,58 54,56 56,70 44,70" fill="#98a890" opacity="0.6"/>
</g></svg></div>
<div class="a" style="left:824px;top:1313.5px;width:28px;height:29px;border-radius:5px;background:#3a8ef2"></div>
<svg class="a" style="left:824px;top:1313.5px" width="28" height="29" viewBox="0 0 28 29"><path d="M6.5 15.5 L11.5 21.5 L21.5 6.5" fill="none" stroke="#fff" stroke-width="2.6" stroke-linecap="round" stroke-linejoin="round"/></svg>
<div class="a" style="left:1114px;top:1007px;width:291px;height:288px;border:1.5px solid #d4d4d4;background:#fff"></div>
<div class="a" style="left:1115px;top:1042px;width:289px;height:217px;overflow:hidden"><svg width="100%" height="100%" viewBox="0 0 100 75" preserveAspectRatio="none" style="display:block"><rect width="100" height="75" fill="#2c4272"/>
<g filter="url(#b1)">
<polygon points="0,0 100,0 100,2 90,10 82,26 75,34 45,34 32,28 20,18 10,12 0,10" fill="#4a78c0"/>
<rect x="20" y="0" width="60" height="4" fill="#3e66b8"/>
<rect x="30" y="14" width="50" height="12" fill="#6890c4" opacity="0.8"/>
<polygon points="30,26 80,26 80,34 74,40 40,40" fill="#90a8c6"/>
<polygon points="36,29 78,29 74,37 44,35" fill="#c8d0d8"/>
<polygon points="0,8 10,12 14,20 12,50 0,60" fill="#34508a"/>
<polygon points="4,12 10,14 8,30 3,26" fill="#8a8ca8" opacity="0.7"/>
<polygon points="12,16 22,26 32,38 44,48 54,56 50,60 38,54 24,50 12,46" fill="#aaa6a6"/>
<polygon points="16,24 24,32 22,44 14,40" fill="#c4c0c0" opacity="0.7"/>
<polygon points="40,44 56,50 58,58 46,54" fill="#8e8874" opacity="0.8"/>
<polygon points="0,48 12,46 38,54 54,60 40,75 0,75" fill="#4e6ca4"/>
<polygon points="4,52 30,54 24,66 4,64" fill="#6c88b8" opacity="0.7"/>
<polygon points="100,0 92,4 86,14 80,30 72,40 56,54 40,75 100,75" fill="#25375a"/>
<polygon points="88,10 96,6 100,12 100,30 90,26" fill="#3e5684" opacity="0.8"/>
<polygon points="70,75 100,52 100,75" fill="#34507e" opacity="0.8"/>
<polygon points="12,70 96,34 96,37 16,73" fill="#7a92ba" opacity="0.8"/>
</g><g clip-path="url(#cML)"><g filter="url(#b05)" opacity="0.6">
<rect x="34.3" y="67.0" width="3.9" height="3.0" fill="#d0dcf0"/>
<rect x="1.6" y="58.4" width="4.3" height="2.9" fill="#b8c8e4"/>
<rect x="6.2" y="58.5" width="2.2" height="1.4" fill="#d0dcf0"/>
<rect x="13.7" y="66.7" width="2.7" height="1.3" fill="#6a88c0"/>
<rect x="8.8" y="68.7" width="1.9" height="1.2" fill="#b8c8e4"/>
<rect x="7.3" y="74.1" width="1.5" height="1.1" fill="#b8c8e4"/>
<rect x="48.0" y="53.0" width="4.4" height="2.7" fill="#b8c8e4"/>
<rect x="10.0" y="74.0" width="2.1" height="1.6" fill="#6a88c0"/>
<rect x="16.4" y="55.2" width="2.0" height="0.9" fill="#8aa4d0"/>
<rect x="18.3" y="69.3" width="3.3" height="2.1" fill="#2a4070"/>
<rect x="3.6" y="55.0" width="2.4" height="1.6" fill="#b8c8e4"/>
<rect x="26.5" y="65.8" width="1.7" height="1.3" fill="#8aa4d0"/>
<rect x="52.2" y="55.1" width="2.7" height="1.7" fill="#6a88c0"/>
<rect x="20.1" y="61.9" width="1.5" height="0.6" fill="#b8c8e4"/>
<rect x="34.3" y="73.6" width="1.9" height="0.9" fill="#6a88c0"/>
<rect x="18.9" y="55.0" width="3.1" height="2.2" fill="#8aa4d0"/>
<rect x="32.4" y="68.2" width="2.6" height="1.3" fill="#6a88c0"/>
<rect x="52.0" y="46.8" width="2.5" height="1.6" fill="#b8c8e4"/>
<rect x="18.7" y="72.7" width="3.1" height="1.6" fill="#2a4070"/>
<rect x="16.8" y="68.8" width="3.4" height="2.3" fill="#2a4070"/>
<rect x="54.8" y="49.0" width="1.6" height="1.3" fill="#d0dcf0"/>
<rect x="50.8" y="45.0" width="3.7" height="2.0" fill="#2a4070"/>
<rect x="25.1" y="57.1" width="1.7" height="1.3" fill="#8aa4d0"/>
<rect x="44.1" y="54.4" width="2.1" height="1.7" fill="#d0dcf0"/>
<rect x="52.2" y="63.5" width="3.9" height="1.7" fill="#6a88c0"/>
<rect x="20.5" y="45.8" width="2.8" height="1.3" fill="#d0dcf0"/>
<rect x="46.9" y="74.3" width="2.9" height="1.7" fill="#2a4070"/>
<rect x="26.3" y="53.0" width="2.7" height="1.2" fill="#6a88c0"/>
<rect x="45.2" y="60.5" width="2.0" height="1.6" fill="#2a4070"/>
<rect x="9.9" y="59.2" width="3.0" height="1.9" fill="#d0dcf0"/>
<rect x="19.9" y="68.4" width="3.8" height="2.6" fill="#8aa4d0"/>
<rect x="41.8" y="55.3" width="3.6" height="1.9" fill="#6a88c0"/>
<rect x="14.6" y="74.4" width="3.6" height="2.9" fill="#2a4070"/>
<rect x="35.7" y="62.0" width="1.5" height="0.9" fill="#2a4070"/>
<rect x="17.9" y="52.5" width="2.4" height="1.4" fill="#2a4070"/>
<rect x="19.1" y="64.0" width="3.7" height="2.7" fill="#2a4070"/>
<rect x="50.7" y="49.3" width="4.1" height="2.4" fill="#2a4070"/>
<rect x="52.6" y="60.1" width="3.1" height="1.4" fill="#2a4070"/>
<rect x="51.6" y="58.8" width="3.6" height="2.5" fill="#6a88c0"/>
<rect x="9.5" y="68.2" width="3.2" height="2.2" fill="#6a88c0"/>
<rect x="16.6" y="61.1" width="4.1" height="2.1" fill="#8aa4d0"/>
<rect x="10.8" y="62.2" width="3.4" height="1.6" fill="#b8c8e4"/>
<rect x="34.7" y="45.3" width="2.9" height="1.4" fill="#8aa4d0"/>
<rect x="49.0" y="47.4" width="4.4" height="2.6" fill="#d0dcf0"/>
<rect x="2.0" y="58.4" width="2.6" height="1.7" fill="#d0dcf0"/>
<rect x="11.2" y="66.3" width="2.6" height="1.4" fill="#2a4070"/>
<rect x="47.1" y="70.9" width="3.6" height="2.2" fill="#8aa4d0"/>
<rect x="30.2" y="53.3" width="2.4" height="1.4" fill="#d0dcf0"/>
<rect x="16.1" y="54.9" width="1.9" height="1.1" fill="#d0dcf0"/>
<rect x="35.3" y="55.5" width="1.9" height="1.2" fill="#d0dcf0"/>
<rect x="26.2" y="50.2" width="1.9" height="0.8" fill="#8aa4d0"/>
<rect x="21.0" y="54.1" width="4.2" height="2.6" fill="#2a4070"/>
<rect x="34.6" y="71.6" width="2.6" height="1.5" fill="#b8c8e4"/>
<rect x="27.1" y="58.9" width="3.6" height="2.0" fill="#b8c8e4"/>
<rect x="32.8" y="52.1" width="4.4" height="2.7" fill="#6a88c0"/>
<rect x="1.1" y="73.3" width="2.4" height="1.9" fill="#b8c8e4"/>
<rect x="26.2" y="47.8" width="3.4" height="1.9" fill="#2a4070"/>
<rect x="2.2" y="48.2" width="2.7" height="1.6" fill="#d0dcf0"/>
<rect x="15.1" y="73.0" width="3.8" height="1.9" fill="#2a4070"/>
<rect x="46.4" y="66.4" width="2.4" height="1.4" fill="#6a88c0"/>
<rect x="28.5" y="70.8" width="4.1" height="3.1" fill="#8aa4d0"/>
<rect x="41.8" y="53.3" width="3.1" height="1.7" fill="#2a4070"/>
<rect x="40.2" y="44.8" width="2.5" height="1.7" fill="#d0dcf0"/>
<rect x="7.3" y="44.1" width="3.2" height="2.1" fill="#8aa4d0"/>
<rect x="48.8" y="60.9" width="1.5" height="1.1" fill="#6a88c0"/>
<rect x="32.7" y="65.4" width="4.4" height="2.9" fill="#6a88c0"/>
<rect x="26.2" y="65.2" width="3.7" height="2.8" fill="#6a88c0"/>
<rect x="45.7" y="46.0" width="4.0" height="2.7" fill="#6a88c0"/>
<rect x="32.0" y="64.1" width="2.9" height="1.5" fill="#b8c8e4"/>
<rect x="26.3" y="61.0" width="3.0" height="1.6" fill="#b8c8e4"/>
<rect x="23.4" y="60.8" width="1.6" height="1.1" fill="#2a4070"/>
<rect x="45.1" y="68.5" width="3.5" height="1.4" fill="#6a88c0"/>
<rect x="53.8" y="74.9" width="3.6" height="1.5" fill="#8aa4d0"/>
<rect x="12.1" y="64.0" width="4.4" height="3.0" fill="#b8c8e4"/>
<rect x="54.7" y="65.9" width="2.8" height="1.3" fill="#b8c8e4"/>
<rect x="22.8" y="49.0" width="3.4" height="1.4" fill="#8aa4d0"/>
<rect x="36.3" y="67.1" width="2.3" height="1.5" fill="#8aa4d0"/>
<rect x="40.8" y="71.2" width="1.9" height="1.1" fill="#2a4070"/>
<rect x="37.7" y="59.2" width="2.6" height="1.7" fill="#8aa4d0"/>
<rect x="7.6" y="53.1" width="3.2" height="2.2" fill="#2a4070"/>
<rect x="50.1" y="61.2" width="3.4" height="1.7" fill="#d0dcf0"/>
<rect x="13.0" y="69.8" width="2.4" height="1.9" fill="#b8c8e4"/>
<rect x="47.5" y="58.1" width="2.7" height="1.2" fill="#8aa4d0"/>
<rect x="36.0" y="46.6" width="3.5" height="1.5" fill="#8aa4d0"/>
<rect x="27.9" y="58.1" width="2.7" height="1.6" fill="#2a4070"/>
<rect x="5.9" y="60.5" width="3.1" height="1.7" fill="#b8c8e4"/>
<rect x="52.0" y="57.3" width="3.9" height="2.7" fill="#8aa4d0"/>
<rect x="53.5" y="64.6" width="4.0" height="1.8" fill="#d0dcf0"/>
<rect x="20.7" y="69.9" width="2.4" height="1.8" fill="#2a4070"/>
<rect x="43.8" y="55.7" width="3.7" height="2.0" fill="#2a4070"/>
</g></g><g clip-path="url(#cMR)"><g filter="url(#b05)" opacity="0.5">
<rect x="87.6" y="61.6" width="3.0" height="1.5" fill="#1c2c48"/>
<rect x="48.7" y="44.0" width="4.4" height="3.1" fill="#6a84b0"/>
<rect x="86.2" y="20.5" width="3.9" height="2.7" fill="#8aa0c8"/>
<rect x="94.6" y="40.4" width="1.8" height="1.1" fill="#6a84b0"/>
<rect x="79.8" y="45.8" width="1.8" height="1.0" fill="#1c2c48"/>
<rect x="61.7" y="30.7" width="2.3" height="1.5" fill="#4a6490"/>
<rect x="82.0" y="59.7" width="1.8" height="0.7" fill="#4a6490"/>
<rect x="89.7" y="68.5" width="3.0" height="2.2" fill="#4a6490"/>
<rect x="70.9" y="48.3" width="3.6" height="2.6" fill="#1c2c48"/>
<rect x="78.0" y="18.4" width="2.8" height="1.5" fill="#1c2c48"/>
<rect x="45.4" y="66.0" width="3.1" height="1.4" fill="#6a84b0"/>
<rect x="58.7" y="14.7" width="3.0" height="1.3" fill="#4a6490"/>
<rect x="90.0" y="65.7" width="3.1" height="1.5" fill="#4a6490"/>
<rect x="41.0" y="25.0" width="4.2" height="2.7" fill="#6a84b0"/>
<rect x="62.5" y="39.6" width="2.4" height="1.6" fill="#8aa0c8"/>
<rect x="43.2" y="31.7" width="3.7" height="2.1" fill="#8aa0c8"/>
<rect x="54.7" y="73.4" width="4.2" height="2.8" fill="#8aa0c8"/>
<rect x="66.8" y="62.3" width="3.9" height="2.4" fill="#8aa0c8"/>
<rect x="58.2" y="61.2" width="4.3" height="2.1" fill="#6a84b0"/>
<rect x="67.1" y="54.2" width="4.4" height="1.8" fill="#1c2c48"/>
<rect x="55.1" y="60.1" width="2.1" height="1.2" fill="#6a84b0"/>
<rect x="95.7" y="19.1" width="2.7" height="2.1" fill="#8aa0c8"/>
<rect x="56.1" y="35.6" width="2.9" height="1.3" fill="#8aa0c8"/>
<rect x="69.8" y="47.6" width="2.9" height="1.6" fill="#4a6490"/>
<rect x="98.2" y="69.2" width="2.6" height="1.7" fill="#6a84b0"/>
<rect x="78.8" y="73.1" width="3.7" height="1.7" fill="#6a84b0"/>
<rect x="73.6" y="46.8" width="4.4" height="2.1" fill="#1c2c48"/>
<rect x="80.9" y="27.8" width="4.4" height="2.7" fill="#1c2c48"/>
<rect x="95.2" y="11.6" width="2.3" height="0.9" fill="#8aa0c8"/>
<rect x="44.5" y="17.4" width="2.6" height="2.1" fill="#4a6490"/>
<rect x="76.4" y="10.8" width="3.4" height="1.5" fill="#1c2c48"/>
<rect x="42.7" y="35.8" width="3.7" height="1.6" fill="#1c2c48"/>
<rect x="82.1" y="9.5" width="4.0" height="1.7" fill="#6a84b0"/>
<rect x="94.5" y="67.0" width="2.9" height="1.9" fill="#4a6490"/>
<rect x="89.1" y="14.2" width="4.3" height="2.5" fill="#8aa0c8"/>
<rect x="66.8" y="20.7" width="3.6" height="1.5" fill="#6a84b0"/>
<rect x="98.7" y="21.5" width="4.3" height="1.9" fill="#6a84b0"/>
<rect x="56.8" y="72.5" width="2.8" height="2.1" fill="#1c2c48"/>
<rect x="82.8" y="18.7" width="3.3" height="1.6" fill="#1c2c48"/>
<rect x="84.3" y="25.2" width="1.6" height="1.2" fill="#4a6490"/>
<rect x="82.0" y="25.8" width="1.7" height="1.2" fill="#1c2c48"/>
<rect x="64.0" y="10.2" width="3.7" height="2.4" fill="#4a6490"/>
<rect x="44.4" y="39.0" width="1.6" height="1.0" fill="#4a6490"/>
<rect x="51.0" y="55.4" width="3.0" height="2.2" fill="#4a6490"/>
<rect x="96.7" y="52.2" width="3.6" height="1.6" fill="#4a6490"/>
<rect x="85.4" y="74.5" width="3.2" height="1.3" fill="#8aa0c8"/>
<rect x="51.3" y="24.4" width="2.6" height="1.5" fill="#8aa0c8"/>
<rect x="90.7" y="39.8" width="4.1" height="1.8" fill="#4a6490"/>
<rect x="78.7" y="60.4" width="2.6" height="1.7" fill="#4a6490"/>
<rect x="49.8" y="46.9" width="2.7" height="1.1" fill="#1c2c48"/>
<rect x="68.3" y="4.4" width="3.5" height="2.1" fill="#6a84b0"/>
<rect x="75.7" y="4.5" width="2.2" height="1.2" fill="#6a84b0"/>
<rect x="45.6" y="5.8" width="3.2" height="1.4" fill="#8aa0c8"/>
<rect x="47.2" y="8.4" width="4.4" height="1.9" fill="#1c2c48"/>
<rect x="85.0" y="50.7" width="3.7" height="2.4" fill="#6a84b0"/>
<rect x="55.3" y="17.4" width="3.9" height="2.6" fill="#4a6490"/>
<rect x="56.7" y="1.0" width="3.1" height="2.1" fill="#6a84b0"/>
<rect x="86.6" y="7.0" width="3.3" height="1.4" fill="#6a84b0"/>
<rect x="81.5" y="17.0" width="3.8" height="2.1" fill="#6a84b0"/>
<rect x="66.1" y="62.4" width="1.7" height="0.8" fill="#1c2c48"/>
<rect x="60.2" y="36.4" width="2.9" height="1.5" fill="#6a84b0"/>
<rect x="53.8" y="9.4" width="3.1" height="1.6" fill="#8aa0c8"/>
<rect x="98.9" y="32.2" width="3.1" height="2.2" fill="#6a84b0"/>
<rect x="55.2" y="22.4" width="1.6" height="1.1" fill="#1c2c48"/>
<rect x="88.5" y="43.2" width="4.3" height="3.1" fill="#4a6490"/>
<rect x="47.2" y="44.5" width="2.9" height="2.2" fill="#8aa0c8"/>
<rect x="52.9" y="48.3" width="2.7" height="1.9" fill="#8aa0c8"/>
<rect x="92.2" y="64.1" width="2.5" height="1.3" fill="#4a6490"/>
<rect x="57.1" y="44.1" width="3.5" height="1.7" fill="#6a84b0"/>
<rect x="50.6" y="30.6" width="3.4" height="1.7" fill="#1c2c48"/>
</g></g></svg></div>
<div class="a" style="left:1130px;top:1313.5px;width:28px;height:29px;border-radius:5px;background:#fff;border:1.5px solid #c6c6c6"></div>
<div class="a" style="left:1420px;top:1007px;width:291px;height:288px;border:1.5px solid #d4d4d4;background:#fff"></div>
<div class="a" style="left:1421px;top:1042px;width:289px;height:217px;overflow:hidden"><svg width="100%" height="100%" viewBox="0 0 100 75" preserveAspectRatio="none" style="display:block"><rect width="100" height="75" fill="#2c4272"/>
<g filter="url(#b1)">
<polygon points="0,0 100,0 100,2 90,10 82,26 75,34 45,34 32,28 20,18 10,12 0,10" fill="#4a78c0"/>
<rect x="20" y="0" width="60" height="4" fill="#3e66b8"/>
<rect x="30" y="14" width="50" height="12" fill="#6890c4" opacity="0.8"/>
<polygon points="30,26 80,26 80,34 74,40 40,40" fill="#90a8c6"/>
<polygon points="36,29 78,29 74,37 44,35" fill="#c8d0d8"/>
<polygon points="0,8 10,12 14,20 12,50 0,60" fill="#34508a"/>
<polygon points="4,12 10,14 8,30 3,26" fill="#8a8ca8" opacity="0.7"/>
<polygon points="12,16 22,26 32,38 44,48 54,56 50,60 38,54 24,50 12,46" fill="#aaa6a6"/>
<polygon points="16,24 24,32 22,44 14,40" fill="#c4c0c0" opacity="0.7"/>
<polygon points="40,44 56,50 58,58 46,54" fill="#8e8874" opacity="0.8"/>
<polygon points="0,48 12,46 38,54 54,60 40,75 0,75" fill="#4e6ca4"/>
<polygon points="4,52 30,54 24,66 4,64" fill="#6c88b8" opacity="0.7"/>
<polygon points="100,0 92,4 86,14 80,30 72,40 56,54 40,75 100,75" fill="#25375a"/>
<polygon points="88,10 96,6 100,12 100,30 90,26" fill="#3e5684" opacity="0.8"/>
<polygon points="70,75 100,52 100,75" fill="#34507e" opacity="0.8"/>
<polygon points="12,70 96,34 96,37 16,73" fill="#7a92ba" opacity="0.8"/>
</g><g clip-path="url(#cML)"><g filter="url(#b05)" opacity="0.6">
<rect x="34.3" y="67.0" width="3.9" height="3.0" fill="#d0dcf0"/>
<rect x="1.6" y="58.4" width="4.3" height="2.9" fill="#b8c8e4"/>
<rect x="6.2" y="58.5" width="2.2" height="1.4" fill="#d0dcf0"/>
<rect x="13.7" y="66.7" width="2.7" height="1.3" fill="#6a88c0"/>
<rect x="8.8" y="68.7" width="1.9" height="1.2" fill="#b8c8e4"/>
<rect x="7.3" y="74.1" width="1.5" height="1.1" fill="#b8c8e4"/>
<rect x="48.0" y="53.0" width="4.4" height="2.7" fill="#b8c8e4"/>
<rect x="10.0" y="74.0" width="2.1" height="1.6" fill="#6a88c0"/>
<rect x="16.4" y="55.2" width="2.0" height="0.9" fill="#8aa4d0"/>
<rect x="18.3" y="69.3" width="3.3" height="2.1" fill="#2a4070"/>
<rect x="3.6" y="55.0" width="2.4" height="1.6" fill="#b8c8e4"/>
<rect x="26.5" y="65.8" width="1.7" height="1.3" fill="#8aa4d0"/>
<rect x="52.2" y="55.1" width="2.7" height="1.7" fill="#6a88c0"/>
<rect x="20.1" y="61.9" width="1.5" height="0.6" fill="#b8c8e4"/>
<rect x="34.3" y="73.6" width="1.9" height="0.9" fill="#6a88c0"/>
<rect x="18.9" y="55.0" width="3.1" height="2.2" fill="#8aa4d0"/>
<rect x="32.4" y="68.2" width="2.6" height="1.3" fill="#6a88c0"/>
<rect x="52.0" y="46.8" width="2.5" height="1.6" fill="#b8c8e4"/>
<rect x="18.7" y="72.7" width="3.1" height="1.6" fill="#2a4070"/>
<rect x="16.8" y="68.8" width="3.4" height="2.3" fill="#2a4070"/>
<rect x="54.8" y="49.0" width="1.6" height="1.3" fill="#d0dcf0"/>
<rect x="50.8" y="45.0" width="3.7" height="2.0" fill="#2a4070"/>
<rect x="25.1" y="57.1" width="1.7" height="1.3" fill="#8aa4d0"/>
<rect x="44.1" y="54.4" width="2.1" height="1.7" fill="#d0dcf0"/>
<rect x="52.2" y="63.5" width="3.9" height="1.7" fill="#6a88c0"/>
<rect x="20.5" y="45.8" width="2.8" height="1.3" fill="#d0dcf0"/>
<rect x="46.9" y="74.3" width="2.9" height="1.7" fill="#2a4070"/>
<rect x="26.3" y="53.0" width="2.7" height="1.2" fill="#6a88c0"/>
<rect x="45.2" y="60.5" width="2.0" height="1.6" fill="#2a4070"/>
<rect x="9.9" y="59.2" width="3.0" height="1.9" fill="#d0dcf0"/>
<rect x="19.9" y="68.4" width="3.8" height="2.6" fill="#8aa4d0"/>
<rect x="41.8" y="55.3" width="3.6" height="1.9" fill="#6a88c0"/>
<rect x="14.6" y="74.4" width="3.6" height="2.9" fill="#2a4070"/>
<rect x="35.7" y="62.0" width="1.5" height="0.9" fill="#2a4070"/>
<rect x="17.9" y="52.5" width="2.4" height="1.4" fill="#2a4070"/>
<rect x="19.1" y="64.0" width="3.7" height="2.7" fill="#2a4070"/>
<rect x="50.7" y="49.3" width="4.1" height="2.4" fill="#2a4070"/>
<rect x="52.6" y="60.1" width="3.1" height="1.4" fill="#2a4070"/>
<rect x="51.6" y="58.8" width="3.6" height="2.5" fill="#6a88c0"/>
<rect x="9.5" y="68.2" width="3.2" height="2.2" fill="#6a88c0"/>
<rect x="16.6" y="61.1" width="4.1" height="2.1" fill="#8aa4d0"/>
<rect x="10.8" y="62.2" width="3.4" height="1.6" fill="#b8c8e4"/>
<rect x="34.7" y="45.3" width="2.9" height="1.4" fill="#8aa4d0"/>
<rect x="49.0" y="47.4" width="4.4" height="2.6" fill="#d0dcf0"/>
<rect x="2.0" y="58.4" width="2.6" height="1.7" fill="#d0dcf0"/>
<rect x="11.2" y="66.3" width="2.6" height="1.4" fill="#2a4070"/>
<rect x="47.1" y="70.9" width="3.6" height="2.2" fill="#8aa4d0"/>
<rect x="30.2" y="53.3" width="2.4" height="1.4" fill="#d0dcf0"/>
<rect x="16.1" y="54.9" width="1.9" height="1.1" fill="#d0dcf0"/>
<rect x="35.3" y="55.5" width="1.9" height="1.2" fill="#d0dcf0"/>
<rect x="26.2" y="50.2" width="1.9" height="0.8" fill="#8aa4d0"/>
<rect x="21.0" y="54.1" width="4.2" height="2.6" fill="#2a4070"/>
<rect x="34.6" y="71.6" width="2.6" height="1.5" fill="#b8c8e4"/>
<rect x="27.1" y="58.9" width="3.6" height="2.0" fill="#b8c8e4"/>
<rect x="32.8" y="52.1" width="4.4" height="2.7" fill="#6a88c0"/>
<rect x="1.1" y="73.3" width="2.4" height="1.9" fill="#b8c8e4"/>
<rect x="26.2" y="47.8" width="3.4" height="1.9" fill="#2a4070"/>
<rect x="2.2" y="48.2" width="2.7" height="1.6" fill="#d0dcf0"/>
<rect x="15.1" y="73.0" width="3.8" height="1.9" fill="#2a4070"/>
<rect x="46.4" y="66.4" width="2.4" height="1.4" fill="#6a88c0"/>
<rect x="28.5" y="70.8" width="4.1" height="3.1" fill="#8aa4d0"/>
<rect x="41.8" y="53.3" width="3.1" height="1.7" fill="#2a4070"/>
<rect x="40.2" y="44.8" width="2.5" height="1.7" fill="#d0dcf0"/>
<rect x="7.3" y="44.1" width="3.2" height="2.1" fill="#8aa4d0"/>
<rect x="48.8" y="60.9" width="1.5" height="1.1" fill="#6a88c0"/>
<rect x="32.7" y="65.4" width="4.4" height="2.9" fill="#6a88c0"/>
<rect x="26.2" y="65.2" width="3.7" height="2.8" fill="#6a88c0"/>
<rect x="45.7" y="46.0" width="4.0" height="2.7" fill="#6a88c0"/>
<rect x="32.0" y="64.1" width="2.9" height="1.5" fill="#b8c8e4"/>
<rect x="26.3" y="61.0" width="3.0" height="1.6" fill="#b8c8e4"/>
<rect x="23.4" y="60.8" width="1.6" height="1.1" fill="#2a4070"/>
<rect x="45.1" y="68.5" width="3.5" height="1.4" fill="#6a88c0"/>
<rect x="53.8" y="74.9" width="3.6" height="1.5" fill="#8aa4d0"/>
<rect x="12.1" y="64.0" width="4.4" height="3.0" fill="#b8c8e4"/>
<rect x="54.7" y="65.9" width="2.8" height="1.3" fill="#b8c8e4"/>
<rect x="22.8" y="49.0" width="3.4" height="1.4" fill="#8aa4d0"/>
<rect x="36.3" y="67.1" width="2.3" height="1.5" fill="#8aa4d0"/>
<rect x="40.8" y="71.2" width="1.9" height="1.1" fill="#2a4070"/>
<rect x="37.7" y="59.2" width="2.6" height="1.7" fill="#8aa4d0"/>
<rect x="7.6" y="53.1" width="3.2" height="2.2" fill="#2a4070"/>
<rect x="50.1" y="61.2" width="3.4" height="1.7" fill="#d0dcf0"/>
<rect x="13.0" y="69.8" width="2.4" height="1.9" fill="#b8c8e4"/>
<rect x="47.5" y="58.1" width="2.7" height="1.2" fill="#8aa4d0"/>
<rect x="36.0" y="46.6" width="3.5" height="1.5" fill="#8aa4d0"/>
<rect x="27.9" y="58.1" width="2.7" height="1.6" fill="#2a4070"/>
<rect x="5.9" y="60.5" width="3.1" height="1.7" fill="#b8c8e4"/>
<rect x="52.0" y="57.3" width="3.9" height="2.7" fill="#8aa4d0"/>
<rect x="53.5" y="64.6" width="4.0" height="1.8" fill="#d0dcf0"/>
<rect x="20.7" y="69.9" width="2.4" height="1.8" fill="#2a4070"/>
<rect x="43.8" y="55.7" width="3.7" height="2.0" fill="#2a4070"/>
</g></g><g clip-path="url(#cMR)"><g filter="url(#b05)" opacity="0.5">
<rect x="87.6" y="61.6" width="3.0" height="1.5" fill="#1c2c48"/>
<rect x="48.7" y="44.0" width="4.4" height="3.1" fill="#6a84b0"/>
<rect x="86.2" y="20.5" width="3.9" height="2.7" fill="#8aa0c8"/>
<rect x="94.6" y="40.4" width="1.8" height="1.1" fill="#6a84b0"/>
<rect x="79.8" y="45.8" width="1.8" height="1.0" fill="#1c2c48"/>
<rect x="61.7" y="30.7" width="2.3" height="1.5" fill="#4a6490"/>
<rect x="82.0" y="59.7" width="1.8" height="0.7" fill="#4a6490"/>
<rect x="89.7" y="68.5" width="3.0" height="2.2" fill="#4a6490"/>
<rect x="70.9" y="48.3" width="3.6" height="2.6" fill="#1c2c48"/>
<rect x="78.0" y="18.4" width="2.8" height="1.5" fill="#1c2c48"/>
<rect x="45.4" y="66.0" width="3.1" height="1.4" fill="#6a84b0"/>
<rect x="58.7" y="14.7" width="3.0" height="1.3" fill="#4a6490"/>
<rect x="90.0" y="65.7" width="3.1" height="1.5" fill="#4a6490"/>
<rect x="41.0" y="25.0" width="4.2" height="2.7" fill="#6a84b0"/>
<rect x="62.5" y="39.6" width="2.4" height="1.6" fill="#8aa0c8"/>
<rect x="43.2" y="31.7" width="3.7" height="2.1" fill="#8aa0c8"/>
<rect x="54.7" y="73.4" width="4.2" height="2.8" fill="#8aa0c8"/>
<rect x="66.8" y="62.3" width="3.9" height="2.4" fill="#8aa0c8"/>
<rect x="58.2" y="61.2" width="4.3" height="2.1" fill="#6a84b0"/>
<rect x="67.1" y="54.2" width="4.4" height="1.8" fill="#1c2c48"/>
<rect x="55.1" y="60.1" width="2.1" height="1.2" fill="#6a84b0"/>
<rect x="95.7" y="19.1" width="2.7" height="2.1" fill="#8aa0c8"/>
<rect x="56.1" y="35.6" width="2.9" height="1.3" fill="#8aa0c8"/>
<rect x="69.8" y="47.6" width="2.9" height="1.6" fill="#4a6490"/>
<rect x="98.2" y="69.2" width="2.6" height="1.7" fill="#6a84b0"/>
<rect x="78.8" y="73.1" width="3.7" height="1.7" fill="#6a84b0"/>
<rect x="73.6" y="46.8" width="4.4" height="2.1" fill="#1c2c48"/>
<rect x="80.9" y="27.8" width="4.4" height="2.7" fill="#1c2c48"/>
<rect x="95.2" y="11.6" width="2.3" height="0.9" fill="#8aa0c8"/>
<rect x="44.5" y="17.4" width="2.6" height="2.1" fill="#4a6490"/>
<rect x="76.4" y="10.8" width="3.4" height="1.5" fill="#1c2c48"/>
<rect x="42.7" y="35.8" width="3.7" height="1.6" fill="#1c2c48"/>
<rect x="82.1" y="9.5" width="4.0" height="1.7" fill="#6a84b0"/>
<rect x="94.5" y="67.0" width="2.9" height="1.9" fill="#4a6490"/>
<rect x="89.1" y="14.2" width="4.3" height="2.5" fill="#8aa0c8"/>
<rect x="66.8" y="20.7" width="3.6" height="1.5" fill="#6a84b0"/>
<rect x="98.7" y="21.5" width="4.3" height="1.9" fill="#6a84b0"/>
<rect x="56.8" y="72.5" width="2.8" height="2.1" fill="#1c2c48"/>
<rect x="82.8" y="18.7" width="3.3" height="1.6" fill="#1c2c48"/>
<rect x="84.3" y="25.2" width="1.6" height="1.2" fill="#4a6490"/>
<rect x="82.0" y="25.8" width="1.7" height="1.2" fill="#1c2c48"/>
<rect x="64.0" y="10.2" width="3.7" height="2.4" fill="#4a6490"/>
<rect x="44.4" y="39.0" width="1.6" height="1.0" fill="#4a6490"/>
<rect x="51.0" y="55.4" width="3.0" height="2.2" fill="#4a6490"/>
<rect x="96.7" y="52.2" width="3.6" height="1.6" fill="#4a6490"/>
<rect x="85.4" y="74.5" width="3.2" height="1.3" fill="#8aa0c8"/>
<rect x="51.3" y="24.4" width="2.6" height="1.5" fill="#8aa0c8"/>
<rect x="90.7" y="39.8" width="4.1" height="1.8" fill="#4a6490"/>
<rect x="78.7" y="60.4" width="2.6" height="1.7" fill="#4a6490"/>
<rect x="49.8" y="46.9" width="2.7" height="1.1" fill="#1c2c48"/>
<rect x="68.3" y="4.4" width="3.5" height="2.1" fill="#6a84b0"/>
<rect x="75.7" y="4.5" width="2.2" height="1.2" fill="#6a84b0"/>
<rect x="45.6" y="5.8" width="3.2" height="1.4" fill="#8aa0c8"/>
<rect x="47.2" y="8.4" width="4.4" height="1.9" fill="#1c2c48"/>
<rect x="85.0" y="50.7" width="3.7" height="2.4" fill="#6a84b0"/>
<rect x="55.3" y="17.4" width="3.9" height="2.6" fill="#4a6490"/>
<rect x="56.7" y="1.0" width="3.1" height="2.1" fill="#6a84b0"/>
<rect x="86.6" y="7.0" width="3.3" height="1.4" fill="#6a84b0"/>
<rect x="81.5" y="17.0" width="3.8" height="2.1" fill="#6a84b0"/>
<rect x="66.1" y="62.4" width="1.7" height="0.8" fill="#1c2c48"/>
<rect x="60.2" y="36.4" width="2.9" height="1.5" fill="#6a84b0"/>
<rect x="53.8" y="9.4" width="3.1" height="1.6" fill="#8aa0c8"/>
<rect x="98.9" y="32.2" width="3.1" height="2.2" fill="#6a84b0"/>
<rect x="55.2" y="22.4" width="1.6" height="1.1" fill="#1c2c48"/>
<rect x="88.5" y="43.2" width="4.3" height="3.1" fill="#4a6490"/>
<rect x="47.2" y="44.5" width="2.9" height="2.2" fill="#8aa0c8"/>
<rect x="52.9" y="48.3" width="2.7" height="1.9" fill="#8aa0c8"/>
<rect x="92.2" y="64.1" width="2.5" height="1.3" fill="#4a6490"/>
<rect x="57.1" y="44.1" width="3.5" height="1.7" fill="#6a84b0"/>
<rect x="50.6" y="30.6" width="3.4" height="1.7" fill="#1c2c48"/>
</g></g></svg></div>
<div class="a" style="left:1436px;top:1313.5px;width:28px;height:29px;border-radius:5px;background:#3a8ef2"></div>
<svg class="a" style="left:1436px;top:1313.5px" width="28" height="29" viewBox="0 0 28 29"><path d="M6.5 15.5 L11.5 21.5 L21.5 6.5" fill="none" stroke="#fff" stroke-width="2.6" stroke-linecap="round" stroke-linejoin="round"/></svg>
<div class="a" style="left:1726px;top:1007px;width:291px;height:288px;border:1.5px solid #d4d4d4;background:#fff"></div>
<div class="a" style="left:1727px;top:1042px;width:289px;height:217px;overflow:hidden"><svg width="100%" height="100%" viewBox="0 0 100 75" preserveAspectRatio="none" style="display:block"><rect width="100" height="75" fill="url(#gSky)"/>
<g filter="url(#b2)">
<rect x="0" y="0" width="40" height="30" fill="#8cb4d0" opacity="0.8"/>
<rect x="62" y="0" width="38" height="14" fill="#4a88c4" opacity="0.7"/>
<polygon points="20,32 64,6 67,10 24,35" fill="#b8d2e4" opacity="0.5"/>
<ellipse cx="42" cy="39" rx="22" ry="6" fill="#eef2f4"/>
<rect x="70" y="28" width="30" height="6" fill="#6aa4c0" opacity="0.7"/>
<ellipse cx="82" cy="41" rx="18" ry="3" fill="#e0e4ea" opacity="0.8"/>
<rect x="0" y="44" width="20" height="16" fill="#6a9aa2" opacity="0.5"/>
<rect x="80" y="52" width="20" height="23" fill="#506474" opacity="0.6"/>
<rect x="20" y="62" width="50" height="5" fill="#a0b4c0" opacity="0.6"/>
</g>
<ellipse cx="49.5" cy="72" rx="1.2" ry="2.6" fill="#4a2838"/></svg></div>
<div class="a" style="left:1742px;top:1313.5px;width:28px;height:29px;border-radius:5px;background:#fff;border:1.5px solid #c6c6c6"></div>
<div class="a" style="left:733px;top:238px;width:427px;height:571px;border-radius:10px;background:#ececec;border:2px solid #d0d0d0;box-shadow:0 10px 30px rgba(0,0,0,0.13)"></div>
<div class="t" style="left:762.5px;top:260.7px;font-size:28px;color:#1e1e1e;-webkit-text-stroke:0.3px #1e1e1e;letter-spacing:0.37px;font-weight:400;">Intelligent auswählen</div>
<div class="t" style="left:762.5px;top:306.7px;font-size:28px;color:#1e1e1e;-webkit-text-stroke:0.3px #1e1e1e;letter-spacing:0.38px;font-weight:400;">Nach Priorität auswählen</div>
<div class="t" style="left:762.5px;top:352.7px;font-size:28px;color:#1e1e1e;-webkit-text-stroke:0.3px #1e1e1e;letter-spacing:0.00px;font-weight:400;">Neueste auswählen</div>
<div class="t" style="left:762.5px;top:398.7px;font-size:28px;color:#1e1e1e;-webkit-text-stroke:0.3px #1e1e1e;letter-spacing:0.00px;font-weight:400;">Älteste auswählen</div>
<div class="t" style="left:762.5px;top:444.7px;font-size:28px;color:#1e1e1e;-webkit-text-stroke:0.3px #1e1e1e;letter-spacing:0.00px;font-weight:400;">Größte auswählen</div>
<div class="t" style="left:762.5px;top:490.7px;font-size:28px;color:#1e1e1e;-webkit-text-stroke:0.3px #1e1e1e;letter-spacing:0.00px;font-weight:400;">Kleinste auswählen</div>
<div class="t" style="left:762.5px;top:536.7px;font-size:28px;color:#1e1e1e;-webkit-text-stroke:0.3px #1e1e1e;letter-spacing:0.00px;font-weight:400;">Höchste Auflösung wählen</div>
<div class="t" style="left:762.5px;top:582.0px;font-size:28px;color:#1e1e1e;-webkit-text-stroke:0.3px #1e1e1e;letter-spacing:0.53px;font-weight:400;">Niedrigste Auflösung wählen</div>
<div class="t" style="left:762.5px;top:650.1px;font-size:28px;color:#1e1e1e;-webkit-text-stroke:0.3px #1e1e1e;letter-spacing:0.00px;font-weight:400;">Alles auswählen</div>
<div class="t" style="left:762.5px;top:695.9px;font-size:28px;color:#1e1e1e;-webkit-text-stroke:0.3px #1e1e1e;letter-spacing:0.00px;font-weight:400;">Alle abwählen</div>
<div class="t" style="left:762.5px;top:764.0px;font-size:28px;color:#1e1e1e;-webkit-text-stroke:0.3px #1e1e1e;letter-spacing:0.00px;font-weight:400;">Benutzerdefiniert...</div>
<div class="a" style="left:760px;top:627px;width:375px;height:2px;background:#d3d3d3"></div>
<div class="a" style="left:760px;top:740px;width:375px;height:2px;background:#d3d3d3"></div>
<div class="a" style="left:0;top:1316px;width:2162px;height:72px;background:#f6f6f6;border-top:1.5px solid #d8d8d8"></div>
<div class="t" style="left:31.5px;top:1346.7px;font-size:24px;color:#222222;-webkit-text-stroke:0.3px #222222;letter-spacing:0.30px;font-weight:400;">40</div>
<div class="t" style="left:66.6px;top:1346.7px;font-size:24px;color:#7a7a7a;-webkit-text-stroke:0.3px #7a7a7a;letter-spacing:0.61px;font-weight:400;">ausgewählte Dateien.</div>
<div class="t" style="left:317.5px;top:1346.7px;font-size:24px;color:#222222;-webkit-text-stroke:0.3px #222222;letter-spacing:0.65px;font-weight:400;">59.42 MB</div>
<div class="t" style="left:432.0px;top:1346.7px;font-size:24px;color:#7a7a7a;-webkit-text-stroke:0.3px #7a7a7a;letter-spacing:0.79px;font-weight:400;">Speicherplatz wird freigegeben.</div>
<div class="a" style="left:1647px;top:1332px;width:239px;height:48px;background:#fff;border:2px solid #a4a4a4;border-radius:8px"></div>
<div class="t" style="left:1673.3px;top:1344.9px;font-size:23px;color:#6e6e6e;-webkit-text-stroke:0.3px #6e6e6e;letter-spacing:0.09px;font-weight:400;">Im Finder löschen</div>
<div class="a" style="left:1910px;top:1332px;width:179px;height:48px;background:linear-gradient(#3a8cfa,#1f76f3);border-radius:6px"></div>
<div class="t" style="left:1949.7px;top:1344.6px;font-size:26px;color:#ffffff;-webkit-text-stroke:0.3px #ffffff;letter-spacing:0.28px;font-weight:400;">Löschen</div>
</body></html>
